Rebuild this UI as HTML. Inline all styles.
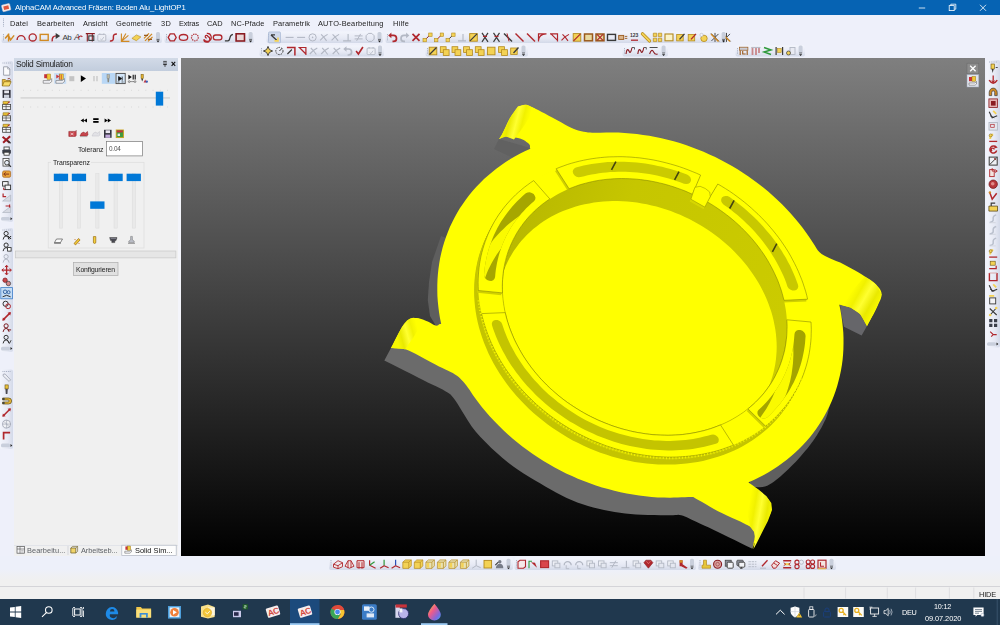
<!DOCTYPE html>
<html lang="de">
<head>
<meta charset="utf-8">
<title>AlphaCAM Advanced Fräsen: Boden Alu_LightOP1</title>
<style>
*{box-sizing:border-box;margin:0;padding:0}
html,body{width:1000px;height:625px;overflow:hidden;background:#eef0fa}
body{position:relative;font-family:"Liberation Sans",sans-serif;font-size:7.3px;color:#1a1a1a;-webkit-font-smoothing:antialiased}
.abs{position:absolute}
.tx{white-space:nowrap;line-height:9px;color:#1c1c1c;will-change:transform}
#title{left:0;top:0;width:1000px;height:15px;background:#0663b3;color:#fff}
#title .t{position:absolute;left:14.5px;top:3.2px;font-size:7.7px;line-height:9px;white-space:nowrap;letter-spacing:-0.05px}
#menu{left:0;top:15px;width:1000px;height:15px;background:#eef0fa}
#menu span{position:absolute;top:3.6px;font-size:7.4px;line-height:9px;white-space:nowrap;color:#1c1c1c}
#tools{left:0;top:30px;width:1000px;height:28px;background:#eef0fa}
#leftbar{left:0;top:58px;width:14px;height:498px;background:#eef0fa}
#panel{left:14px;top:58px;width:164px;height:498px;background:#f0f0f0}
#panel .hd{position:absolute;left:0;top:0;width:164px;height:12.5px;background:linear-gradient(#d2dae7,#c2cddd)}
#panel .hd .t{position:absolute;left:2px;top:1.7px;font-size:8px;line-height:9px;color:#1c1c1c;white-space:nowrap}
#split{left:178px;top:58px;width:3px;height:498px;background:#f4f5fb}
#view{left:181px;top:58px;width:804px;height:498px;background:linear-gradient(#7f7f7f,#000);overflow:hidden}
#rightbar{left:985px;top:58px;width:15px;height:498px;background:#eef0fa}
#bottools{left:0;top:556px;width:1000px;height:30px;background:linear-gradient(#edf0fa 0,#edf0fa 13px,#eff0f4 19px,#f0f0f0 24px)}
#status{left:0;top:586px;width:1000px;height:13px;background:#f0f0f0;border-top:1px solid #d4d4d8}
#task{left:0;top:599px;width:1000px;height:26px;background:#20384e}
</style>
</head>
<body>
<div id="title" class="abs"></div>
<div id="menu" class="abs"></div>
<div id="tools" class="abs"></div>
<div id="leftbar" class="abs"></div>
<div id="panel" class="abs">
<div class="hd"></div>
</div>
<div id="split" class="abs"></div>
<div id="view" class="abs">
<svg id="scene" width="804" height="498" viewBox="181 58 804 498" style="position:absolute;left:0;top:0">
<!--SCENE-->
<path d="M499.0,139.0 L530.0,148.0 L522.0,162.0 L494.0,149.0Z" fill="#616161"/>
<path d="M441.0,236.0 L432.0,262.0 L429.0,282.0 L427.8,300.0 L430.0,316.0 L436.0,326.0 L448.0,326.0 L452.0,240.0Z" fill="#5e5e5e"/>
<path d="M391.0,348.0 L384.3,360.5 L390.9,363.8 L397.8,367.3 L404.7,370.8 L411.3,374.1 L417.5,377.2 L423.0,380.0 L427.8,382.4 L432.1,384.4 L436.0,386.3 L439.5,388.0 L442.6,389.6 L445.4,391.2 L447.6,392.5 L449.1,393.5 L450.3,394.3 L451.4,395.4 L452.9,397.2 L455.0,400.0 L457.7,404.0 L460.7,409.0 L464.1,414.6 L467.8,420.6 L471.7,426.5 L476.0,432.0 L480.7,437.3 L485.9,442.6 L491.3,447.9 L496.9,453.1 L502.5,458.0 L508.0,462.5 L513.3,466.6 L518.7,470.3 L524.0,473.7 L529.3,477.0 L534.7,480.2 L540.0,483.3 L545.3,486.4 L550.7,489.5 L556.0,492.5 L561.3,495.3 L566.7,497.9 L572.0,500.3 L577.3,502.4 L582.7,504.3 L588.0,505.9 L593.3,507.4 L598.7,508.8 L604.0,510.0 L609.3,511.1 L614.6,512.0 L619.9,512.8 L625.2,513.5 L630.6,514.0 L636.0,514.5 L641.8,514.8 L648.0,515.0 L654.3,515.1 L660.3,515.2 L665.6,515.2 L670.0,515.2 L673.2,515.2 L675.4,515.0 L676.9,514.9 L678.2,514.8 L679.5,514.9 L681.2,515.2 L683.1,515.7 L684.9,516.4 L686.8,517.3 L688.8,518.3 L691.2,519.5 L694.0,520.8 L697.2,522.3 L700.8,523.9 L704.7,525.7 L708.8,527.6 L713.3,529.7 L718.0,532.0 L723.1,534.5 L728.7,537.2 L734.6,540.0 L740.5,543.0 L746.5,545.9 L752.4,548.8 L760.0,520.0 L740.0,500.0 L600.0,470.0 L480.0,380.0 L400.0,340.0Z" fill="#6b6b6b"/>
<path d="M749.2,483.2 L749.8,484.0 L750.3,484.8 L750.9,485.6 L751.7,486.3 L753.0,486.8 L754.9,487.1 L757.3,487.3 L759.9,487.3 L762.5,487.0 L765.0,486.5 L767.2,485.7 L769.4,484.5 L771.6,483.2 L773.8,481.7 L776.0,480.0 L778.3,478.2 L780.7,476.2 L783.1,474.1 L785.6,471.8 L788.0,469.5 L790.5,467.1 L793.0,464.5 L795.6,461.9 L798.1,459.2 L800.5,456.5 L802.8,453.8 L805.1,451.1 L807.4,448.4 L809.5,445.7 L811.5,443.0 L813.4,440.4 L815.2,437.8 L816.9,435.2 L818.5,432.6 L820.0,430.0 L821.5,427.4 L822.9,424.7 L824.2,422.1 L825.5,419.5 L826.5,417.0 L827.3,414.7 L828.0,412.5 L828.5,410.3 L829.0,408.2 L829.5,406.0 L820.0,400.0 L780.0,460.0 L750.0,480.0Z" fill="#5f5f5f"/>
<path d="M840.0,304.7 L850.4,307.6 L860.0,314.0 L865.6,323.6 L867.0,326.0 L861.6,335.6 L844.0,326.8 L841.6,315.6Z" fill="#66666a"/>
<path d="M441.2,323.9 L440.0,318.3 L439.1,312.8 L438.4,307.2 L437.8,301.6 L437.4,296.0 L437.3,290.4 L437.3,284.9 L437.5,279.4 L437.9,273.9 L438.5,268.5 L439.3,263.1 L440.2,257.8 L441.4,252.5 L442.7,247.3 L444.3,242.1 L446.0,237.0 L447.9,232.0 L449.9,227.0 L452.2,222.2 L454.6,217.4 L457.2,212.7 L460.0,208.1 L463.0,203.7 L466.1,199.3 L469.3,195.0 L472.8,190.8 L476.4,186.8 L480.1,182.9 L484.0,179.1 L488.1,175.4 L492.3,171.9 L496.6,168.5 L501.1,165.2 L505.7,162.1 L510.4,159.1 L515.2,156.3 L520.2,153.6 L525.3,151.0 L530.4,148.7 L530.0,148.0 L529.9,147.4 L530.0,146.7 L530.0,146.1 L529.9,145.4 L529.6,144.8 L529.0,144.0 L528.0,143.1 L526.8,142.2 L525.3,141.1 L523.7,140.1 L521.9,139.2 L520.0,138.5 L517.9,137.9 L515.4,137.4 L512.9,136.9 L510.3,136.6 L508.0,136.4 L506.0,136.4 L504.4,136.6 L503.1,136.9 L502.1,137.4 L501.1,138.0 L500.1,138.5 L499.0,139.0 L499.0,139.0 L499.4,138.4 L499.8,137.9 L500.2,137.5 L500.6,136.9 L501.2,135.9 L502.0,134.5 L503.0,132.4 L504.3,129.7 L505.7,126.7 L507.1,123.6 L508.6,120.6 L510.0,118.0 L511.3,115.8 L512.7,113.8 L514.0,111.9 L515.3,110.1 L516.7,108.3 L518.0,106.4 L518.0,106.4 L519.3,106.1 L520.6,105.7 L521.9,105.2 L523.2,104.9 L524.6,104.7 L526.0,104.8 L527.4,105.1 L528.9,105.6 L530.3,106.2 L531.9,107.0 L533.8,107.9 L536.0,109.0 L538.6,110.3 L541.7,111.9 L544.9,113.6 L548.3,115.5 L551.7,117.3 L555.0,119.0 L558.2,120.7 L561.5,122.6 L564.8,124.4 L568.0,126.2 L571.1,127.7 L574.0,129.0 L576.6,130.0 L579.1,130.7 L581.4,131.3 L583.7,131.7 L585.8,132.1 L588.0,132.4 L590.1,132.6 L592.2,132.7 L594.2,132.8 L596.2,132.7 L598.2,132.7 L600.2,132.7 L600.2,132.7 L606.3,132.5 L612.3,132.5 L618.5,132.6 L624.6,132.9 L630.7,133.4 L636.9,134.0 L643.1,134.9 L649.2,135.8 L655.4,137.0 L661.5,138.3 L667.6,139.7 L673.7,141.3 L679.8,143.1 L685.8,145.1 L691.8,147.2 L697.7,149.4 L703.6,151.8 L709.4,154.4 L715.2,157.1 L720.9,159.9 L726.5,162.9 L732.0,166.0 L737.5,169.3 L742.8,172.7 L748.1,176.2 L753.3,179.9 L758.4,183.7 L763.3,187.6 L768.2,191.6 L772.9,195.7 L777.5,200.0 L782.0,204.3 L786.3,208.8 L790.5,213.3 L794.6,218.0 L798.6,222.7 L802.4,227.5 L806.0,232.4 L809.5,237.4 L812.8,242.5 L812.8,242.5 L814.1,244.4 L815.2,246.3 L816.4,248.3 L817.7,250.2 L819.3,252.1 L821.6,254.0 L824.6,255.8 L828.1,257.5 L832.0,259.2 L836.1,260.9 L840.2,262.6 L844.0,264.4 L847.7,266.4 L851.4,268.4 L855.1,270.5 L858.6,272.6 L861.9,274.6 L864.8,276.4 L867.3,277.9 L869.5,279.3 L871.3,280.5 L873.0,281.7 L874.6,283.0 L876.0,284.4 L877.4,285.9 L878.7,287.4 L879.9,289.0 L880.8,290.7 L881.4,292.5 L881.6,294.5 L881.4,296.6 L880.7,298.9 L879.7,301.3 L878.5,303.8 L877.3,306.4 L876.0,309.0 L874.7,311.7 L873.3,314.5 L871.7,317.3 L870.1,320.2 L868.5,323.1 L867.0,326.0 L867.0,326.0 L866.8,325.7 L866.7,325.5 L866.6,325.3 L866.4,324.9 L866.1,324.4 L865.6,323.6 L865.0,322.4 L864.2,320.8 L863.3,319.1 L862.3,317.2 L861.2,315.5 L860.0,314.0 L858.6,312.7 L857.1,311.5 L855.5,310.4 L853.8,309.4 L852.1,308.4 L850.4,307.6 L848.7,306.9 L847.0,306.4 L845.2,305.9 L843.5,305.5 L841.7,305.1 L840.0,304.7 L839.3,304.7 L840.5,310.3 L841.4,315.8 L842.2,321.4 L842.8,326.9 L843.3,332.4 L843.5,337.9 L843.5,343.4 L843.4,348.9 L843.1,354.3 L842.6,359.7 L841.9,365.0 L841.0,370.3 L839.9,375.6 L838.6,380.8 L837.2,385.9 L835.6,391.0 L833.8,396.0 L831.8,400.9 L829.7,405.8 L827.3,410.6 L824.8,415.2 L822.2,419.8 L819.3,424.3 L816.3,428.7 L813.2,433.0 L809.9,437.2 L806.4,441.2 L802.7,445.2 L799.0,449.0 L795.0,452.7 L791.0,456.3 L786.8,459.7 L782.4,463.1 L778.0,466.2 L773.4,469.3 L768.6,472.2 L763.8,474.9 L758.8,477.5 L753.8,480.0 L748.6,482.3 L749.2,483.2 L751.0,484.7 L752.8,486.2 L754.6,487.8 L756.3,489.2 L758.0,490.7 L759.6,492.0 L761.1,493.2 L762.6,494.3 L764.0,495.2 L765.4,496.2 L766.6,497.3 L767.6,498.4 L768.5,499.6 L769.3,500.9 L769.9,502.3 L770.4,503.7 L770.8,505.0 L771.1,506.4 L771.2,507.7 L771.2,509.0 L771.1,510.3 L770.9,511.6 L770.5,513.0 L770.0,514.4 L769.3,515.9 L768.5,517.4 L767.5,519.0 L766.5,520.6 L765.4,522.3 L764.4,524.0 L763.4,525.7 L762.3,527.5 L761.2,529.4 L760.1,531.2 L759.0,533.2 L758.0,535.2 L757.0,537.3 L756.1,539.6 L755.2,541.9 L754.2,544.2 L753.3,546.5 L752.4,548.8 L752.4,548.8 L752.9,546.5 L753.4,544.0 L753.9,541.6 L754.4,539.3 L754.7,537.1 L754.8,535.2 L754.6,533.6 L754.3,532.2 L753.8,531.0 L753.2,530.0 L752.5,529.0 L751.6,528.0 L750.7,527.1 L749.9,526.5 L749.0,525.9 L747.7,525.2 L746.0,524.4 L743.6,523.2 L740.3,521.6 L736.3,519.8 L731.7,517.7 L726.9,515.5 L722.3,513.3 L718.0,511.2 L713.9,509.0 L709.6,506.6 L705.5,504.1 L701.6,501.8 L698.3,499.9 L695.6,498.4 L694.0,497.5 L693.3,497.0 L693.1,496.9 L692.9,497.0 L692.3,497.1 L690.8,497.1 L688.3,497.1 L685.1,497.2 L681.5,497.3 L677.6,497.4 L673.8,497.6 L670.1,497.7 L670.1,497.7 L664.0,497.6 L657.8,497.4 L651.6,496.9 L645.3,496.3 L639.1,495.5 L632.9,494.6 L626.7,493.5 L620.5,492.2 L614.3,490.8 L608.1,489.1 L602.0,487.4 L595.9,485.4 L589.8,483.3 L583.8,481.1 L577.9,478.7 L572.0,476.1 L566.1,473.4 L560.4,470.5 L554.7,467.5 L549.1,464.3 L543.5,461.0 L538.1,457.6 L532.8,454.0 L527.6,450.3 L522.4,446.5 L517.4,442.6 L512.5,438.5 L507.7,434.3 L503.1,430.0 L498.6,425.6 L494.2,421.1 L489.9,416.5 L485.8,411.8 L481.8,407.0 L478.0,402.1 L474.3,397.1 L474.3,397.1 L472.7,394.8 L471.1,392.3 L469.5,389.8 L467.8,387.5 L466.2,385.2 L464.6,383.2 L463.1,381.4 L461.6,379.9 L460.2,378.4 L458.7,377.1 L457.0,375.8 L455.0,374.4 L452.8,373.1 L450.6,371.9 L448.1,370.8 L445.4,369.5 L442.4,368.1 L439.0,366.4 L434.9,364.2 L430.1,361.7 L425.0,358.9 L420.0,356.2 L415.4,353.8 L411.8,352.0 L409.2,350.8 L407.4,350.0 L406.0,349.6 L404.9,349.3 L403.7,349.1 L402.2,348.8 L400.4,348.5 L398.6,348.4 L396.7,348.3 L394.8,348.2 L392.9,348.1 L391.0,348.0 L391.0,348.0 L392.9,344.4 L394.8,340.5 L396.7,336.7 L398.6,333.0 L400.4,329.8 L402.0,327.0 L403.4,324.8 L404.7,323.1 L405.9,321.7 L407.0,320.6 L408.1,319.7 L409.4,318.9 L410.7,318.3 L412.1,318.0 L413.5,317.8 L415.0,317.9 L416.5,318.0 L418.0,318.2 L419.6,318.5 L421.2,319.0 L422.9,319.6 L424.6,320.3 L426.3,321.0 L427.8,321.6 L429.3,322.3 L430.7,323.1 L432.2,323.9 L433.5,324.7 L434.7,325.3 L435.8,325.6 L436.7,325.7 L437.4,325.5 L438.1,325.2 L438.6,324.7 L439.2,324.3 L439.8,324.0Z" fill="#ffff00"/>
<defs><linearGradient id="wg" gradientUnits="userSpaceOnUse" x1="500" y1="210" x2="790" y2="300"><stop offset="0" stop-color="#b6b600"/><stop offset="0.4" stop-color="#c6c600"/><stop offset="1" stop-color="#cbcb00"/></linearGradient><clipPath id="rimclip"><path d="M774.7,376.9 L773.2,379.7 L771.5,382.5 L769.8,385.1 L768.0,387.8 L766.1,390.4 L764.1,392.9 L762.0,395.4 L759.9,397.8 L757.6,400.1 L755.3,402.4 L752.9,404.6 L750.5,406.7 L747.9,408.8 L745.3,410.8 L742.7,412.8 L739.9,414.6 L737.1,416.4 L734.3,418.1 L731.3,419.8 L728.4,421.3 L725.3,422.8 L722.2,424.2 L719.1,425.5 L715.9,426.8 L712.6,428.0 L709.3,429.0 L706.0,430.0 L702.6,430.9 L699.2,431.8 L695.7,432.5 L692.2,433.1 L688.7,433.7 L685.1,434.2 L681.5,434.6 L677.9,434.9 L674.3,435.1 L670.6,435.2 L666.9,435.3 L663.3,435.2 L659.6,435.1 L655.8,434.9 L652.1,434.6 L648.4,434.2 L644.7,433.7 L640.9,433.1 L637.2,432.4 L633.5,431.7 L629.8,430.9 L626.1,430.0 L622.4,429.0 L618.7,427.9 L615.1,426.7 L611.4,425.5 L607.8,424.1 L604.2,422.7 L600.7,421.2 L597.1,419.7 L593.7,418.0 L590.2,416.3 L586.8,414.5 L583.4,412.6 L580.0,410.7 L576.7,408.7 L573.5,406.6 L570.3,404.4 L567.1,402.2 L564.0,399.9 L561.0,397.6 L558.0,395.2 L555.1,392.7 L552.2,390.2 L549.4,387.6 L546.7,384.9 L544.0,382.3 L541.4,379.5 L538.9,376.7 L536.4,373.9 L534.0,371.0 L531.7,368.0 L529.5,365.1 L527.4,362.1 L525.3,359.0 L523.3,355.9 L521.4,352.8 L519.6,349.6 L517.8,346.4 L516.2,343.2 L514.6,340.0 L513.2,336.7 L511.8,333.5 L510.5,330.2 L509.3,326.9 L508.2,323.5 L507.2,320.2 L506.3,316.8 L505.4,313.5 L504.7,310.1 L504.1,306.8 L503.5,303.4 L503.1,300.1 L502.8,296.7 L502.5,293.4 L502.4,290.0 L502.3,286.7 L502.4,283.4 L502.5,280.1 L502.8,276.8 L503.1,273.6 L503.6,270.3 L504.1,267.1 L504.7,263.9 L505.5,260.8 L506.3,257.7 L507.2,254.6 L508.2,251.5 L509.3,248.5 L510.5,245.5 L511.8,242.6 L513.2,239.7 L514.7,236.9 L516.2,234.1 L517.9,231.3 L519.6,228.7 L521.4,226.0 L523.3,223.4 L525.3,220.9 L527.4,218.4 L529.5,216.0 L531.8,213.7 L534.1,211.4 L536.5,209.2 L538.9,207.1 L541.5,205.0 L544.1,203.0 L546.7,201.0 L549.5,199.2 L552.3,197.4 L555.1,195.7 L558.1,194.0 L561.0,192.5 L564.1,191.0 L567.2,189.6 L570.3,188.3 L573.5,187.0 L576.8,185.8 L580.1,184.8 L583.4,183.8 L586.8,182.9 L590.2,182.0 L593.7,181.3 L597.2,180.7 L600.7,180.1 L604.3,179.6 L607.9,179.2 L611.5,178.9 L615.1,178.7 L618.8,178.6 L622.5,178.5 L626.1,178.6 L629.8,178.7 L633.6,178.9 L637.3,179.2 L641.0,179.6 L644.7,180.1 L648.5,180.7 L652.2,181.4 L655.9,182.1 L659.6,182.9 L663.3,183.8 L667.0,184.8 L670.7,185.9 L674.3,187.1 L678.0,188.3 L681.6,189.7 L685.2,191.1 L688.7,192.6 L692.3,194.1 L695.7,195.8 L699.2,197.5 L702.6,199.3 L706.0,201.2 L709.4,203.1 L712.7,205.1 L715.9,207.2 L719.1,209.4 L722.3,211.6 L725.4,213.9 L728.4,216.2 L731.4,218.6 L734.3,221.1 L737.2,223.6 L740.0,226.2 L742.7,228.9 L745.4,231.5 L748.0,234.3 L750.5,237.1 L753.0,239.9 L755.4,242.8 L757.7,245.8 L759.9,248.7 L762.0,251.7 L764.1,254.8 L766.1,257.9 L768.0,261.0 L769.8,264.2 L771.6,267.4 L773.2,270.6 L774.8,273.8 L776.2,277.1 L777.6,280.3 L778.9,283.6 L780.1,286.9 L781.2,290.3 L782.2,293.6 L783.1,297.0 L784.0,300.3 L784.7,303.7 L785.3,307.0 L785.9,310.4 L786.3,313.7 L786.6,317.1 L786.9,320.4 L787.0,323.8 L787.1,327.1 L787.0,330.4 L786.9,333.7 L786.6,337.0 L786.3,340.2 L785.8,343.5 L785.3,346.7 L784.7,349.9 L783.9,353.0 L783.1,356.1 L782.2,359.2 L781.2,362.3 L780.1,365.3 L778.9,368.3 L777.6,371.2 L776.2,374.1 L774.7,376.9Z"/></clipPath></defs>
<path d="M792.8,396.4 L790.3,400.7 L787.7,405.0 L784.9,409.1 L781.9,413.1 L778.7,417.0 L775.4,420.8 L771.9,424.4 L768.2,427.9 L764.4,431.3 L760.4,434.5 L756.3,437.6 L752.1,440.5 L747.7,443.3 L743.1,445.9 L738.5,448.4 L733.7,450.7 L728.9,452.8 L723.9,454.7 L718.8,456.5 L713.6,458.1 L708.3,459.6 L703.0,460.9 L697.6,461.9 L692.1,462.8 L686.5,463.6 L680.9,464.1 L675.2,464.5 L669.5,464.6 L663.8,464.6 L658.0,464.5 L652.2,464.1 L646.4,463.5 L640.6,462.8 L634.8,461.9 L629.0,460.8 L623.2,459.5 L617.4,458.1 L611.7,456.4 L606.0,454.6 L600.3,452.7 L594.7,450.5 L589.1,448.2 L583.6,445.8 L578.2,443.1 L572.8,440.4 L567.6,437.4 L562.4,434.3 L557.3,431.1 L552.3,427.7 L547.4,424.2 L542.7,420.6 L538.0,416.8 L533.5,412.9 L529.1,408.9 L524.9,404.7 L520.8,400.5 L516.8,396.2 L513.0,391.7 L509.3,387.2 L505.8,382.5 L502.5,377.8 L499.3,373.0 L496.4,368.2 L493.5,363.2 L490.9,358.2 L488.4,353.2 L486.2,348.1 L484.1,343.0 L482.2,337.8 L480.5,332.6 L479.0,327.4 L477.7,322.2 L476.6,316.9 L475.7,311.7 L475.0,306.5 L474.5,301.2 L474.2,296.0 L474.1,290.8 L474.2,285.7 L474.5,280.5 L475.0,275.5 L475.7,270.4 L476.6,265.4 L477.7,260.5 L479.0,255.6 L480.5,250.9 L482.2,246.2 L484.1,241.5 L486.2,237.0 L488.5,232.5 L490.9,228.2 L493.6,224.0 L496.4,219.8 L499.4,215.8 L502.6,211.9 L505.9,208.2 L509.4,204.5 L513.0,201.0 L516.9,197.7 L520.8,194.4 L524.9,191.4 L529.2,188.4 L533.6,185.7 L538.1,183.0 L542.7,180.6 L547.5,178.3 L552.4,176.2 L557.4,174.2 L562.5,172.4 L567.6,170.8 L572.9,169.4 L578.3,168.1 L583.7,167.0 L589.2,166.1 L594.7,165.4 L600.4,164.8 L606.0,164.5 L611.7,164.3 L617.5,164.3 L623.2,164.5 L629.0,164.9 L634.8,165.4 L640.7,166.1 L646.5,167.1 L652.3,168.2 L658.1,169.4 L663.8,170.9 L669.6,172.5 L675.3,174.3 L681.0,176.3 L686.6,178.4 L692.1,180.7 L697.6,183.2 L703.1,185.8 L708.4,188.6 L713.7,191.5 L718.9,194.6 L723.9,197.8 L728.9,201.2 L733.8,204.7 L738.6,208.4 L743.2,212.1 L747.7,216.0 L752.1,220.1 L756.4,224.2 L760.5,228.4 L764.4,232.8 L768.2,237.2 L771.9,241.8 L775.4,246.4 L778.7,251.1 L781.9,255.9 L784.9,260.8 L787.7,265.7 L790.4,270.7 L792.8,275.7 L795.1,280.8 L797.2,286.0 L799.1,291.1 L800.7,296.3 L802.3,301.5 L803.6,306.8 L804.7,312.0 L805.6,317.2 L806.3,322.5 L806.8,327.7 L807.1,332.9 L807.2,338.1 L807.1,343.3 L806.8,348.4 L806.3,353.5 L805.6,358.5 L804.7,363.5 L803.5,368.4 L802.2,373.3 L800.7,378.1 L799.0,382.8 L797.1,387.4 L795.1,392.0 L792.8,396.4Z" fill="#c4c400"/>
<path d="M793.4,395.3 L790.9,399.7 L788.3,403.9 L785.4,408.0 L782.4,412.0 L779.3,415.9 L775.9,419.7 L772.4,423.3 L768.8,426.8 L765.0,430.2 L761.0,433.4 L756.9,436.5 L752.6,439.4 L748.2,442.2 L743.7,444.8 L739.1,447.3 L734.3,449.6 L729.4,451.7 L724.5,453.7 L719.4,455.5 L714.2,457.1 L708.9,458.5 L703.6,459.8 L698.1,460.9 L692.6,461.8 L687.1,462.5 L681.5,463.0 L675.8,463.4 L670.1,463.6 L664.4,463.6 L658.6,463.4 L652.8,463.0 L647.0,462.4 L641.2,461.7 L635.4,460.8 L629.6,459.7 L623.8,458.4 L618.0,457.0 L612.2,455.4 L606.5,453.6 L600.9,451.6 L595.3,449.5 L589.7,447.1 L584.2,444.7 L578.8,442.1 L573.4,439.3 L568.2,436.3 L563.0,433.3 L557.9,430.0 L552.9,426.6 L548.0,423.1 L543.3,419.5 L538.6,415.7 L534.1,411.8 L529.7,407.8 L525.5,403.7 L521.4,399.4 L517.4,395.1 L513.6,390.6 L509.9,386.1 L506.4,381.4 L503.1,376.7 L499.9,371.9 L496.9,367.1 L494.1,362.2 L491.5,357.2 L489.0,352.1 L486.8,347.0 L484.7,341.9 L482.8,336.7 L481.1,331.5 L479.6,326.3 L478.3,321.1 L477.2,315.9 L476.3,310.6 L475.5,305.4 L475.0,300.2 L474.7,294.9 L474.6,289.7 L474.7,284.6 L475.0,279.5 L475.6,274.4 L476.3,269.3 L477.2,264.4 L478.3,259.4 L479.6,254.6 L481.1,249.8 L482.8,245.1 L484.7,240.4 L486.8,235.9 L489.1,231.5 L491.5,227.1 L494.1,222.9 L497.0,218.8 L500.0,214.7 L503.1,210.8 L506.5,207.1 L510.0,203.4 L513.6,199.9 L517.4,196.6 L521.4,193.3 L525.5,190.3 L529.8,187.3 L534.2,184.6 L538.7,182.0 L543.3,179.5 L548.1,177.2 L553.0,175.1 L558.0,173.1 L563.0,171.3 L568.2,169.7 L573.5,168.3 L578.8,167.0 L584.3,165.9 L589.8,165.0 L595.3,164.3 L600.9,163.8 L606.6,163.4 L612.3,163.2 L618.1,163.2 L623.8,163.4 L629.6,163.8 L635.4,164.3 L641.2,165.1 L647.1,166.0 L652.9,167.1 L658.7,168.3 L664.4,169.8 L670.2,171.4 L675.9,173.2 L681.5,175.2 L687.2,177.3 L692.7,179.6 L698.2,182.1 L703.6,184.7 L709.0,187.5 L714.3,190.4 L719.4,193.5 L724.5,196.8 L729.5,200.1 L734.4,203.6 L739.1,207.3 L743.8,211.1 L748.3,215.0 L752.7,219.0 L756.9,223.1 L761.0,227.4 L765.0,231.7 L768.8,236.2 L772.5,240.7 L776.0,245.3 L779.3,250.0 L782.5,254.8 L785.5,259.7 L788.3,264.6 L790.9,269.6 L793.4,274.7 L795.7,279.7 L797.7,284.9 L799.6,290.0 L801.3,295.2 L802.8,300.4 L804.1,305.7 L805.3,310.9 L806.2,316.2 L806.9,321.4 L807.4,326.6 L807.7,331.8 L807.8,337.0 L807.7,342.2 L807.4,347.3 L806.9,352.4 L806.1,357.4 L805.2,362.4 L804.1,367.4 L802.8,372.2 L801.3,377.0 L799.6,381.7 L797.7,386.3 L795.6,390.9 L793.4,395.3Z" fill="#c4c400"/>
<path d="M793.9,394.2 L791.5,398.6 L788.8,402.8 L786.0,406.9 L783.0,411.0 L779.9,414.9 L776.5,418.6 L773.0,422.3 L769.4,425.8 L765.5,429.1 L761.6,432.3 L757.5,435.4 L753.2,438.4 L748.8,441.1 L744.3,443.7 L739.7,446.2 L734.9,448.5 L730.0,450.6 L725.0,452.6 L720.0,454.4 L714.8,456.0 L709.5,457.4 L704.2,458.7 L698.7,459.8 L693.2,460.7 L687.7,461.4 L682.1,461.9 L676.4,462.3 L670.7,462.5 L664.9,462.5 L659.2,462.3 L653.4,461.9 L647.6,461.4 L641.8,460.6 L635.9,459.7 L630.1,458.6 L624.3,457.3 L618.6,455.9 L612.8,454.3 L607.1,452.5 L601.5,450.5 L595.8,448.4 L590.3,446.1 L584.8,443.6 L579.4,441.0 L574.0,438.2 L568.7,435.3 L563.6,432.2 L558.5,428.9 L553.5,425.6 L548.6,422.1 L543.9,418.4 L539.2,414.6 L534.7,410.7 L530.3,406.7 L526.1,402.6 L521.9,398.3 L518.0,394.0 L514.2,389.5 L510.5,385.0 L507.0,380.4 L503.7,375.7 L500.5,370.9 L497.5,366.0 L494.7,361.1 L492.1,356.1 L489.6,351.0 L487.3,346.0 L485.3,340.8 L483.4,335.7 L481.7,330.5 L480.2,325.3 L478.9,320.0 L477.7,314.8 L476.8,309.5 L476.1,304.3 L475.6,299.1 L475.3,293.9 L475.2,288.7 L475.3,283.5 L475.6,278.4 L476.1,273.3 L476.8,268.3 L477.8,263.3 L478.9,258.3 L480.2,253.5 L481.7,248.7 L483.4,244.0 L485.3,239.4 L487.4,234.8 L489.6,230.4 L492.1,226.0 L494.7,221.8 L497.6,217.7 L500.5,213.7 L503.7,209.8 L507.1,206.0 L510.6,202.4 L514.2,198.9 L518.0,195.5 L522.0,192.3 L526.1,189.2 L530.4,186.3 L534.7,183.5 L539.3,180.9 L543.9,178.4 L548.7,176.1 L553.5,174.0 L558.5,172.0 L563.6,170.2 L568.8,168.6 L574.1,167.2 L579.4,165.9 L584.9,164.8 L590.3,163.9 L595.9,163.2 L601.5,162.7 L607.2,162.3 L612.9,162.1 L618.6,162.1 L624.4,162.3 L630.2,162.7 L636.0,163.2 L641.8,164.0 L647.6,164.9 L653.4,166.0 L659.2,167.3 L665.0,168.7 L670.7,170.3 L676.5,172.1 L682.1,174.1 L687.7,176.2 L693.3,178.5 L698.8,181.0 L704.2,183.6 L709.6,186.4 L714.8,189.4 L720.0,192.4 L725.1,195.7 L730.1,199.1 L735.0,202.6 L739.7,206.2 L744.4,210.0 L748.9,213.9 L753.3,217.9 L757.5,222.0 L761.6,226.3 L765.6,230.6 L769.4,235.1 L773.1,239.6 L776.6,244.3 L779.9,249.0 L783.1,253.8 L786.1,258.6 L788.9,263.5 L791.5,268.5 L794.0,273.6 L796.2,278.7 L798.3,283.8 L800.2,289.0 L801.9,294.2 L803.4,299.4 L804.7,304.6 L805.8,309.8 L806.7,315.1 L807.4,320.3 L808.0,325.5 L808.3,330.8 L808.4,336.0 L808.3,341.1 L807.9,346.2 L807.4,351.3 L806.7,356.4 L805.8,361.3 L804.7,366.3 L803.4,371.1 L801.9,375.9 L800.2,380.6 L798.3,385.3 L796.2,389.8 L793.9,394.2Z" fill="#c4c400"/>
<path d="M794.5,393.2 L792.1,397.5 L789.4,401.7 L786.6,405.9 L783.6,409.9 L780.4,413.8 L777.1,417.5 L773.6,421.2 L769.9,424.7 L766.1,428.0 L762.2,431.3 L758.1,434.3 L753.8,437.3 L749.4,440.0 L744.9,442.7 L740.2,445.1 L735.5,447.4 L730.6,449.5 L725.6,451.5 L720.5,453.3 L715.4,454.9 L710.1,456.3 L704.7,457.6 L699.3,458.7 L693.8,459.6 L688.2,460.3 L682.6,460.9 L677.0,461.2 L671.3,461.4 L665.5,461.4 L659.7,461.2 L654.0,460.8 L648.1,460.3 L642.3,459.6 L636.5,458.6 L630.7,457.5 L624.9,456.3 L619.2,454.8 L613.4,453.2 L607.7,451.4 L602.0,449.4 L596.4,447.3 L590.9,445.0 L585.4,442.5 L579.9,439.9 L574.6,437.1 L569.3,434.2 L564.1,431.1 L559.1,427.9 L554.1,424.5 L549.2,421.0 L544.4,417.3 L539.8,413.6 L535.3,409.7 L530.9,405.6 L526.6,401.5 L522.5,397.3 L518.6,392.9 L514.7,388.5 L511.1,383.9 L507.6,379.3 L504.3,374.6 L501.1,369.8 L498.1,364.9 L495.3,360.0 L492.6,355.0 L490.2,350.0 L487.9,344.9 L485.8,339.7 L483.9,334.6 L482.2,329.4 L480.7,324.2 L479.4,318.9 L478.3,313.7 L477.4,308.5 L476.7,303.2 L476.2,298.0 L475.9,292.8 L475.8,287.6 L475.9,282.4 L476.2,277.3 L476.7,272.2 L477.4,267.2 L478.3,262.2 L479.4,257.3 L480.8,252.4 L482.3,247.6 L484.0,242.9 L485.9,238.3 L487.9,233.7 L490.2,229.3 L492.7,225.0 L495.3,220.7 L498.1,216.6 L501.1,212.6 L504.3,208.7 L507.6,204.9 L511.1,201.3 L514.8,197.8 L518.6,194.4 L522.6,191.2 L526.7,188.1 L530.9,185.2 L535.3,182.4 L539.8,179.8 L544.5,177.3 L549.3,175.0 L554.1,172.9 L559.1,171.0 L564.2,169.2 L569.4,167.5 L574.7,166.1 L580.0,164.8 L585.4,163.8 L590.9,162.9 L596.5,162.1 L602.1,161.6 L607.8,161.2 L613.5,161.1 L619.2,161.1 L625.0,161.2 L630.8,161.6 L636.6,162.2 L642.4,162.9 L648.2,163.8 L654.0,164.9 L659.8,166.2 L665.6,167.6 L671.3,169.3 L677.0,171.1 L682.7,173.0 L688.3,175.2 L693.9,177.5 L699.4,179.9 L704.8,182.6 L710.2,185.3 L715.4,188.3 L720.6,191.4 L725.7,194.6 L730.7,198.0 L735.5,201.5 L740.3,205.1 L744.9,208.9 L749.5,212.8 L753.9,216.8 L758.1,221.0 L762.2,225.2 L766.2,229.5 L770.0,234.0 L773.7,238.5 L777.1,243.2 L780.5,247.9 L783.6,252.7 L786.6,257.5 L789.5,262.5 L792.1,267.5 L794.6,272.5 L796.8,277.6 L798.9,282.7 L800.8,287.9 L802.5,293.1 L804.0,298.3 L805.3,303.5 L806.4,308.8 L807.3,314.0 L808.0,319.2 L808.5,324.5 L808.8,329.7 L808.9,334.9 L808.8,340.0 L808.5,345.2 L808.0,350.2 L807.3,355.3 L806.4,360.3 L805.3,365.2 L804.0,370.0 L802.5,374.8 L800.8,379.5 L798.9,384.2 L796.8,388.7 L794.5,393.2Z" fill="#c4c400"/>
<path d="M795.1,392.1 L792.6,396.4 L790.0,400.7 L787.2,404.8 L784.2,408.8 L781.0,412.7 L777.7,416.5 L774.2,420.1 L770.5,423.6 L766.7,427.0 L762.7,430.2 L758.6,433.3 L754.4,436.2 L750.0,439.0 L745.5,441.6 L740.8,444.0 L736.1,446.3 L731.2,448.5 L726.2,450.4 L721.1,452.2 L715.9,453.8 L710.7,455.3 L705.3,456.5 L699.9,457.6 L694.4,458.5 L688.8,459.2 L683.2,459.8 L677.5,460.1 L671.8,460.3 L666.1,460.3 L660.3,460.1 L654.5,459.8 L648.7,459.2 L642.9,458.5 L637.1,457.6 L631.3,456.5 L625.5,455.2 L619.7,453.7 L614.0,452.1 L608.3,450.3 L602.6,448.3 L597.0,446.2 L591.4,443.9 L585.9,441.4 L580.5,438.8 L575.2,436.0 L569.9,433.1 L564.7,430.0 L559.6,426.8 L554.7,423.4 L549.8,419.9 L545.0,416.2 L540.4,412.5 L535.9,408.6 L531.5,404.6 L527.2,400.4 L523.1,396.2 L519.1,391.8 L515.3,387.4 L511.7,382.8 L508.2,378.2 L504.8,373.5 L501.7,368.7 L498.7,363.8 L495.9,358.9 L493.2,353.9 L490.8,348.9 L488.5,343.8 L486.4,338.7 L484.5,333.5 L482.8,328.3 L481.3,323.1 L480.0,317.9 L478.9,312.6 L478.0,307.4 L477.3,302.1 L476.8,296.9 L476.5,291.7 L476.4,286.5 L476.5,281.3 L476.8,276.2 L477.3,271.1 L478.0,266.1 L478.9,261.1 L480.0,256.2 L481.3,251.3 L482.8,246.5 L484.5,241.8 L486.4,237.2 L488.5,232.7 L490.8,228.2 L493.3,223.9 L495.9,219.6 L498.7,215.5 L501.7,211.5 L504.9,207.6 L508.2,203.8 L511.7,200.2 L515.4,196.7 L519.2,193.3 L523.2,190.1 L527.3,187.0 L531.5,184.1 L535.9,181.3 L540.4,178.7 L545.1,176.3 L549.8,174.0 L554.7,171.8 L559.7,169.9 L564.8,168.1 L570.0,166.5 L575.2,165.0 L580.6,163.8 L586.0,162.7 L591.5,161.8 L597.1,161.0 L602.7,160.5 L608.4,160.1 L614.1,160.0 L619.8,160.0 L625.6,160.2 L631.4,160.5 L637.2,161.1 L643.0,161.8 L648.8,162.7 L654.6,163.8 L660.4,165.1 L666.2,166.6 L671.9,168.2 L677.6,170.0 L683.3,171.9 L688.9,174.1 L694.5,176.4 L700.0,178.9 L705.4,181.5 L710.7,184.3 L716.0,187.2 L721.2,190.3 L726.3,193.5 L731.3,196.9 L736.1,200.4 L740.9,204.0 L745.5,207.8 L750.0,211.7 L754.4,215.7 L758.7,219.9 L762.8,224.1 L766.8,228.5 L770.6,232.9 L774.2,237.5 L777.7,242.1 L781.1,246.8 L784.2,251.6 L787.2,256.5 L790.0,261.4 L792.7,266.4 L795.1,271.4 L797.4,276.5 L799.5,281.6 L801.4,286.8 L803.1,292.0 L804.6,297.2 L805.9,302.4 L807.0,307.7 L807.9,312.9 L808.6,318.2 L809.1,323.4 L809.4,328.6 L809.5,333.8 L809.4,338.9 L809.1,344.1 L808.6,349.2 L807.9,354.2 L807.0,359.2 L805.9,364.1 L804.6,369.0 L803.1,373.8 L801.4,378.5 L799.5,383.1 L797.4,387.6 L795.1,392.1Z" fill="#c4c400"/>
<path d="M795.7,391.0 L793.2,395.3 L790.6,399.6 L787.8,403.7 L784.8,407.7 L781.6,411.6 L778.3,415.4 L774.8,419.0 L771.1,422.5 L767.3,425.9 L763.3,429.1 L759.2,432.2 L755.0,435.1 L750.6,437.9 L746.1,440.5 L741.4,443.0 L736.7,445.3 L731.8,447.4 L726.8,449.3 L721.7,451.1 L716.5,452.7 L711.3,454.2 L705.9,455.4 L700.5,456.5 L695.0,457.4 L689.4,458.2 L683.8,458.7 L678.1,459.1 L672.4,459.2 L666.7,459.2 L660.9,459.0 L655.1,458.7 L649.3,458.1 L643.5,457.4 L637.7,456.5 L631.9,455.4 L626.1,454.1 L620.3,452.7 L614.6,451.0 L608.9,449.2 L603.2,447.3 L597.6,445.1 L592.0,442.8 L586.5,440.4 L581.1,437.7 L575.8,434.9 L570.5,432.0 L565.3,428.9 L560.2,425.7 L555.2,422.3 L550.4,418.8 L545.6,415.2 L541.0,411.4 L536.4,407.5 L532.1,403.5 L527.8,399.3 L523.7,395.1 L519.7,390.7 L515.9,386.3 L512.3,381.8 L508.8,377.1 L505.4,372.4 L502.3,367.6 L499.3,362.8 L496.4,357.8 L493.8,352.8 L491.4,347.8 L489.1,342.7 L487.0,337.6 L485.1,332.4 L483.4,327.2 L481.9,322.0 L480.6,316.8 L479.5,311.5 L478.6,306.3 L477.9,301.1 L477.4,295.8 L477.1,290.6 L477.0,285.4 L477.1,280.3 L477.4,275.1 L477.9,270.0 L478.6,265.0 L479.5,260.0 L480.6,255.1 L481.9,250.2 L483.4,245.5 L485.1,240.7 L487.0,236.1 L489.1,231.6 L491.4,227.1 L493.8,222.8 L496.5,218.6 L499.3,214.4 L502.3,210.4 L505.5,206.5 L508.8,202.8 L512.3,199.1 L516.0,195.6 L519.8,192.2 L523.7,189.0 L527.9,185.9 L532.1,183.0 L536.5,180.2 L541.0,177.6 L545.7,175.2 L550.4,172.9 L555.3,170.7 L560.3,168.8 L565.4,167.0 L570.5,165.4 L575.8,163.9 L581.2,162.7 L586.6,161.6 L592.1,160.7 L597.7,160.0 L603.3,159.4 L608.9,159.1 L614.6,158.9 L620.4,158.9 L626.2,159.1 L632.0,159.5 L637.8,160.0 L643.6,160.7 L649.4,161.7 L655.2,162.7 L661.0,164.0 L666.8,165.5 L672.5,167.1 L678.2,168.9 L683.9,170.9 L689.5,173.0 L695.0,175.3 L700.5,177.8 L706.0,180.4 L711.3,183.2 L716.6,186.1 L721.8,189.2 L726.9,192.4 L731.8,195.8 L736.7,199.3 L741.5,203.0 L746.1,206.7 L750.6,210.6 L755.0,214.7 L759.3,218.8 L763.4,223.0 L767.3,227.4 L771.2,231.8 L774.8,236.4 L778.3,241.0 L781.6,245.7 L784.8,250.5 L787.8,255.4 L790.6,260.3 L793.3,265.3 L795.7,270.3 L798.0,275.4 L800.1,280.5 L802.0,285.7 L803.7,290.9 L805.2,296.1 L806.5,301.3 L807.6,306.6 L808.5,311.8 L809.2,317.1 L809.7,322.3 L810.0,327.5 L810.1,332.7 L810.0,337.9 L809.7,343.0 L809.2,348.1 L808.5,353.1 L807.6,358.1 L806.5,363.0 L805.1,367.9 L803.6,372.7 L801.9,377.4 L800.0,382.0 L798.0,386.5 L795.7,391.0Z" fill="#c4c400"/>
<path d="M796.3,389.9 L793.8,394.3 L791.2,398.5 L788.4,402.6 L785.4,406.6 L782.2,410.5 L778.9,414.3 L775.4,417.9 L771.7,421.4 L767.9,424.8 L763.9,428.0 L759.8,431.1 L755.5,434.0 L751.2,436.8 L746.6,439.4 L742.0,441.9 L737.2,444.2 L732.4,446.3 L727.4,448.3 L722.3,450.0 L717.1,451.7 L711.8,453.1 L706.5,454.4 L701.1,455.4 L695.6,456.4 L690.0,457.1 L684.4,457.6 L678.7,458.0 L673.0,458.2 L667.3,458.2 L661.5,458.0 L655.7,457.6 L649.9,457.0 L644.1,456.3 L638.3,455.4 L632.5,454.3 L626.7,453.0 L620.9,451.6 L615.2,449.9 L609.5,448.1 L603.8,446.2 L598.2,444.0 L592.6,441.7 L587.1,439.3 L581.7,436.6 L576.3,433.9 L571.1,430.9 L565.9,427.8 L560.8,424.6 L555.8,421.2 L550.9,417.7 L546.2,414.1 L541.5,410.3 L537.0,406.4 L532.6,402.4 L528.4,398.3 L524.3,394.0 L520.3,389.7 L516.5,385.2 L512.8,380.7 L509.3,376.0 L506.0,371.3 L502.8,366.5 L499.8,361.7 L497.0,356.7 L494.4,351.8 L491.9,346.7 L489.7,341.6 L487.6,336.5 L485.7,331.3 L484.0,326.1 L482.5,320.9 L481.2,315.7 L480.1,310.5 L479.2,305.2 L478.5,300.0 L478.0,294.7 L477.6,289.5 L477.5,284.3 L477.7,279.2 L478.0,274.1 L478.5,269.0 L479.2,263.9 L480.1,258.9 L481.2,254.0 L482.5,249.2 L484.0,244.4 L485.7,239.7 L487.6,235.0 L489.7,230.5 L492.0,226.1 L494.4,221.7 L497.1,217.5 L499.9,213.3 L502.9,209.3 L506.0,205.4 L509.4,201.7 L512.9,198.0 L516.5,194.5 L520.4,191.2 L524.3,187.9 L528.4,184.9 L532.7,181.9 L537.1,179.2 L541.6,176.5 L546.2,174.1 L551.0,171.8 L555.9,169.7 L560.9,167.7 L565.9,165.9 L571.1,164.3 L576.4,162.9 L581.8,161.6 L587.2,160.5 L592.7,159.6 L598.2,158.9 L603.9,158.3 L609.5,158.0 L615.2,157.8 L621.0,157.8 L626.7,158.0 L632.5,158.4 L638.3,158.9 L644.2,159.7 L650.0,160.6 L655.8,161.7 L661.6,162.9 L667.3,164.4 L673.1,166.0 L678.8,167.8 L684.4,169.8 L690.1,171.9 L695.6,174.2 L701.1,176.7 L706.5,179.3 L711.9,182.1 L717.2,185.0 L722.3,188.1 L727.4,191.3 L732.4,194.7 L737.3,198.2 L742.1,201.9 L746.7,205.7 L751.2,209.6 L755.6,213.6 L759.9,217.7 L764.0,222.0 L767.9,226.3 L771.7,230.8 L775.4,235.3 L778.9,239.9 L782.2,244.6 L785.4,249.4 L788.4,254.3 L791.2,259.2 L793.8,264.2 L796.3,269.3 L798.6,274.3 L800.7,279.5 L802.5,284.6 L804.2,289.8 L805.7,295.0 L807.1,300.3 L808.2,305.5 L809.1,310.8 L809.8,316.0 L810.3,321.2 L810.6,326.4 L810.7,331.6 L810.6,336.8 L810.3,341.9 L809.8,347.0 L809.1,352.0 L808.2,357.0 L807.0,361.9 L805.7,366.8 L804.2,371.6 L802.5,376.3 L800.6,380.9 L798.5,385.5 L796.3,389.9Z" fill="#c4c400"/>
<path d="M796.9,388.8 L794.4,393.2 L791.8,397.4 L788.9,401.5 L785.9,405.5 L782.8,409.4 L779.4,413.2 L775.9,416.8 L772.3,420.4 L768.5,423.7 L764.5,426.9 L760.4,430.0 L756.1,432.9 L751.7,435.7 L747.2,438.3 L742.6,440.8 L737.8,443.1 L732.9,445.2 L728.0,447.2 L722.9,449.0 L717.7,450.6 L712.4,452.0 L707.1,453.3 L701.6,454.4 L696.1,455.3 L690.6,456.0 L685.0,456.5 L679.3,456.9 L673.6,457.1 L667.8,457.1 L662.1,456.9 L656.3,456.5 L650.5,456.0 L644.7,455.2 L638.9,454.3 L633.0,453.2 L627.3,451.9 L621.5,450.5 L615.7,448.9 L610.0,447.1 L604.4,445.1 L598.8,443.0 L593.2,440.7 L587.7,438.2 L582.3,435.6 L576.9,432.8 L571.6,429.8 L566.5,426.8 L561.4,423.5 L556.4,420.2 L551.5,416.6 L546.8,413.0 L542.1,409.2 L537.6,405.3 L533.2,401.3 L529.0,397.2 L524.9,392.9 L520.9,388.6 L517.1,384.1 L513.4,379.6 L509.9,375.0 L506.6,370.2 L503.4,365.5 L500.4,360.6 L497.6,355.7 L495.0,350.7 L492.5,345.6 L490.2,340.5 L488.2,335.4 L486.3,330.3 L484.6,325.1 L483.1,319.8 L481.8,314.6 L480.7,309.4 L479.7,304.1 L479.0,298.9 L478.5,293.7 L478.2,288.4 L478.1,283.3 L478.2,278.1 L478.5,273.0 L479.0,267.9 L479.8,262.8 L480.7,257.9 L481.8,252.9 L483.1,248.1 L484.6,243.3 L486.3,238.6 L488.2,234.0 L490.3,229.4 L492.5,225.0 L495.0,220.6 L497.6,216.4 L500.5,212.3 L503.5,208.3 L506.6,204.4 L510.0,200.6 L513.5,197.0 L517.1,193.4 L520.9,190.1 L524.9,186.9 L529.0,183.8 L533.3,180.9 L537.7,178.1 L542.2,175.5 L546.8,173.0 L551.6,170.7 L556.5,168.6 L561.4,166.6 L566.5,164.8 L571.7,163.2 L577.0,161.8 L582.3,160.5 L587.8,159.4 L593.3,158.5 L598.8,157.8 L604.4,157.3 L610.1,156.9 L615.8,156.7 L621.6,156.7 L627.3,156.9 L633.1,157.3 L638.9,157.8 L644.7,158.6 L650.5,159.5 L656.4,160.6 L662.1,161.9 L667.9,163.3 L673.7,164.9 L679.4,166.7 L685.0,168.7 L690.6,170.8 L696.2,173.1 L701.7,175.6 L707.1,178.2 L712.5,181.0 L717.8,184.0 L722.9,187.0 L728.0,190.3 L733.0,193.6 L737.9,197.2 L742.6,200.8 L747.3,204.6 L751.8,208.5 L756.2,212.5 L760.4,216.6 L764.5,220.9 L768.5,225.2 L772.3,229.7 L776.0,234.2 L779.5,238.8 L782.8,243.6 L786.0,248.3 L789.0,253.2 L791.8,258.1 L794.4,263.1 L796.9,268.2 L799.2,273.3 L801.2,278.4 L803.1,283.5 L804.8,288.7 L806.3,294.0 L807.6,299.2 L808.7,304.4 L809.7,309.7 L810.4,314.9 L810.9,320.1 L811.2,325.4 L811.3,330.5 L811.2,335.7 L810.9,340.8 L810.4,345.9 L809.6,351.0 L808.7,355.9 L807.6,360.9 L806.3,365.7 L804.8,370.5 L803.1,375.2 L801.2,379.8 L799.1,384.4 L796.9,388.8Z" fill="#ffff00"/>
<path d="M555.0,171.0 L558.8,169.5 L562.6,168.1 L566.5,166.7 L570.4,165.5 L574.4,164.4 L578.5,163.4 L582.6,162.5 L586.7,161.7 L590.9,161.0 L595.1,160.4 L599.3,159.9 L603.6,159.5 L607.9,159.2 L612.3,159.1 L616.6,159.0 L621.0,159.0 L625.4,159.2 L629.8,159.4 L634.2,159.8 L638.6,160.2 L643.0,160.8 L647.4,161.5 L651.9,162.2 L656.3,163.1 L660.7,164.1 L665.1,165.2 L669.4,166.4 L673.8,167.6 L678.1,169.0 L682.4,170.5 L686.7,172.1 L691.0,173.8 L695.2,175.5 L699.4,177.4 L691.3,196.5 L687.7,194.9 L684.1,193.4 L680.4,192.0 L676.8,190.7 L673.1,189.4 L669.4,188.2 L665.7,187.1 L661.9,186.1 L658.2,185.2 L654.4,184.3 L650.6,183.6 L646.9,182.9 L643.1,182.4 L639.3,181.9 L635.5,181.5 L631.8,181.2 L628.0,181.0 L624.2,180.8 L620.5,180.8 L616.8,180.9 L613.1,181.0 L609.4,181.3 L605.8,181.6 L602.1,182.0 L598.5,182.5 L595.0,183.1 L591.4,183.8 L587.9,184.6 L584.5,185.4 L581.0,186.4 L577.7,187.4 L574.3,188.6 L571.1,189.8 L567.8,191.1Z" fill="#d0d000"/>
<path d="M555.6,169.8 L559.4,168.3 L563.2,166.9 L567.1,165.6 L571.1,164.4 L575.0,163.3 L579.1,162.3 L583.2,161.4 L587.3,160.5 L591.5,159.8 L595.7,159.3 L600.0,158.8 L604.2,158.4 L608.5,158.1 L612.9,157.9 L617.2,157.8 L621.6,157.9 L626.0,158.0 L630.4,158.3 L634.8,158.6 L639.2,159.1 L643.6,159.7 L648.1,160.3 L652.5,161.1 L656.9,162.0 L661.3,162.9 L665.7,164.0 L670.0,165.2 L674.4,166.5 L678.7,167.9 L683.1,169.4 L687.3,170.9 L691.6,172.6 L695.8,174.4 L700.0,176.2 L691.9,195.4 L688.3,193.8 L684.7,192.3 L681.1,190.9 L677.4,189.5 L673.7,188.2 L670.0,187.1 L666.3,186.0 L662.5,185.0 L658.8,184.0 L655.0,183.2 L651.3,182.4 L647.5,181.8 L643.7,181.2 L639.9,180.7 L636.1,180.3 L632.4,180.0 L628.6,179.8 L624.9,179.7 L621.1,179.7 L617.4,179.7 L613.7,179.9 L610.0,180.1 L606.4,180.5 L602.7,180.9 L599.1,181.4 L595.6,182.0 L592.0,182.7 L588.5,183.4 L585.1,184.3 L581.7,185.3 L578.3,186.3 L575.0,187.4 L571.7,188.6 L568.5,189.9Z" fill="#d0d000"/>
<path d="M716.5,186.2 L720.5,188.6 L724.4,191.0 L728.3,193.5 L732.1,196.1 L735.8,198.8 L739.5,201.6 L743.1,204.4 L746.6,207.3 L750.0,210.3 L753.4,213.3 L756.7,216.5 L759.9,219.7 L763.1,222.9 L766.1,226.2 L769.1,229.6 L772.0,233.0 L774.7,236.5 L777.4,240.0 L780.0,243.6 L782.5,247.2 L784.9,250.9 L787.2,254.6 L789.4,258.4 L791.5,262.2 L793.5,266.0 L795.4,269.9 L797.1,273.7 L798.8,277.7 L800.4,281.6 L801.8,285.5 L803.1,289.5 L804.3,293.5 L805.4,297.5 L806.4,301.5 L782.7,302.6 L781.9,299.2 L781.0,295.8 L779.9,292.4 L778.8,289.0 L777.6,285.6 L776.2,282.2 L774.8,278.9 L773.3,275.6 L771.7,272.3 L770.0,269.0 L768.2,265.8 L766.3,262.6 L764.4,259.4 L762.3,256.2 L760.2,253.1 L758.0,250.1 L755.7,247.1 L753.3,244.1 L750.8,241.2 L748.3,238.3 L745.7,235.4 L743.0,232.7 L740.3,229.9 L737.4,227.3 L734.6,224.7 L731.6,222.1 L728.6,219.6 L725.5,217.2 L722.4,214.9 L719.2,212.6 L715.9,210.3 L712.6,208.2 L709.3,206.1 L705.9,204.1Z" fill="#d0d000"/>
<path d="M717.1,185.1 L721.1,187.4 L725.0,189.9 L728.9,192.4 L732.7,195.0 L736.4,197.7 L740.1,200.4 L743.7,203.3 L747.2,206.2 L750.7,209.2 L754.0,212.2 L757.3,215.3 L760.6,218.5 L763.7,221.8 L766.7,225.1 L769.7,228.4 L772.6,231.9 L775.4,235.4 L778.1,238.9 L780.6,242.5 L783.1,246.1 L785.5,249.8 L787.8,253.5 L790.0,257.2 L792.1,261.0 L794.1,264.9 L796.0,268.7 L797.8,272.6 L799.4,276.5 L801.0,280.4 L802.4,284.4 L803.7,288.4 L804.9,292.3 L806.0,296.3 L807.0,300.3 L783.3,301.5 L782.5,298.0 L781.6,294.6 L780.5,291.2 L779.4,287.8 L778.2,284.5 L776.8,281.1 L775.4,277.8 L773.9,274.4 L772.3,271.1 L770.6,267.9 L768.8,264.6 L767.0,261.4 L765.0,258.2 L762.9,255.1 L760.8,252.0 L758.6,248.9 L756.3,245.9 L753.9,242.9 L751.5,240.0 L748.9,237.1 L746.3,234.3 L743.6,231.5 L740.9,228.8 L738.1,226.1 L735.2,223.5 L732.2,221.0 L729.2,218.5 L726.1,216.1 L723.0,213.7 L719.8,211.4 L716.6,209.2 L713.3,207.0 L709.9,205.0 L706.5,203.0Z" fill="#d0d000"/>
<path d="M809.8,324.3 L810.0,328.2 L810.0,332.1 L810.0,336.0 L809.8,339.9 L809.6,343.8 L809.2,347.6 L808.7,351.4 L808.1,355.2 L807.4,358.9 L806.5,362.7 L805.6,366.3 L804.5,370.0 L803.3,373.6 L802.0,377.1 L800.6,380.6 L799.1,384.1 L797.5,387.5 L795.8,390.8 L793.9,394.1 L792.0,397.4 L790.0,400.5 L787.8,403.6 L785.6,406.7 L783.3,409.7 L780.8,412.6 L778.3,415.4 L775.7,418.2 L772.9,420.9 L770.1,423.5 L767.2,426.0 L764.3,428.4 L746.7,411.1 L749.3,409.0 L751.7,406.9 L754.1,404.6 L756.5,402.3 L758.7,400.0 L760.9,397.6 L762.9,395.1 L764.9,392.5 L766.9,389.9 L768.7,387.3 L770.4,384.6 L772.1,381.8 L773.6,379.0 L775.1,376.1 L776.5,373.2 L777.8,370.2 L779.0,367.3 L780.1,364.2 L781.1,361.1 L782.0,358.0 L782.8,354.9 L783.5,351.7 L784.2,348.5 L784.7,345.3 L785.1,342.0 L785.4,338.7 L785.7,335.4 L785.8,332.1 L785.8,328.8 L785.8,325.4 L785.6,322.1Z" fill="#d0d000"/>
<path d="M810.4,323.1 L810.6,327.0 L810.7,331.0 L810.6,334.9 L810.5,338.7 L810.2,342.6 L809.8,346.4 L809.3,350.3 L808.7,354.0 L808.0,357.8 L807.1,361.5 L806.2,365.2 L805.1,368.8 L803.9,372.4 L802.6,376.0 L801.2,379.5 L799.7,382.9 L798.1,386.3 L796.4,389.7 L794.6,393.0 L792.6,396.2 L790.6,399.4 L788.4,402.5 L786.2,405.5 L783.9,408.5 L781.4,411.4 L778.9,414.3 L776.3,417.0 L773.6,419.7 L770.8,422.3 L767.9,424.8 L764.9,427.3 L747.3,410.0 L749.9,407.9 L752.4,405.7 L754.8,403.5 L757.1,401.2 L759.3,398.8 L761.5,396.4 L763.6,393.9 L765.6,391.4 L767.5,388.8 L769.3,386.1 L771.0,383.4 L772.7,380.6 L774.3,377.8 L775.7,375.0 L777.1,372.1 L778.4,369.1 L779.6,366.1 L780.7,363.1 L781.7,360.0 L782.6,356.9 L783.4,353.7 L784.2,350.6 L784.8,347.4 L785.3,344.1 L785.7,340.9 L786.1,337.6 L786.3,334.3 L786.4,331.0 L786.4,327.6 L786.4,324.3 L786.2,320.9Z" fill="#d0d000"/>
<path d="M732.2,447.3 L728.4,448.8 L724.6,450.2 L720.7,451.5 L716.8,452.8 L712.8,453.9 L708.8,454.9 L704.7,455.8 L700.6,456.6 L696.5,457.3 L692.3,457.9 L688.0,458.4 L683.8,458.8 L679.5,459.1 L675.2,459.3 L670.8,459.4 L666.5,459.4 L662.1,459.2 L657.7,459.0 L653.4,458.7 L649.0,458.2 L644.5,457.7 L640.1,457.0 L635.7,456.3 L631.3,455.4 L627.0,454.4 L622.6,453.4 L618.2,452.2 L613.9,451.0 L609.5,449.6 L605.2,448.1 L601.0,446.6 L596.7,444.9 L592.5,443.2 L588.3,441.3 L584.2,439.4 L580.1,437.4 L576.1,435.3 L572.1,433.1 L568.1,430.8 L564.2,428.4 L560.4,426.0 L556.6,423.4 L552.8,420.8 L549.2,418.1 L545.6,415.3 L542.1,412.5 L538.6,409.6 L535.2,406.6 L531.9,403.5 L528.7,400.4 L525.5,397.2 L522.5,394.0 L519.5,390.7 L516.6,387.3 L513.8,383.9 L511.0,380.4 L508.4,376.9 L505.9,373.3 L503.5,369.7 L501.1,366.0 L498.9,362.3 L496.7,358.6 L494.7,354.8 L492.8,351.0 L491.0,347.2 L489.2,343.4 L487.6,339.5 L486.1,335.6 L484.7,331.7 L483.5,327.7 L482.3,323.8 L481.2,319.8 L480.3,315.9 L504.0,314.9 L504.8,318.3 L505.7,321.7 L506.7,325.0 L507.8,328.4 L509.0,331.7 L510.3,335.1 L511.6,338.4 L513.1,341.7 L514.7,345.0 L516.3,348.2 L518.1,351.4 L519.9,354.6 L521.8,357.8 L523.8,360.9 L525.9,364.0 L528.0,367.0 L530.3,370.0 L532.6,373.0 L535.0,375.9 L537.5,378.8 L540.0,381.6 L542.7,384.4 L545.4,387.1 L548.1,389.8 L550.9,392.4 L553.8,395.0 L556.8,397.5 L559.8,399.9 L562.9,402.3 L566.0,404.6 L569.2,406.8 L572.4,409.0 L575.7,411.1 L579.1,413.1 L582.4,415.1 L585.9,417.0 L589.3,418.8 L592.8,420.5 L596.4,422.1 L599.9,423.7 L603.5,425.2 L607.2,426.6 L610.8,428.0 L614.5,429.2 L618.2,430.4 L621.9,431.4 L625.6,432.4 L629.4,433.3 L633.1,434.2 L636.9,434.9 L640.6,435.5 L644.4,436.1 L648.2,436.6 L651.9,436.9 L655.7,437.2 L659.4,437.4 L663.1,437.5 L666.9,437.6 L670.6,437.5 L674.3,437.3 L677.9,437.1 L681.6,436.7 L685.2,436.3 L688.8,435.8 L692.3,435.2 L695.8,434.5 L699.3,433.7 L702.8,432.9 L706.2,431.9 L709.5,430.9 L712.8,429.7 L716.1,428.5 L719.3,427.2Z" fill="#d0d000"/>
<path d="M732.8,446.2 L729.1,447.7 L725.2,449.1 L721.4,450.4 L717.4,451.6 L713.5,452.7 L709.4,453.7 L705.4,454.7 L701.2,455.5 L697.1,456.2 L692.9,456.8 L688.7,457.3 L684.4,457.7 L680.1,458.0 L675.8,458.2 L671.5,458.2 L667.1,458.2 L662.7,458.1 L658.4,457.9 L654.0,457.5 L649.6,457.1 L645.2,456.5 L640.8,455.9 L636.4,455.1 L632.0,454.3 L627.6,453.3 L623.2,452.2 L618.8,451.1 L614.5,449.8 L610.2,448.5 L605.9,447.0 L601.6,445.4 L597.3,443.8 L593.1,442.0 L589.0,440.2 L584.8,438.3 L580.7,436.2 L576.7,434.1 L572.7,431.9 L568.7,429.6 L564.8,427.3 L561.0,424.8 L557.2,422.3 L553.5,419.7 L549.8,417.0 L546.2,414.2 L542.7,411.3 L539.2,408.4 L535.8,405.4 L532.5,402.4 L529.3,399.3 L526.1,396.1 L523.1,392.8 L520.1,389.5 L517.2,386.1 L514.4,382.7 L511.7,379.3 L509.0,375.7 L506.5,372.2 L504.1,368.5 L501.7,364.9 L499.5,361.2 L497.4,357.5 L495.3,353.7 L493.4,349.9 L491.6,346.1 L489.9,342.2 L488.2,338.3 L486.7,334.4 L485.4,330.5 L484.1,326.6 L482.9,322.6 L481.9,318.7 L480.9,314.7 L504.6,313.7 L505.4,317.1 L506.3,320.5 L507.3,323.9 L508.4,327.2 L509.6,330.6 L510.9,333.9 L512.3,337.2 L513.7,340.5 L515.3,343.8 L516.9,347.1 L518.7,350.3 L520.5,353.5 L522.4,356.6 L524.4,359.8 L526.5,362.8 L528.7,365.9 L530.9,368.9 L533.2,371.9 L535.6,374.8 L538.1,377.7 L540.7,380.5 L543.3,383.3 L546.0,386.0 L548.7,388.7 L551.6,391.3 L554.4,393.8 L557.4,396.3 L560.4,398.8 L563.5,401.1 L566.6,403.4 L569.8,405.7 L573.1,407.8 L576.3,409.9 L579.7,412.0 L583.1,413.9 L586.5,415.8 L589.9,417.6 L593.4,419.3 L597.0,421.0 L600.5,422.6 L604.1,424.1 L607.8,425.5 L611.4,426.8 L615.1,428.1 L618.8,429.2 L622.5,430.3 L626.2,431.3 L630.0,432.2 L633.7,433.0 L637.5,433.7 L641.2,434.4 L645.0,435.0 L648.8,435.4 L652.5,435.8 L656.3,436.1 L660.0,436.3 L663.8,436.4 L667.5,436.4 L671.2,436.3 L674.9,436.2 L678.5,435.9 L682.2,435.6 L685.8,435.2 L689.4,434.7 L692.9,434.0 L696.5,433.4 L699.9,432.6 L703.4,431.7 L706.8,430.8 L710.1,429.7 L713.4,428.6 L716.7,427.4 L719.9,426.1Z" fill="#d0d000"/>
<path d="M477.1,292.8 L476.9,288.9 L476.9,285.0 L477.0,281.2 L477.2,277.3 L477.5,273.5 L477.9,269.7 L478.4,265.9 L479.0,262.1 L479.8,258.4 L480.7,254.7 L481.6,251.1 L482.7,247.5 L483.9,243.9 L485.2,240.4 L486.7,236.9 L488.2,233.5 L489.8,230.1 L491.6,226.8 L493.4,223.6 L495.3,220.4 L497.4,217.2 L499.5,214.1 L501.8,211.1 L504.1,208.2 L506.5,205.3 L509.1,202.5 L511.7,199.8 L514.4,197.1 L517.2,194.5 L520.1,192.0 L523.1,189.6 L526.1,187.3 L529.3,185.0 L532.5,182.9 L548.6,201.2 L545.9,203.1 L543.2,205.0 L540.6,207.0 L538.0,209.1 L535.6,211.2 L533.2,213.4 L530.8,215.7 L528.6,218.0 L526.4,220.4 L524.4,222.9 L522.4,225.4 L520.4,228.0 L518.6,230.6 L516.9,233.3 L515.2,236.0 L513.6,238.8 L512.1,241.6 L510.7,244.5 L509.4,247.4 L508.2,250.4 L507.1,253.4 L506.1,256.5 L505.2,259.5 L504.3,262.6 L503.6,265.8 L502.9,269.0 L502.4,272.2 L501.9,275.4 L501.6,278.7 L501.3,281.9 L501.2,285.2 L501.1,288.5 L501.1,291.9 L501.3,295.2Z" fill="#d0d000"/>
<path d="M477.7,291.7 L477.6,287.8 L477.5,283.9 L477.6,280.0 L477.8,276.2 L478.1,272.3 L478.5,268.5 L479.0,264.7 L479.7,261.0 L480.4,257.3 L481.3,253.6 L482.3,249.9 L483.4,246.3 L484.5,242.8 L485.9,239.3 L487.3,235.8 L488.8,232.4 L490.4,229.0 L492.2,225.7 L494.0,222.4 L496.0,219.2 L498.0,216.1 L500.1,213.0 L502.4,210.0 L504.7,207.0 L507.2,204.2 L509.7,201.4 L512.3,198.6 L515.0,196.0 L517.8,193.4 L520.7,190.9 L523.7,188.5 L526.7,186.1 L529.9,183.9 L533.1,181.7 L549.2,200.1 L546.5,201.9 L543.8,203.9 L541.2,205.9 L538.6,207.9 L536.2,210.1 L533.8,212.3 L531.5,214.5 L529.2,216.9 L527.1,219.3 L525.0,221.7 L523.0,224.2 L521.1,226.8 L519.2,229.4 L517.5,232.1 L515.8,234.9 L514.2,237.6 L512.8,240.5 L511.4,243.4 L510.1,246.3 L508.8,249.3 L507.7,252.3 L506.7,255.3 L505.8,258.4 L504.9,261.5 L504.2,264.7 L503.6,267.8 L503.0,271.0 L502.6,274.3 L502.2,277.5 L501.9,280.8 L501.8,284.1 L501.7,287.4 L501.8,290.7 L501.9,294.1Z" fill="#d0d000"/>
<path d="M774.7,376.9 L773.2,379.7 L771.5,382.5 L769.8,385.1 L768.0,387.8 L766.1,390.4 L764.1,392.9 L762.0,395.4 L759.9,397.8 L757.6,400.1 L755.3,402.4 L752.9,404.6 L750.5,406.7 L747.9,408.8 L745.3,410.8 L742.7,412.8 L739.9,414.6 L737.1,416.4 L734.3,418.1 L731.3,419.8 L728.4,421.3 L725.3,422.8 L722.2,424.2 L719.1,425.5 L715.9,426.8 L712.6,428.0 L709.3,429.0 L706.0,430.0 L702.6,430.9 L699.2,431.8 L695.7,432.5 L692.2,433.1 L688.7,433.7 L685.1,434.2 L681.5,434.6 L677.9,434.9 L674.3,435.1 L670.6,435.2 L666.9,435.3 L663.3,435.2 L659.6,435.1 L655.8,434.9 L652.1,434.6 L648.4,434.2 L644.7,433.7 L640.9,433.1 L637.2,432.4 L633.5,431.7 L629.8,430.9 L626.1,430.0 L622.4,429.0 L618.7,427.9 L615.1,426.7 L611.4,425.5 L607.8,424.1 L604.2,422.7 L600.7,421.2 L597.1,419.7 L593.7,418.0 L590.2,416.3 L586.8,414.5 L583.4,412.6 L580.0,410.7 L576.7,408.7 L573.5,406.6 L570.3,404.4 L567.1,402.2 L564.0,399.9 L561.0,397.6 L558.0,395.2 L555.1,392.7 L552.2,390.2 L549.4,387.6 L546.7,384.9 L544.0,382.3 L541.4,379.5 L538.9,376.7 L536.4,373.9 L534.0,371.0 L531.7,368.0 L529.5,365.1 L527.4,362.1 L525.3,359.0 L523.3,355.9 L521.4,352.8 L519.6,349.6 L517.8,346.4 L516.2,343.2 L514.6,340.0 L513.2,336.7 L511.8,333.5 L510.5,330.2 L509.3,326.9 L508.2,323.5 L507.2,320.2 L506.3,316.8 L505.4,313.5 L504.7,310.1 L504.1,306.8 L503.5,303.4 L503.1,300.1 L502.8,296.7 L502.5,293.4 L502.4,290.0 L502.3,286.7 L502.4,283.4 L502.5,280.1 L502.8,276.8 L503.1,273.6 L503.6,270.3 L504.1,267.1 L504.7,263.9 L505.5,260.8 L506.3,257.7 L507.2,254.6 L508.2,251.5 L509.3,248.5 L510.5,245.5 L511.8,242.6 L513.2,239.7 L514.7,236.9 L516.2,234.1 L517.9,231.3 L519.6,228.7 L521.4,226.0 L523.3,223.4 L525.3,220.9 L527.4,218.4 L529.5,216.0 L531.8,213.7 L534.1,211.4 L536.5,209.2 L538.9,207.1 L541.5,205.0 L544.1,203.0 L546.7,201.0 L549.5,199.2 L552.3,197.4 L555.1,195.7 L558.1,194.0 L561.0,192.5 L564.1,191.0 L567.2,189.6 L570.3,188.3 L573.5,187.0 L576.8,185.8 L580.1,184.8 L583.4,183.8 L586.8,182.9 L590.2,182.0 L593.7,181.3 L597.2,180.7 L600.7,180.1 L604.3,179.6 L607.9,179.2 L611.5,178.9 L615.1,178.7 L618.8,178.6 L622.5,178.5 L626.1,178.6 L629.8,178.7 L633.6,178.9 L637.3,179.2 L641.0,179.6 L644.7,180.1 L648.5,180.7 L652.2,181.4 L655.9,182.1 L659.6,182.9 L663.3,183.8 L667.0,184.8 L670.7,185.9 L674.3,187.1 L678.0,188.3 L681.6,189.7 L685.2,191.1 L688.7,192.6 L692.3,194.1 L695.7,195.8 L699.2,197.5 L702.6,199.3 L706.0,201.2 L709.4,203.1 L712.7,205.1 L715.9,207.2 L719.1,209.4 L722.3,211.6 L725.4,213.9 L728.4,216.2 L731.4,218.6 L734.3,221.1 L737.2,223.6 L740.0,226.2 L742.7,228.9 L745.4,231.5 L748.0,234.3 L750.5,237.1 L753.0,239.9 L755.4,242.8 L757.7,245.8 L759.9,248.7 L762.0,251.7 L764.1,254.8 L766.1,257.9 L768.0,261.0 L769.8,264.2 L771.6,267.4 L773.2,270.6 L774.8,273.8 L776.2,277.1 L777.6,280.3 L778.9,283.6 L780.1,286.9 L781.2,290.3 L782.2,293.6 L783.1,297.0 L784.0,300.3 L784.7,303.7 L785.3,307.0 L785.9,310.4 L786.3,313.7 L786.6,317.1 L786.9,320.4 L787.0,323.8 L787.1,327.1 L787.0,330.4 L786.9,333.7 L786.6,337.0 L786.3,340.2 L785.8,343.5 L785.3,346.7 L784.7,349.9 L783.9,353.0 L783.1,356.1 L782.2,359.2 L781.2,362.3 L780.1,365.3 L778.9,368.3 L777.6,371.2 L776.2,374.1 L774.7,376.9Z" fill="url(#wg)"/>
<path d="M764.6,395.7 L762.5,399.3 L760.3,402.9 L757.9,406.3 L755.4,409.7 L752.8,413.0 L750.0,416.1 L747.0,419.2 L744.0,422.1 L740.8,424.9 L737.4,427.6 L734.0,430.2 L730.4,432.7 L726.8,435.0 L723.0,437.2 L719.1,439.3 L715.1,441.2 L711.0,443.0 L706.8,444.6 L702.5,446.1 L698.2,447.5 L693.8,448.7 L689.3,449.7 L684.7,450.6 L680.1,451.4 L675.5,452.0 L670.8,452.5 L666.0,452.8 L661.2,452.9 L656.4,452.9 L651.6,452.8 L646.7,452.4 L641.8,452.0 L637.0,451.4 L632.1,450.6 L627.2,449.7 L622.4,448.6 L617.5,447.4 L612.7,446.0 L607.9,444.5 L603.2,442.9 L598.5,441.1 L593.8,439.2 L589.2,437.1 L584.7,434.9 L580.2,432.6 L575.7,430.1 L571.4,427.5 L567.1,424.8 L563.0,422.0 L558.9,419.0 L554.9,416.0 L551.0,412.8 L547.2,409.5 L543.5,406.2 L540.0,402.7 L536.5,399.1 L533.2,395.5 L530.0,391.8 L526.9,387.9 L524.0,384.1 L521.2,380.1 L518.5,376.1 L516.0,372.0 L513.7,367.9 L511.5,363.7 L509.4,359.5 L507.5,355.2 L505.8,350.9 L504.2,346.6 L502.7,342.2 L501.5,337.9 L500.4,333.5 L499.5,329.1 L498.7,324.7 L498.1,320.3 L497.7,315.9 L497.4,311.5 L497.3,307.2 L497.4,302.8 L497.7,298.6 L498.1,294.3 L498.7,290.1 L499.5,285.9 L500.4,281.8 L501.5,277.7 L502.8,273.7 L504.2,269.7 L505.8,265.8 L507.5,262.0 L509.4,258.3 L511.5,254.7 L513.7,251.1 L516.1,247.7 L518.6,244.3 L521.2,241.0 L524.0,237.9 L527.0,234.8 L530.0,231.9 L533.2,229.1 L536.6,226.4 L540.0,223.8 L543.6,221.3 L547.2,219.0 L551.0,216.8 L554.9,214.7 L558.9,212.8 L563.0,211.0 L567.2,209.4 L571.5,207.9 L575.8,206.5 L580.2,205.3 L584.7,204.3 L589.3,203.4 L593.9,202.6 L598.5,202.0 L603.2,201.5 L608.0,201.2 L612.8,201.1 L617.6,201.1 L622.4,201.2 L627.3,201.6 L632.2,202.0 L637.0,202.6 L641.9,203.4 L646.8,204.3 L651.6,205.4 L656.5,206.6 L661.3,208.0 L666.1,209.5 L670.8,211.1 L675.5,212.9 L680.2,214.8 L684.8,216.9 L689.3,219.1 L693.8,221.4 L698.3,223.9 L702.6,226.5 L706.9,229.2 L711.0,232.0 L715.1,235.0 L719.1,238.0 L723.0,241.2 L726.8,244.5 L730.5,247.8 L734.0,251.3 L737.5,254.9 L740.8,258.5 L744.0,262.2 L747.1,266.1 L750.0,269.9 L752.8,273.9 L755.5,277.9 L758.0,282.0 L760.3,286.1 L762.5,290.3 L764.6,294.5 L766.5,298.8 L768.2,303.1 L769.8,307.4 L771.3,311.8 L772.5,316.1 L773.6,320.5 L774.5,324.9 L775.3,329.3 L775.9,333.7 L776.3,338.1 L776.6,342.5 L776.7,346.8 L776.6,351.2 L776.3,355.4 L775.9,359.7 L775.3,363.9 L774.5,368.1 L773.6,372.2 L772.5,376.3 L771.2,380.3 L769.8,384.3 L768.2,388.2 L766.5,392.0Z" fill="#ffff00" clip-path="url(#rimclip)"/>
<path d="M786.7,335.9 L786.4,339.2 L786.0,342.4 L785.5,345.6 L784.9,348.8 L784.2,352.0 L783.4,355.2 L782.5,358.3 L781.5,361.3 L780.4,364.4 L779.3,367.4 L778.0,370.3 L776.6,373.2 L775.2,376.1 L773.7,378.9 L772.0,381.7 L770.3,384.4 L768.5,387.0 L766.6,389.6 L764.7,392.2 L762.6,394.7 L760.5,397.1 L758.2,399.5 L756.0,401.8 L753.6,404.0 L751.1,406.2 L748.6,408.3 L746.0,410.3 L743.4,412.3 L740.6,414.2 L737.8,416.0 L735.0,417.7 L732.1,419.4 L729.1,421.0 L726.1,422.5 L723.0,423.9 L719.8,425.2 L716.6,426.5 L713.4,427.7 L710.1,428.8 L706.7,429.8 L703.3,430.7 L699.9,431.6 L696.4,432.3 L692.9,433.0 L689.4,433.6 L685.9,434.1 L682.3,434.5 L678.6,434.8 L675.0,435.1 L671.3,435.2 L667.7,435.3 L664.0,435.2 L660.3,435.1 L656.5,434.9 L652.8,434.6 L649.1,434.2 L645.3,433.8 L641.6,433.2 L637.9,432.6 L634.1,431.8 L630.4,431.0 L626.7,430.1 L623.0,429.1 L619.3,428.0 L615.6,426.9 L612.0,425.7 L608.4,424.3 L604.8,422.9 L601.2,421.4 L597.7,419.9 L594.1,418.2 L590.7,416.5 L587.2,414.7 L583.8,412.9 L580.5,410.9 L577.2,408.9 L573.9,406.8 L570.7,404.7 L567.5,402.5 L564.4,400.2 L561.3,397.9 L558.3,395.4 L555.4,393.0 L552.5,390.4 L549.7,387.9 L547.0,385.2 L544.3,382.5 L541.7,379.8 L539.1,377.0 L536.6,374.1 L534.2,371.2 L531.9,368.3 L529.7,365.3 L527.5,362.3 L525.4,359.2 L523.4,356.1 L521.5,353.0 L519.7,349.8 L517.9,346.7 L516.3,343.4 L514.7,340.2 L513.2,336.9 L511.9,333.6 L510.6,330.3 L509.3,327.0 L508.2,323.7 L507.2,320.3 L506.3,317.0 L505.5,313.6 L504.7,310.3 L504.1,306.9 L503.6,303.5 L503.1,300.1 L502.8,296.8 L502.5,293.4 L502.4,290.1 L502.3,286.7 L502.4,283.4 L502.5,280.1 L502.8,276.8 L503.1,273.6 L503.6,270.3 L504.1,267.1" fill="none" stroke="#a0a000" stroke-width="0.55"/>
<path d="M556.2,168.7 L560.0,167.2 L563.8,165.8 L567.7,164.4 L571.7,163.2 L575.7,162.1 L579.7,161.1 L583.8,160.2 L587.9,159.4 L592.1,158.7 L596.3,158.1 L600.6,157.6 L604.9,157.2 L609.2,156.9 L613.5,156.8 L617.8,156.7 L622.2,156.7 L626.6,156.9 L631.0,157.1 L635.4,157.5 L639.8,157.9 L644.2,158.5 L648.7,159.2 L653.1,159.9 L657.5,160.8 L661.9,161.8 L666.3,162.9 L670.7,164.1 L675.0,165.3 L679.4,166.7 L683.7,168.2 L688.0,169.8 L692.2,171.5 L696.4,173.2 L700.6,175.1 L692.5,194.3 L688.9,192.7 L685.3,191.1 L681.7,189.7 L678.0,188.4 L674.3,187.1 L670.6,185.9 L666.9,184.8 L663.2,183.8 L659.4,182.9 L655.6,182.0 L651.9,181.3 L648.1,180.6 L644.3,180.1 L640.5,179.6 L636.8,179.2 L633.0,178.9 L629.2,178.7 L625.5,178.6 L621.7,178.5 L618.0,178.6 L614.3,178.7 L610.6,179.0 L607.0,179.3 L603.4,179.7 L599.8,180.2 L596.2,180.8 L592.7,181.5 L589.2,182.3 L585.7,183.2 L582.3,184.1 L578.9,185.1 L575.6,186.3 L572.3,187.5 L569.1,188.8Z" fill="#ffff00" stroke="#808008" stroke-width="0.55" stroke-linejoin="round"/>
<path d="M717.8,184.0 L721.7,186.3 L725.6,188.7 L729.5,191.2 L733.3,193.8 L737.0,196.5 L740.7,199.3 L744.3,202.1 L747.8,205.0 L751.3,208.0 L754.6,211.1 L758.0,214.2 L761.2,217.4 L764.3,220.6 L767.4,223.9 L770.3,227.3 L773.2,230.7 L776.0,234.2 L778.7,237.7 L781.3,241.3 L783.8,245.0 L786.2,248.6 L788.5,252.3 L790.7,256.1 L792.7,259.9 L794.7,263.7 L796.6,267.6 L798.4,271.5 L800.0,275.4 L801.6,279.3 L803.0,283.2 L804.3,287.2 L805.6,291.2 L806.7,295.2 L807.6,299.2 L784.0,300.3 L783.1,296.9 L782.2,293.5 L781.2,290.1 L780.0,286.7 L778.8,283.3 L777.5,279.9 L776.0,276.6 L774.5,273.3 L772.9,270.0 L771.2,266.7 L769.4,263.5 L767.6,260.3 L765.6,257.1 L763.6,254.0 L761.4,250.9 L759.2,247.8 L756.9,244.8 L754.5,241.8 L752.1,238.9 L749.5,236.0 L746.9,233.2 L744.2,230.4 L741.5,227.7 L738.7,225.0 L735.8,222.4 L732.8,219.8 L729.8,217.3 L726.7,214.9 L723.6,212.6 L720.4,210.3 L717.2,208.1 L713.9,205.9 L710.5,203.8 L707.1,201.8Z" fill="#ffff00" stroke="#808008" stroke-width="0.55" stroke-linejoin="round"/>
<path d="M811.0,322.0 L811.2,325.9 L811.3,329.8 L811.2,333.7 L811.1,337.6 L810.8,341.5 L810.4,345.3 L809.9,349.1 L809.3,352.9 L808.6,356.6 L807.7,360.4 L806.8,364.0 L805.7,367.7 L804.5,371.3 L803.3,374.8 L801.9,378.3 L800.3,381.8 L798.7,385.2 L797.0,388.6 L795.2,391.8 L793.2,395.1 L791.2,398.2 L789.1,401.4 L786.8,404.4 L784.5,407.4 L782.0,410.3 L779.5,413.1 L776.9,415.9 L774.2,418.6 L771.4,421.2 L768.5,423.7 L765.5,426.1 L747.9,408.8 L750.5,406.7 L753.0,404.6 L755.4,402.3 L757.7,400.0 L759.9,397.7 L762.1,395.3 L764.2,392.8 L766.2,390.2 L768.1,387.6 L769.9,385.0 L771.7,382.3 L773.3,379.5 L774.9,376.7 L776.3,373.8 L777.7,370.9 L779.0,368.0 L780.2,365.0 L781.3,361.9 L782.3,358.9 L783.2,355.7 L784.1,352.6 L784.8,349.4 L785.4,346.2 L785.9,343.0 L786.3,339.7 L786.7,336.4 L786.9,333.1 L787.0,329.8 L787.1,326.5 L787.0,323.1 L786.8,319.8Z" fill="#ffff00" stroke="#808008" stroke-width="0.55" stroke-linejoin="round"/>
<path d="M733.4,445.0 L729.7,446.5 L725.9,447.9 L722.0,449.3 L718.1,450.5 L714.1,451.6 L710.0,452.6 L706.0,453.5 L701.9,454.3 L697.7,455.0 L693.5,455.6 L689.3,456.1 L685.0,456.5 L680.7,456.8 L676.4,457.0 L672.1,457.1 L667.7,457.1 L663.4,456.9 L659.0,456.7 L654.6,456.4 L650.2,455.9 L645.8,455.4 L641.4,454.7 L637.0,454.0 L632.6,453.1 L628.2,452.2 L623.8,451.1 L619.4,449.9 L615.1,448.7 L610.8,447.3 L606.5,445.9 L602.2,444.3 L598.0,442.6 L593.8,440.9 L589.6,439.1 L585.4,437.1 L581.3,435.1 L577.3,433.0 L573.3,430.8 L569.3,428.5 L565.4,426.1 L561.6,423.7 L557.8,421.1 L554.1,418.5 L550.4,415.8 L546.8,413.0 L543.3,410.2 L539.8,407.3 L536.4,404.3 L533.1,401.2 L529.9,398.1 L526.8,394.9 L523.7,391.7 L520.7,388.4 L517.8,385.0 L515.0,381.6 L512.3,378.1 L509.7,374.6 L507.1,371.0 L504.7,367.4 L502.3,363.7 L500.1,360.1 L498.0,356.3 L495.9,352.6 L494.0,348.8 L492.2,344.9 L490.5,341.1 L488.9,337.2 L487.4,333.3 L486.0,329.4 L484.7,325.4 L483.5,321.5 L482.5,317.5 L481.5,313.6 L505.2,312.6 L506.0,316.0 L506.9,319.4 L507.9,322.7 L509.0,326.1 L510.2,329.5 L511.5,332.8 L512.9,336.1 L514.3,339.4 L515.9,342.7 L517.6,345.9 L519.3,349.1 L521.1,352.3 L523.0,355.5 L525.0,358.6 L527.1,361.7 L529.3,364.8 L531.5,367.8 L533.8,370.7 L536.2,373.6 L538.7,376.5 L541.3,379.4 L543.9,382.1 L546.6,384.9 L549.3,387.5 L552.2,390.1 L555.1,392.7 L558.0,395.2 L561.0,397.6 L564.1,400.0 L567.2,402.3 L570.4,404.5 L573.7,406.7 L577.0,408.8 L580.3,410.8 L583.7,412.8 L587.1,414.7 L590.6,416.5 L594.1,418.2 L597.6,419.9 L601.2,421.4 L604.8,422.9 L608.4,424.3 L612.0,425.7 L615.7,426.9 L619.4,428.1 L623.1,429.2 L626.8,430.1 L630.6,431.1 L634.3,431.9 L638.1,432.6 L641.9,433.2 L645.6,433.8 L649.4,434.3 L653.1,434.7 L656.9,434.9 L660.6,435.1 L664.4,435.2 L668.1,435.3 L671.8,435.2 L675.5,435.0 L679.2,434.8 L682.8,434.5 L686.4,434.0 L690.0,433.5 L693.5,432.9 L697.1,432.2 L700.5,431.4 L704.0,430.6 L707.4,429.6 L710.8,428.6 L714.1,427.4 L717.3,426.2 L720.5,424.9Z" fill="#ffff00" stroke="#808008" stroke-width="0.55" stroke-linejoin="round"/>
<path d="M478.3,290.5 L478.2,286.6 L478.1,282.7 L478.2,278.9 L478.4,275.0 L478.7,271.2 L479.1,267.4 L479.6,263.6 L480.3,259.8 L481.0,256.1 L481.9,252.4 L482.9,248.8 L484.0,245.2 L485.2,241.6 L486.5,238.1 L487.9,234.6 L489.4,231.2 L491.0,227.9 L492.8,224.5 L494.6,221.3 L496.6,218.1 L498.6,214.9 L500.8,211.9 L503.0,208.8 L505.3,205.9 L507.8,203.0 L510.3,200.2 L512.9,197.5 L515.6,194.8 L518.4,192.3 L521.3,189.8 L524.3,187.3 L527.4,185.0 L530.5,182.7 L533.7,180.6 L549.8,198.9 L547.1,200.8 L544.4,202.7 L541.8,204.7 L539.3,206.8 L536.8,208.9 L534.4,211.1 L532.1,213.4 L529.8,215.7 L527.7,218.1 L525.6,220.6 L523.6,223.1 L521.7,225.7 L519.8,228.3 L518.1,231.0 L516.4,233.7 L514.9,236.5 L513.4,239.3 L512.0,242.2 L510.7,245.1 L509.5,248.1 L508.3,251.1 L507.3,254.2 L506.4,257.2 L505.6,260.4 L504.8,263.5 L504.2,266.7 L503.6,269.9 L503.2,273.1 L502.8,276.4 L502.6,279.6 L502.4,282.9 L502.3,286.3 L502.4,289.6 L502.5,292.9Z" fill="#ffff00" stroke="#808008" stroke-width="0.55" stroke-linejoin="round"/>
<path d="M801.6,378.7 L799.6,383.3 L797.4,387.8 L795.0,392.2 L792.4,396.6 L789.7,400.8 L786.7,404.9 L783.6,408.8 L780.3,412.7 L776.9,416.4 L773.3,420.0 L769.5,423.4 L765.6,426.7 L761.5,429.9 L757.3,432.9 L752.9,435.8 L748.4,438.5 L743.8,441.0 L739.0,443.4 L734.2,445.6 L729.2,447.6 L724.1,449.5 L718.9,451.2 L713.7,452.7 L708.3,454.0 L702.9,455.2 L697.4,456.1 L691.8,456.9 L686.1,457.5 L680.5,458.0 L674.7,458.2 L668.9,458.2 L663.1,458.1 L657.3,457.8 L651.5,457.3 L645.6,456.6 L639.8,455.7 L633.9,454.7 L628.1,453.4 L622.3,452.0 L616.5,450.4 L610.7,448.6 L605.0,446.7 L599.4,444.6 L593.8,442.3 L588.2,439.9 L582.7,437.3 L577.3,434.5 L572.0,431.6 L566.8,428.5 L561.7,425.3 L556.6,421.9 L551.7,418.4 L546.9,414.7 L542.2,410.9 L537.6,407.0 L533.2,403.0 L528.9,398.9 L524.7,394.6 L520.7,390.2 L516.9,385.8 L513.2,381.2 L509.6,376.6 L506.3,371.8 L503.1,367.0 L500.0,362.1 L497.2,357.2 L494.5,352.1 L492.0,347.1 L489.7,342.0 L487.6,336.8 L485.7,331.6 L484.0,326.4 L482.5,321.1 L481.2,315.9 L480.1,310.6 L479.1,305.3 L478.4,300.0" fill="none" stroke="#f6f600" stroke-width="2" stroke-dasharray="0.9 2.3"/>
<clipPath id="sc1"><path d="M575.9,167.5 L579.8,166.5 L583.6,165.6 L587.6,164.7 L591.5,164.0 L595.5,163.4 L599.5,162.9 L603.6,162.4 L607.7,162.1 L611.8,161.9 L615.9,161.7 L620.1,161.7 L624.3,161.8 L628.5,161.9 L632.7,162.2 L636.9,162.6 L641.1,163.0 L645.3,163.6 L649.5,164.3 L653.7,165.0 L657.9,165.9 L662.1,166.8 L666.3,167.9 L670.5,169.0 L674.6,170.3 L678.8,171.6 L682.9,173.0 L687.0,174.5 L688.9,175.7 L690.3,177.3 L691.0,179.2 L690.9,181.1 L689.9,182.7 L688.3,183.8 L686.2,184.1 L684.0,183.7 L680.2,182.2 L676.4,180.9 L672.6,179.7 L668.7,178.5 L664.8,177.5 L660.9,176.5 L657.0,175.6 L653.1,174.8 L649.2,174.1 L645.3,173.5 L641.3,173.0 L637.4,172.5 L633.5,172.2 L629.6,171.9 L625.7,171.8 L621.8,171.7 L617.9,171.8 L614.1,171.9 L610.2,172.1 L606.4,172.4 L602.7,172.8 L598.9,173.3 L595.2,173.9 L591.5,174.6 L587.8,175.3 L584.2,176.2 L580.7,177.1 L578.6,177.3 L576.4,176.7 L574.6,175.4 L573.3,173.7 L572.7,171.8 L573.1,169.9 L574.2,168.4Z"/></clipPath>
<path d="M575.9,167.5 L579.8,166.5 L583.6,165.6 L587.6,164.7 L591.5,164.0 L595.5,163.4 L599.5,162.9 L603.6,162.4 L607.7,162.1 L611.8,161.9 L615.9,161.7 L620.1,161.7 L624.3,161.8 L628.5,161.9 L632.7,162.2 L636.9,162.6 L641.1,163.0 L645.3,163.6 L649.5,164.3 L653.7,165.0 L657.9,165.9 L662.1,166.8 L666.3,167.9 L670.5,169.0 L674.6,170.3 L678.8,171.6 L682.9,173.0 L687.0,174.5 L688.9,175.7 L690.3,177.3 L691.0,179.2 L690.9,181.1 L689.9,182.7 L688.3,183.8 L686.2,184.1 L684.0,183.7 L680.2,182.2 L676.4,180.9 L672.6,179.7 L668.7,178.5 L664.8,177.5 L660.9,176.5 L657.0,175.6 L653.1,174.8 L649.2,174.1 L645.3,173.5 L641.3,173.0 L637.4,172.5 L633.5,172.2 L629.6,171.9 L625.7,171.8 L621.8,171.7 L617.9,171.8 L614.1,171.9 L610.2,172.1 L606.4,172.4 L602.7,172.8 L598.9,173.3 L595.2,173.9 L591.5,174.6 L587.8,175.3 L584.2,176.2 L580.7,177.1 L578.6,177.3 L576.4,176.7 L574.6,175.4 L573.3,173.7 L572.7,171.8 L573.1,169.9 L574.2,168.4Z" fill="#cbcb00"/>
<clipPath id="sc2"><path d="M729.6,197.1 L733.3,199.7 L736.9,202.4 L740.4,205.2 L743.9,208.0 L747.3,210.9 L750.6,213.9 L753.9,217.0 L757.0,220.1 L760.1,223.3 L763.1,226.5 L766.0,229.9 L768.9,233.2 L771.6,236.6 L774.2,240.1 L776.8,243.6 L779.2,247.2 L781.6,250.8 L783.8,254.5 L786.0,258.1 L788.0,261.9 L790.0,265.6 L791.8,269.4 L793.5,273.2 L795.1,277.1 L796.6,280.9 L798.0,284.8 L798.3,286.8 L797.7,288.6 L796.3,289.9 L794.4,290.5 L792.3,290.5 L790.2,289.6 L788.5,288.2 L787.4,286.4 L786.2,282.7 L784.8,279.1 L783.3,275.6 L781.6,272.0 L779.9,268.5 L778.1,265.0 L776.2,261.5 L774.2,258.1 L772.1,254.7 L770.0,251.3 L767.7,248.0 L765.3,244.7 L762.9,241.5 L760.3,238.3 L757.7,235.2 L755.0,232.1 L752.2,229.1 L749.3,226.1 L746.3,223.2 L743.3,220.3 L740.2,217.6 L737.1,214.8 L733.8,212.2 L730.5,209.6 L727.1,207.1 L723.7,204.7 L722.1,203.1 L721.2,201.2 L721.2,199.3 L721.9,197.6 L723.4,196.4 L725.4,195.9 L727.5,196.1Z"/></clipPath>
<path d="M729.6,197.1 L733.3,199.7 L736.9,202.4 L740.4,205.2 L743.9,208.0 L747.3,210.9 L750.6,213.9 L753.9,217.0 L757.0,220.1 L760.1,223.3 L763.1,226.5 L766.0,229.9 L768.9,233.2 L771.6,236.6 L774.2,240.1 L776.8,243.6 L779.2,247.2 L781.6,250.8 L783.8,254.5 L786.0,258.1 L788.0,261.9 L790.0,265.6 L791.8,269.4 L793.5,273.2 L795.1,277.1 L796.6,280.9 L798.0,284.8 L798.3,286.8 L797.7,288.6 L796.3,289.9 L794.4,290.5 L792.3,290.5 L790.2,289.6 L788.5,288.2 L787.4,286.4 L786.2,282.7 L784.8,279.1 L783.3,275.6 L781.6,272.0 L779.9,268.5 L778.1,265.0 L776.2,261.5 L774.2,258.1 L772.1,254.7 L770.0,251.3 L767.7,248.0 L765.3,244.7 L762.9,241.5 L760.3,238.3 L757.7,235.2 L755.0,232.1 L752.2,229.1 L749.3,226.1 L746.3,223.2 L743.3,220.3 L740.2,217.6 L737.1,214.8 L733.8,212.2 L730.5,209.6 L727.1,207.1 L723.7,204.7 L722.1,203.1 L721.2,201.2 L721.2,199.3 L721.9,197.6 L723.4,196.4 L725.4,195.9 L727.5,196.1Z" fill="#c8c800"/>
<clipPath id="sc3"><path d="M805.6,336.0 L805.3,339.7 L805.0,343.5 L804.5,347.2 L803.9,350.9 L803.2,354.5 L802.4,358.2 L801.5,361.8 L800.5,365.3 L799.3,368.8 L798.1,372.3 L796.7,375.7 L795.3,379.0 L793.7,382.4 L792.0,385.6 L790.3,388.8 L788.4,392.0 L786.4,395.1 L784.3,398.1 L782.1,401.1 L779.9,404.0 L777.5,406.8 L775.0,409.6 L772.5,412.2 L769.8,414.9 L767.1,417.4 L765.4,418.3 L763.3,418.6 L761.2,418.0 L759.3,416.8 L757.9,415.1 L757.4,413.2 L757.6,411.3 L758.7,409.8 L761.2,407.4 L763.7,405.0 L766.1,402.5 L768.3,399.9 L770.6,397.3 L772.7,394.6 L774.7,391.8 L776.6,389.0 L778.5,386.1 L780.2,383.2 L781.9,380.2 L783.4,377.2 L784.9,374.1 L786.2,370.9 L787.5,367.8 L788.7,364.5 L789.7,361.3 L790.7,358.0 L791.5,354.6 L792.3,351.3 L792.9,347.9 L793.5,344.4 L793.9,341.0 L794.2,337.5 L794.5,334.0 L795.0,332.2 L796.3,330.8 L798.1,330.1 L800.3,330.1 L802.4,330.8 L804.1,332.2 L805.2,334.0Z"/></clipPath>
<path d="M805.6,336.0 L805.3,339.7 L805.0,343.5 L804.5,347.2 L803.9,350.9 L803.2,354.5 L802.4,358.2 L801.5,361.8 L800.5,365.3 L799.3,368.8 L798.1,372.3 L796.7,375.7 L795.3,379.0 L793.7,382.4 L792.0,385.6 L790.3,388.8 L788.4,392.0 L786.4,395.1 L784.3,398.1 L782.1,401.1 L779.9,404.0 L777.5,406.8 L775.0,409.6 L772.5,412.2 L769.8,414.9 L767.1,417.4 L765.4,418.3 L763.3,418.6 L761.2,418.0 L759.3,416.8 L757.9,415.1 L757.4,413.2 L757.6,411.3 L758.7,409.8 L761.2,407.4 L763.7,405.0 L766.1,402.5 L768.3,399.9 L770.6,397.3 L772.7,394.6 L774.7,391.8 L776.6,389.0 L778.5,386.1 L780.2,383.2 L781.9,380.2 L783.4,377.2 L784.9,374.1 L786.2,370.9 L787.5,367.8 L788.7,364.5 L789.7,361.3 L790.7,358.0 L791.5,354.6 L792.3,351.3 L792.9,347.9 L793.5,344.4 L793.9,341.0 L794.2,337.5 L794.5,334.0 L795.0,332.2 L796.3,330.8 L798.1,330.1 L800.3,330.1 L802.4,330.8 L804.1,332.2 L805.2,334.0Z" fill="#a4a400"/>
<path d="M791.2,328.7 L791.8,332.5 L792.4,336.3 L792.8,340.2 L793.1,344.0 L793.3,347.8 L793.4,351.6 L793.4,355.4 L793.2,359.1 L793.0,362.9 L792.6,366.6 L792.1,370.3 L791.6,373.9 L790.9,377.6 L790.1,381.2 L789.1,384.7 L788.1,388.3 L787.0,391.8 L785.7,395.2 L784.4,398.6 L782.9,401.9 L781.4,405.2 L779.7,408.5 L778.0,411.7 L776.1,414.8 L774.1,417.9 L772.1,420.9 L769.9,423.9 L767.6,426.8 L765.3,429.6 L762.8,432.3 L760.3,435.0 L757.7,437.6 L755.0,440.1 L752.2,442.6 L749.3,445.0 L746.3,447.2 L743.3,449.5 L740.2,451.6 L737.0,453.6 L733.7,455.6 L730.4,457.5 L728.4,458.0 L726.3,457.9 L724.2,456.9 L722.6,455.4 L721.6,453.6 L721.5,451.6 L722.2,449.9 L723.6,448.7 L726.7,446.9 L729.8,445.1 L732.7,443.2 L735.6,441.2 L738.5,439.1 L741.2,437.0 L743.9,434.8 L746.5,432.5 L749.0,430.2 L751.5,427.7 L753.8,425.2 L756.1,422.7 L758.3,420.1 L760.4,417.4 L762.4,414.6 L764.3,411.8 L766.2,409.0 L767.9,406.0 L769.6,403.1 L771.1,400.0 L772.6,397.0 L773.9,393.9 L775.2,390.7 L776.3,387.5 L777.4,384.2 L778.3,381.0 L779.2,377.6 L779.9,374.3 L780.6,370.9 L781.1,367.5 L781.6,364.0 L781.9,360.6 L782.1,357.1 L782.3,353.6 L782.3,350.1 L782.2,346.5 L782.0,343.0 L781.7,339.4 L781.3,335.9 L780.8,332.3 L780.2,328.7 L780.3,326.8 L781.2,325.2 L782.8,324.1 L784.8,323.7 L787.0,324.1 L788.9,325.1 L790.4,326.8Z" fill="#fafa00" clip-path="url(#sc3)"/>
<clipPath id="sc4"><path d="M715.9,443.7 L712.1,444.8 L708.3,445.8 L704.4,446.7 L700.5,447.6 L696.5,448.3 L692.5,448.9 L688.5,449.4 L684.4,449.8 L680.3,450.1 L676.2,450.3 L672.0,450.4 L667.9,450.4 L663.7,450.3 L659.5,450.1 L655.3,449.8 L651.1,449.4 L646.9,448.9 L642.6,448.3 L638.4,447.6 L634.2,446.8 L630.0,446.0 L625.8,445.0 L621.6,443.9 L617.5,442.7 L613.3,441.4 L609.2,440.0 L605.1,438.6 L601.0,437.0 L597.0,435.4 L593.0,433.6 L589.0,431.8 L585.1,429.9 L581.2,427.9 L577.4,425.8 L573.6,423.6 L569.8,421.4 L566.1,419.0 L562.5,416.6 L558.9,414.1 L555.4,411.6 L551.9,408.9 L548.5,406.2 L545.2,403.4 L541.9,400.6 L538.8,397.7 L535.6,394.7 L532.6,391.6 L529.7,388.5 L526.8,385.4 L524.0,382.2 L521.3,378.9 L518.7,375.6 L516.1,372.2 L513.7,368.8 L511.3,365.4 L509.1,361.9 L506.9,358.4 L504.9,354.8 L502.9,351.2 L501.0,347.5 L499.3,343.9 L497.6,340.2 L496.0,336.5 L494.6,332.8 L493.2,329.0 L492.0,325.2 L491.8,323.4 L492.4,321.7 L493.7,320.5 L495.6,319.9 L497.6,320.1 L499.6,320.9 L501.2,322.3 L502.1,324.0 L503.3,327.5 L504.5,331.0 L505.9,334.5 L507.3,338.0 L508.9,341.4 L510.5,344.9 L512.3,348.3 L514.1,351.6 L516.0,354.9 L518.1,358.2 L520.2,361.5 L522.4,364.7 L524.6,367.9 L527.0,371.1 L529.5,374.1 L532.0,377.2 L534.6,380.2 L537.3,383.1 L540.0,386.0 L542.9,388.9 L545.8,391.7 L548.7,394.4 L551.8,397.0 L554.9,399.6 L558.1,402.2 L561.3,404.6 L564.6,407.0 L567.9,409.3 L571.3,411.6 L574.8,413.8 L578.3,415.9 L581.8,417.9 L585.4,419.9 L589.0,421.7 L592.7,423.5 L596.4,425.2 L600.2,426.9 L603.9,428.4 L607.7,429.9 L611.6,431.2 L615.4,432.5 L619.3,433.7 L623.2,434.8 L627.1,435.8 L631.0,436.7 L634.9,437.6 L638.8,438.3 L642.8,439.0 L646.7,439.5 L650.7,440.0 L654.6,440.4 L658.5,440.6 L662.4,440.8 L666.3,440.9 L670.2,440.9 L674.1,440.8 L677.9,440.6 L681.8,440.3 L685.6,439.9 L689.3,439.5 L693.1,438.9 L696.8,438.2 L700.5,437.5 L704.1,436.6 L707.7,435.7 L711.2,434.7 L713.2,434.5 L715.2,435.0 L717.0,436.2 L718.3,437.8 L718.8,439.6 L718.6,441.4 L717.6,442.9Z"/></clipPath>
<path d="M715.9,443.7 L712.1,444.8 L708.3,445.8 L704.4,446.7 L700.5,447.6 L696.5,448.3 L692.5,448.9 L688.5,449.4 L684.4,449.8 L680.3,450.1 L676.2,450.3 L672.0,450.4 L667.9,450.4 L663.7,450.3 L659.5,450.1 L655.3,449.8 L651.1,449.4 L646.9,448.9 L642.6,448.3 L638.4,447.6 L634.2,446.8 L630.0,446.0 L625.8,445.0 L621.6,443.9 L617.5,442.7 L613.3,441.4 L609.2,440.0 L605.1,438.6 L601.0,437.0 L597.0,435.4 L593.0,433.6 L589.0,431.8 L585.1,429.9 L581.2,427.9 L577.4,425.8 L573.6,423.6 L569.8,421.4 L566.1,419.0 L562.5,416.6 L558.9,414.1 L555.4,411.6 L551.9,408.9 L548.5,406.2 L545.2,403.4 L541.9,400.6 L538.8,397.7 L535.6,394.7 L532.6,391.6 L529.7,388.5 L526.8,385.4 L524.0,382.2 L521.3,378.9 L518.7,375.6 L516.1,372.2 L513.7,368.8 L511.3,365.4 L509.1,361.9 L506.9,358.4 L504.9,354.8 L502.9,351.2 L501.0,347.5 L499.3,343.9 L497.6,340.2 L496.0,336.5 L494.6,332.8 L493.2,329.0 L492.0,325.2 L491.8,323.4 L492.4,321.7 L493.7,320.5 L495.6,319.9 L497.6,320.1 L499.6,320.9 L501.2,322.3 L502.1,324.0 L503.3,327.5 L504.5,331.0 L505.9,334.5 L507.3,338.0 L508.9,341.4 L510.5,344.9 L512.3,348.3 L514.1,351.6 L516.0,354.9 L518.1,358.2 L520.2,361.5 L522.4,364.7 L524.6,367.9 L527.0,371.1 L529.5,374.1 L532.0,377.2 L534.6,380.2 L537.3,383.1 L540.0,386.0 L542.9,388.9 L545.8,391.7 L548.7,394.4 L551.8,397.0 L554.9,399.6 L558.1,402.2 L561.3,404.6 L564.6,407.0 L567.9,409.3 L571.3,411.6 L574.8,413.8 L578.3,415.9 L581.8,417.9 L585.4,419.9 L589.0,421.7 L592.7,423.5 L596.4,425.2 L600.2,426.9 L603.9,428.4 L607.7,429.9 L611.6,431.2 L615.4,432.5 L619.3,433.7 L623.2,434.8 L627.1,435.8 L631.0,436.7 L634.9,437.6 L638.8,438.3 L642.8,439.0 L646.7,439.5 L650.7,440.0 L654.6,440.4 L658.5,440.6 L662.4,440.8 L666.3,440.9 L670.2,440.9 L674.1,440.8 L677.9,440.6 L681.8,440.3 L685.6,439.9 L689.3,439.5 L693.1,438.9 L696.8,438.2 L700.5,437.5 L704.1,436.6 L707.7,435.7 L711.2,434.7 L713.2,434.5 L715.2,435.0 L717.0,436.2 L718.3,437.8 L718.8,439.6 L718.6,441.4 L717.6,442.9Z" fill="#c4c400"/>
<clipPath id="sc5"><path d="M484.0,274.8 L484.4,271.0 L484.8,267.2 L485.4,263.5 L486.1,259.8 L486.9,256.1 L487.8,252.4 L488.8,248.8 L490.0,245.2 L491.3,241.7 L492.6,238.2 L494.1,234.8 L495.7,231.4 L497.4,228.1 L499.2,224.8 L501.1,221.6 L503.2,218.5 L505.3,215.4 L507.5,212.4 L509.9,209.4 L512.3,206.6 L514.8,203.8 L517.4,201.0 L520.1,198.4 L522.9,195.8 L525.8,193.3 L527.6,192.4 L529.7,192.3 L531.8,192.9 L533.7,194.1 L534.9,195.9 L535.5,197.8 L535.1,199.7 L534.0,201.2 L531.3,203.5 L528.7,205.9 L526.2,208.3 L523.8,210.9 L521.4,213.5 L519.2,216.2 L517.0,218.9 L514.9,221.7 L512.9,224.6 L511.0,227.5 L509.3,230.5 L507.6,233.5 L506.0,236.6 L504.5,239.8 L503.1,242.9 L501.8,246.2 L500.7,249.5 L499.6,252.8 L498.6,256.2 L497.8,259.6 L497.0,263.0 L496.4,266.5 L495.8,270.0 L495.4,273.5 L495.1,277.1 L494.5,278.8 L493.2,280.2 L491.3,280.9 L489.2,280.8 L487.1,280.0 L485.4,278.6 L484.3,276.8Z"/></clipPath>
<path d="M484.0,274.8 L484.4,271.0 L484.8,267.2 L485.4,263.5 L486.1,259.8 L486.9,256.1 L487.8,252.4 L488.8,248.8 L490.0,245.2 L491.3,241.7 L492.6,238.2 L494.1,234.8 L495.7,231.4 L497.4,228.1 L499.2,224.8 L501.1,221.6 L503.2,218.5 L505.3,215.4 L507.5,212.4 L509.9,209.4 L512.3,206.6 L514.8,203.8 L517.4,201.0 L520.1,198.4 L522.9,195.8 L525.8,193.3 L527.6,192.4 L529.7,192.3 L531.8,192.9 L533.7,194.1 L534.9,195.9 L535.5,197.8 L535.1,199.7 L534.0,201.2 L531.3,203.5 L528.7,205.9 L526.2,208.3 L523.8,210.9 L521.4,213.5 L519.2,216.2 L517.0,218.9 L514.9,221.7 L512.9,224.6 L511.0,227.5 L509.3,230.5 L507.6,233.5 L506.0,236.6 L504.5,239.8 L503.1,242.9 L501.8,246.2 L500.7,249.5 L499.6,252.8 L498.6,256.2 L497.8,259.6 L497.0,263.0 L496.4,266.5 L495.8,270.0 L495.4,273.5 L495.1,277.1 L494.5,278.8 L493.2,280.2 L491.3,280.9 L489.2,280.8 L487.1,280.0 L485.4,278.6 L484.3,276.8Z" fill="#a6a600"/>
<path d="M469.2,334.9 L468.7,331.0 L468.2,327.2 L467.9,323.3 L467.7,319.5 L467.6,315.6 L467.6,311.8 L467.7,308.0 L467.9,304.2 L468.3,300.4 L468.8,296.7 L469.3,293.0 L470.0,289.3 L470.8,285.7 L471.8,282.1 L472.8,278.5 L473.9,275.0 L475.2,271.5 L476.6,268.0 L478.0,264.7 L479.6,261.3 L481.3,258.0 L483.1,254.8 L485.0,251.6 L487.0,248.5 L489.1,245.5 L491.3,242.5 L493.5,239.6 L495.9,236.8 L498.4,234.0 L501.0,231.3 L503.7,228.7 L506.4,226.1 L509.3,223.6 L512.2,221.3 L515.2,219.0 L518.3,216.7 L521.5,214.6 L524.7,212.6 L528.0,210.6 L531.4,208.7 L534.9,206.9 L536.9,206.4 L539.0,206.7 L541.0,207.6 L542.6,209.2 L543.5,211.1 L543.6,213.0 L542.8,214.7 L541.3,215.9 L538.1,217.6 L535.0,219.3 L531.9,221.1 L528.8,223.0 L525.9,225.0 L523.0,227.1 L520.2,229.2 L517.5,231.5 L514.8,233.8 L512.3,236.1 L509.8,238.6 L507.4,241.1 L505.1,243.7 L502.9,246.3 L500.7,249.0 L498.7,251.8 L496.7,254.6 L494.9,257.5 L493.1,260.5 L491.4,263.5 L489.9,266.5 L488.4,269.6 L487.0,272.8 L485.8,276.0 L484.6,279.2 L483.5,282.5 L482.6,285.8 L481.7,289.2 L481.0,292.6 L480.3,296.0 L479.8,299.5 L479.4,302.9 L479.0,306.5 L478.8,310.0 L478.7,313.5 L478.7,317.1 L478.8,320.7 L479.0,324.2 L479.3,327.8 L479.7,331.4 L480.2,335.1 L480.1,337.0 L479.2,338.6 L477.6,339.6 L475.5,340.0 L473.4,339.6 L471.4,338.5 L470.0,336.8Z" fill="#fafa00" clip-path="url(#sc5)"/>
<path d="M615.9,161.7 L611.5,169.9 M679.0,171.7 L674.6,179.9 M734.1,200.3 L729.7,208.5 M776.8,243.6 L772.4,251.8" stroke="#45450e" stroke-width="1.6"/>
<path d="M689.7,201.4 L693.7,189.5 L698.9,188.5 L704.1,190.7 L708.5,194.2 L709.1,198.8 L703.7,209.3Z" fill="#d6d600"/>
<path d="M690.9,199.2 L694.9,187.3 L700.1,186.3 L705.3,188.5 L709.7,192.0 L710.3,196.6 L704.8,207.1Z" fill="#ffff00" stroke="#8a8a00" stroke-width="0.5"/>
<linearGradient id="lg1" gradientUnits="userSpaceOnUse" x1="418.0" y1="330.0" x2="396.0" y2="336.0"><stop offset="0" stop-color="#ffff00"/><stop offset="0.25" stop-color="#f1f100"/><stop offset="0.5" stop-color="#ffff30"/><stop offset="0.78" stop-color="#e9e900"/><stop offset="1" stop-color="#f8f800"/></linearGradient>
<path d="M409.4,318.9 L418.0,318.3 L423.0,321.0 L413.0,338.0 L405.0,349.3 L402.2,348.8 L391.0,348.0 L402.0,327.0Z" fill="url(#lg1)"/>
<linearGradient id="lg2" gradientUnits="userSpaceOnUse" x1="528.0" y1="124.0" x2="505.0" y2="118.0"><stop offset="0" stop-color="#ffff00"/><stop offset="0.25" stop-color="#f1f100"/><stop offset="0.5" stop-color="#ffff30"/><stop offset="0.78" stop-color="#e9e900"/><stop offset="1" stop-color="#f8f800"/></linearGradient>
<path d="M518.0,106.4 L526.0,104.8 L535.0,108.5 L524.0,126.0 L514.0,139.5 L506.0,136.4 L499.0,139.0 L502.0,134.5 L510.0,118.0Z" fill="url(#lg2)"/>
<linearGradient id="lg3" gradientUnits="userSpaceOnUse" x1="852.0" y1="290.0" x2="878.0" y2="305.0"><stop offset="0" stop-color="#ffff00"/><stop offset="0.25" stop-color="#f1f100"/><stop offset="0.5" stop-color="#ffff30"/><stop offset="0.78" stop-color="#e9e900"/><stop offset="1" stop-color="#f8f800"/></linearGradient>
<path d="M840.0,304.7 L864.8,276.4 L876.0,284.4 L881.6,294.5 L876.0,309.0 L867.0,326.0 L865.6,323.6 L860.0,314.0 L850.4,307.6Z" fill="url(#lg3)"/>
<linearGradient id="lg4" gradientUnits="userSpaceOnUse" x1="748.0" y1="510.0" x2="772.0" y2="514.0"><stop offset="0" stop-color="#ffff00"/><stop offset="0.25" stop-color="#f1f100"/><stop offset="0.5" stop-color="#ffff30"/><stop offset="0.78" stop-color="#e9e900"/><stop offset="1" stop-color="#f8f800"/></linearGradient>
<path d="M749.3,483.1 L758.2,489.3 L766.5,496.2 L771.3,503.0 L772.0,510.0 L767.9,521.0 L762.3,532.0 L756.8,543.0 L753.4,549.2 L755.5,538.9 L754.1,532.0 L750.0,526.5 L746.0,505.0Z" fill="url(#lg4)"/>
<!--/SCENE-->
</svg>
</div>
<div id="rightbar" class="abs"></div>
<div id="bottools" class="abs"></div>
<div id="status" class="abs"></div>
<div id="task" class="abs"></div>
<!--UI-->
<svg class="abs" width="1000" height="625" viewBox="0 0 1000 625" style="left:0;top:0">
<defs><linearGradient id="tbg" x1="0" y1="0" x2="0" y2="1"><stop offset="0" stop-color="#f3f5fc"/><stop offset="0.6" stop-color="#e6e9f4"/><stop offset="1" stop-color="#d3d9e8"/></linearGradient><linearGradient id="tbgv" x1="0" y1="0" x2="1" y2="0"><stop offset="0" stop-color="#f3f5fc"/><stop offset="0.6" stop-color="#e6e9f4"/><stop offset="1" stop-color="#d3d9e8"/></linearGradient></defs>
<rect x="1.5" y="31.5" width="160.5" height="11.5" rx="2" fill="url(#tbg)"/>
<path d="M3.5,34 v6.5" stroke="#9aa3b8" stroke-width="0.9" stroke-dasharray="0.9 0.9"/>
<path d="M5.1,38.4 l3,-3.5 l2.5,5 l3.5,-4.5 M8.6,33.4 v8" fill="none" stroke="#d18a24" stroke-width="1.5"/>
<path d="M17.1,39.9 a4,4.3 0 0 1 8,0" fill="none" stroke="#b0272d" stroke-width="1.4"/>
<circle cx="32.7" cy="37.4" r="3.6" fill="none" stroke="#b0272d" stroke-width="1.3"/>
<rect x="40.2" y="34.4" width="8" height="6" fill="none" stroke="#d18a24" stroke-width="1.4"/>
<path d="M52.2,41.4 q-0.5,-5.5 4,-5.5" fill="none" stroke="#b0272d" stroke-width="1.4"/><path d="M55.7,32.9 l4.5,3 l-4.5,3z" fill="#3a3a3a"/>
<text x="62.5" y="40.4" font-family="Liberation Sans,sans-serif" font-size="8" fill="#3a3a3a" letter-spacing="-0.5">Ab</text>
<text x="74.3" y="40.4" font-family="Liberation Sans,sans-serif" font-size="8.5" font-style="italic" fill="#3a3a3a">A</text><path d="M77.8,38.4 q3,-4 4.5,-1.5" stroke="#b0272d" fill="none" stroke-width="1.1"/>
<path d="M85.8,33.6 h9 M87.3,33.6 v8 M92.3,33.6 v8" stroke="#8a1c22" stroke-width="1.1" fill="none"/><rect x="88.8" y="35.9" width="5" height="4.5" fill="none" stroke="#3a3a3a" stroke-width="1.1"/>
<rect x="97.8" y="34.4" width="8" height="6.6" rx="1" fill="#eceef5" stroke="#b3b8c4" stroke-width="0.9"/><path d="M100.3,38.9 l1.3,1.2 l2.2,-3" stroke="#b3b8c4" stroke-width="0.8" fill="none"/><path d="M99.8,33.4 v1.6 M103.8,33.4 v1.6" stroke="#b3b8c4" stroke-width="0.9"/>
<path d="M109.9,40.9 q4,0.5 3.5,-3.5 q-0.5,-3.5 3.5,-3.5" fill="none" stroke="#b0272d" stroke-width="1.5"/>
<path d="M121.4,33.4 v8 h8 M121.4,41.4 l7,-6 M121.4,41.4 l4.5,-8" fill="none" stroke="#d18a24" stroke-width="1.1"/>
<path d="M131.9,38.4 l4.5,-3.5 l4.5,2 l-4.5,3.8z" fill="#f3d255" stroke="#b48a1e" stroke-width="0.6"/>
<path d="M144,38.4 l5,-5 M145,40.9 l7,-7 M148,41.4 l4.5,-4.5" stroke="#d18a24" stroke-width="1.3"/><path d="M144,35.4 h4 M148,39.4 h4" stroke="#9a5a1c" stroke-width="1.2"/>
<rect x="156" y="31.9" width="4" height="8" rx="1.5" fill="#c9cfdc"/><path d="M156.4,40.6 h3.2 l-1.6,1.9z" fill="#222"/><path d="M156.5,39.4 h3" stroke="#222" stroke-width="0.6"/>
<rect x="164.5" y="31.5" width="89.5" height="11.5" rx="2" fill="url(#tbg)"/>
<path d="M166.5,34 v6.5" stroke="#9aa3b8" stroke-width="0.9" stroke-dasharray="0.9 0.9"/>
<path d="M168.2,37.4 l2,-3.5 h4 l2,3.5 l-2,3.5 h-4z" fill="none" stroke="#b0272d" stroke-width="1.3"/>
<ellipse cx="183.5" cy="37.4" rx="4.2" ry="2.9" fill="none" stroke="#b0272d" stroke-width="1.3"/>
<circle cx="194.9" cy="37.4" r="3.4" fill="none" stroke="#b0272d" stroke-width="1.2" stroke-dasharray="1.3 1"/>
<path d="M206.8,37.9 a1.3,1.3 0 1 1 1,-1.5 a3,3 0 1 1 -4,3 a4,4 0 1 0 3,-6" fill="none" stroke="#b0272d" stroke-width="1.2"/>
<rect x="213.3" y="35" width="8.6" height="4.8" rx="2.4" fill="none" stroke="#b0272d" stroke-width="1.3"/>
<path d="M224.9,40.9 h3 q1.5,0 2,-3 q0.5,-3 3,-3.5" fill="none" stroke="#3a3a3a" stroke-width="1.2"/>
<rect x="236.1" y="33.8" width="8.4" height="7.2" fill="#e9d7d7" stroke="#8a1c22" stroke-width="1.6"/>
<rect x="248.6" y="31.9" width="4" height="8" rx="1.5" fill="#c9cfdc"/><path d="M249,40.6 h3.2 l-1.6,1.9z" fill="#222"/><path d="M249.1,39.4 h3" stroke="#222" stroke-width="0.6"/>
<rect x="266.5" y="31.5" width="116.5" height="11.5" rx="2" fill="url(#tbg)"/>
<path d="M268.5,34 v6.5" stroke="#9aa3b8" stroke-width="0.9" stroke-dasharray="0.9 0.9"/>
<rect x="268.5" y="31.9" width="12" height="11" rx="1" fill="#cfd8ea" stroke="#9fb0cf" stroke-width="0.6"/><path d="M271,34.9 h4 M271,34.9 l6,5.5" stroke="#3a3a3a" stroke-width="1.3"/><path d="M278,37.4 v3.5 h-3.5" fill="none" stroke="#f3d255" stroke-width="1.6"/>
<path d="M285.6,37.4 h8" stroke="#b3b8c4" stroke-width="1.1"/>
<path d="M297.1,37.4 h8" stroke="#b3b8c4" stroke-width="1.1"/>
<circle cx="312.6" cy="37.4" r="3.6" fill="none" stroke="#b3b8c4" stroke-width="1"/><circle cx="312.6" cy="37.4" r="0.8" fill="#b3b8c4"/>
<path d="M320.1,40.4 l3.5,-3.5 l4,-2.5 M321.1,34.4 l2.5,2.5 l3,4" fill="none" stroke="#b3b8c4" stroke-width="1.1"/>
<path d="M331.6,40.4 l3.5,-3.5 l4,-2.5 M332.6,34.4 l2.5,2.5 l3,4" fill="none" stroke="#b3b8c4" stroke-width="1.1"/>
<path d="M343.1,40.9 h8 M348.1,40.9 v-7" fill="none" stroke="#b3b8c4" stroke-width="1.1"/>
<path d="M354.6,35.9 h8 M354.6,38.9 h8 M356.6,40.9 l4,-7" fill="none" stroke="#b3b8c4" stroke-width="1"/>
<path d="M366.1,35.7 l2.3,-2.3 h3.4 l2.3,2.3 v3.4 l-2.3,2.3 h-3.4 l-2.3,-2.3z" fill="none" stroke="#b3b8c4" stroke-width="1"/>
<rect x="377.5" y="31.9" width="4" height="8" rx="1.5" fill="#c9cfdc"/><path d="M377.9,40.6 h3.2 l-1.6,1.9z" fill="#222"/><path d="M378,39.4 h3" stroke="#222" stroke-width="0.6"/>
<rect x="385.5" y="31.5" width="341.5" height="11.5" rx="2" fill="url(#tbg)"/>
<path d="M387.5,34 v6.5" stroke="#9aa3b8" stroke-width="0.9" stroke-dasharray="0.9 0.9"/>
<path d="M390.5,35.4 h3 a3,3 0 0 1 0,6 h-1" stroke="#b0272d" stroke-width="1.7" fill="none"/><path d="M388.2,35.4 l3.2,-2.8 v5.6z" fill="#b0272d"/>
<path d="M407,35.4 h-3 a3,3 0 0 0 0,6 h1" stroke="#b3b8c4" stroke-width="1.7" fill="none"/><path d="M409.3,35.4 l-3.2,-2.8 v5.6z" fill="#b3b8c4"/>
<path d="M412.5,33.9 l7,7 M419.5,33.9 l-7,7" stroke="#b0272d" stroke-width="1.7"/>
<path d="M424.5,40.4 L430.5,34.4" stroke="#8a1c22" stroke-width="1"/><rect x="423" y="38.4" width="3.4" height="3.4" fill="#f3d255" stroke="#b48a1e" stroke-width="0.6"/><rect x="428.7" y="33" width="3.4" height="3.4" fill="#f3d255" stroke="#b48a1e" stroke-width="0.6"/>
<path d="M436,40.4 L442,34.4" stroke="#b0272d" stroke-width="1"/><rect x="434.5" y="38.4" width="3.4" height="3.4" fill="#f3d255" stroke="#b48a1e" stroke-width="0.6"/><rect x="440.2" y="33" width="3.4" height="3.4" fill="#f3d255" stroke="#b48a1e" stroke-width="0.6"/>
<path d="M447.5,40.4 L453.5,34.4" stroke="#3a3a3a" stroke-width="1"/><rect x="446" y="38.4" width="3.4" height="3.4" fill="#f3d255" stroke="#b48a1e" stroke-width="0.6"/><rect x="451.7" y="33" width="3.4" height="3.4" fill="#f3d255" stroke="#b48a1e" stroke-width="0.6"/>
<path d="M458,40.9 h8 M463,40.9 v-7" fill="none" stroke="#b3b8c4" stroke-width="1.1"/>
<rect x="469.7" y="33.6" width="7.6" height="7.6" fill="#f3d255" stroke="#b48a1e" stroke-width="0.9"/><path d="M470,40.9 l7,-7" stroke="#3a3a3a" stroke-width="1.3"/>
<path d="M482,32.9 L488,41.9 M488,32.9 L482,41.9" stroke="#3a3a3a" stroke-width="1.2"/><path d="M483,36.4 h4" stroke="#b0272d" stroke-width="1.2"/>
<path d="M493.5,32.9 L499.5,41.9 M499.5,32.9 L493.5,41.9" stroke="#3a3a3a" stroke-width="1.2"/><path d="M494.5,36.4 h4" stroke="#b0272d" stroke-width="1.2"/>
<path d="M504,33.4 L512,41.4" stroke="#3a3a3a" stroke-width="1.4"/><path d="M507,33.4 L509,41.4" stroke="#b0272d" stroke-width="1"/>
<path d="M515.5,33.4 L523.5,41.4" stroke="#b0272d" stroke-width="1.4"/>
<path d="M527,33.4 L535,41.4" stroke="#b0272d" stroke-width="1.4"/>
<path d="M538.5,41.4 v-7.5 h8 M538.5,40.4 q0.5,-6 7.5,-6.5" fill="none" stroke="#b0272d" stroke-width="1.2"/>
<path d="M550,33.9 h7.5 v7.5 M551,33.9 l6.5,6.5" fill="none" stroke="#b0272d" stroke-width="1.2"/>
<path d="M561.5,40.4 l3.5,-3.5 l4,-2.5 M562.5,34.4 l2.5,2.5 l3,4" fill="none" stroke="#b0272d" stroke-width="1.1"/>
<rect x="573.2" y="33.6" width="7.6" height="7.6" fill="#f3d255" stroke="#b48a1e" stroke-width="0.9"/><path d="M573.5,40.9 l7,-7" stroke="#b0272d" stroke-width="1.3"/>
<rect x="584.5" y="34" width="8" height="6.8" fill="#e8d9a0" stroke="#9a5a1c" stroke-width="1.5"/>
<rect x="596" y="34" width="8" height="6.8" fill="#e8d9a0" stroke="#9a5a1c" stroke-width="1.5"/><path d="M597,40.4 l6,-6 M597,34.4 l6,6" stroke="#b0272d" stroke-width="1.2"/>
<rect x="607.5" y="34.4" width="8" height="6" fill="none" stroke="#3a3a3a" stroke-width="1.4"/>
<rect x="618.7" y="35.4" width="5" height="4" fill="#d9b48a" stroke="#9a5a1c" stroke-width="0.9"/><path d="M624.8,36.4 h2.5 M624.8,38.4 h2.5" stroke="#9a5a1c" stroke-width="0.9"/>
<text x="630" y="37.4" font-family="Liberation Sans,sans-serif" font-size="5" font-weight="bold" fill="#3a3a3a">123</text><path d="M631,40.2 h7" stroke="#b0272d" stroke-width="1.3"/>
<path d="M642.5,33.9 l7,7" stroke="#b48a1e" stroke-width="3.4" stroke-linecap="round"/><path d="M642.5,33.9 l7,7" stroke="#f3d255" stroke-width="2" stroke-linecap="round"/>
<path d="M653.3,33.2 h3.4 v3.4 h-3.4z M658.3,33.2 h3.4 v3.4 h-3.4z M653.3,38.2 h3.4 v3.4 h-3.4z M658.3,38.2 h3.4 v3.4 h-3.4z" fill="#f3d255" stroke="#b48a1e" stroke-width="0.7"/>
<rect x="665" y="34" width="8" height="6.8" fill="#fbf3c8" stroke="#b48a1e" stroke-width="1.1"/>
<rect x="676.7" y="34.4" width="6.5" height="6.5" fill="#f3d255" stroke="#b48a1e" stroke-width="0.8"/><path d="M679.5,39.4 l5,-5.5" stroke="#3a3a3a" stroke-width="1.3"/>
<rect x="688.2" y="34.4" width="6.5" height="6.5" fill="#f3d255" stroke="#b48a1e" stroke-width="0.8"/><path d="M691,39.4 l5,-5.5" stroke="#b0272d" stroke-width="1.3"/>
<circle cx="704" cy="38.4" r="3.2" fill="#f3d255" stroke="#b48a1e" stroke-width="0.8"/><circle cx="701.5" cy="34.9" r="1.6" fill="#f4f4f8" stroke="#b3b8c4" stroke-width="0.6"/>
<path d="M711,33.4 l8,8 M718.5,33.9 l-7,7 M715,32.9 v9" stroke="#3a3a3a" stroke-width="0.9"/><path d="M711,33.9 l7.5,7.5" stroke="#d18a24" stroke-width="1.4"/>
<path d="M722.5,33.4 l8,8 M730,33.9 l-7,7 M726.5,32.9 v9" stroke="#3a3a3a" stroke-width="0.9"/><path d="M722.5,33.9 l7.5,7.5" stroke="#d18a24" stroke-width="1.4"/>
<rect x="721.6" y="31.9" width="4" height="8" rx="1.5" fill="#c9cfdc"/><path d="M722,40.6 h3.2 l-1.6,1.9z" fill="#222"/><path d="M722.1,39.4 h3" stroke="#222" stroke-width="0.6"/>
<rect x="259.5" y="45.5" width="124.5" height="11" rx="2" fill="url(#tbg)"/>
<path d="M261.5,48 v6" stroke="#9aa3b8" stroke-width="0.9" stroke-dasharray="0.9 0.9"/>
<path d="M268,46.4 l1.4,3.2 l3.2,1.4 l-3.2,1.4 l-1.4,3.2 l-1.4,-3.2 l-3.2,-1.4 l3.2,-1.4z" fill="#f3d255" stroke="#3a3a3a" stroke-width="0.9"/>
<circle cx="279.4" cy="51" r="3.6" fill="none" stroke="#3a3a3a" stroke-width="1" stroke-dasharray="1.6 1"/><path d="M279.4,51 l2.5,-2.5" stroke="#3a3a3a" stroke-width="1"/>
<path d="M286.9,47.5 h8 v8" fill="none" stroke="#b0272d" stroke-width="1.5"/><path d="M287.4,54 l4.5,-4.5" stroke="#3a3a3a" stroke-width="1.1"/>
<path d="M298.4,47.5 h7.5 v7.5 M299.4,47.5 l6.5,6.5" fill="none" stroke="#b0272d" stroke-width="1.2"/>
<path d="M309.8,54 l3.5,-3.5 l4,-2.5 M310.8,48 l2.5,2.5 l3,4" fill="none" stroke="#b3b8c4" stroke-width="1.1"/>
<path d="M321.2,54 l3.5,-3.5 l4,-2.5 M322.2,48 l2.5,2.5 l3,4" fill="none" stroke="#b3b8c4" stroke-width="1.1"/>
<path d="M332.7,54 l3.5,-3.5 l4,-2.5 M333.7,48 l2.5,2.5 l3,4" fill="none" stroke="#b3b8c4" stroke-width="1.1"/>
<path d="M345.6,49 h3 a3,3 0 0 1 0,6 h-1" stroke="#b3b8c4" stroke-width="1.7" fill="none"/><path d="M343.3,49 l3.2,-2.8 v5.6z" fill="#b3b8c4"/>
<path d="M356.1,51 l2.3,3 l4.5,-7" stroke="#b0272d" stroke-width="1.6" fill="none"/>
<rect x="367.1" y="48" width="8" height="6.6" rx="1" fill="#eceef5" stroke="#b3b8c4" stroke-width="0.9"/><path d="M369.6,52.5 l1.3,1.2 l2.2,-3" stroke="#b3b8c4" stroke-width="0.8" fill="none"/><path d="M369.1,47 v1.6 M373.1,47 v1.6" stroke="#b3b8c4" stroke-width="0.9"/>
<rect x="378" y="45.5" width="4" height="8" rx="1.5" fill="#c9cfdc"/><path d="M378.4,54.2 h3.2 l-1.6,1.9z" fill="#222"/><path d="M378.5,53 h3" stroke="#222" stroke-width="0.6"/>
<rect x="425.5" y="45.5" width="102.5" height="11" rx="2" fill="url(#tbg)"/>
<path d="M427.5,48 v6" stroke="#9aa3b8" stroke-width="0.9" stroke-dasharray="0.9 0.9"/>
<rect x="429.2" y="47.2" width="7.6" height="7.6" fill="#f3d255" stroke="#b48a1e" stroke-width="0.9"/><path d="M429.5,54.5 l7,-7" stroke="#3a3a3a" stroke-width="1.3"/>
<rect x="440.3" y="46.7" width="5.8" height="5.8" fill="#f3d255" stroke="#b48a1e" stroke-width="0.8"/><rect x="443.3" y="49.7" width="5.8" height="5.8" fill="#f3d255" stroke="#b48a1e" stroke-width="0.8"/>
<rect x="452" y="46.7" width="5.8" height="5.8" fill="#f3d255" stroke="#b48a1e" stroke-width="0.8"/><rect x="455" y="49.7" width="5.8" height="5.8" fill="#f3d255" stroke="#b48a1e" stroke-width="0.8"/>
<rect x="463.6" y="46.7" width="5.8" height="5.8" fill="#f3d255" stroke="#b48a1e" stroke-width="0.8"/><rect x="466.6" y="49.7" width="5.8" height="5.8" fill="#f3d255" stroke="#b48a1e" stroke-width="0.8"/>
<rect x="475.3" y="46.7" width="5.8" height="5.8" fill="#f3d255" stroke="#b48a1e" stroke-width="0.8"/><rect x="478.3" y="49.7" width="5.8" height="5.8" fill="#f3d255" stroke="#b48a1e" stroke-width="0.8"/>
<rect x="487.4" y="47.2" width="7.6" height="7.6" fill="#f3d255" stroke="#b48a1e" stroke-width="0.9"/>
<rect x="498.6" y="46.7" width="5.8" height="5.8" fill="#f3d255" stroke="#b48a1e" stroke-width="0.8"/><rect x="501.6" y="49.7" width="5.8" height="5.8" fill="#f3d255" stroke="#b48a1e" stroke-width="0.8"/>
<rect x="510.7" y="48" width="6.5" height="6.5" fill="#f3d255" stroke="#b48a1e" stroke-width="0.8"/><path d="M513.5,53 l5,-5.5" stroke="#3a3a3a" stroke-width="1.3"/>
<rect x="521.5" y="45.5" width="4" height="8" rx="1.5" fill="#c9cfdc"/><path d="M521.9,54.2 h3.2 l-1.6,1.9z" fill="#222"/><path d="M522,53 h3" stroke="#222" stroke-width="0.6"/>
<rect x="622.5" y="45.5" width="45.5" height="11" rx="2" fill="url(#tbg)"/>
<path d="M624.5,48 v6" stroke="#9aa3b8" stroke-width="0.9" stroke-dasharray="0.9 0.9"/>
<path d="M626,54 q1,-7 3,-3 q1.5,4 3,-3.5" fill="none" stroke="#8a1c22" stroke-width="1.1"/><path d="M632,47.5 h2.5 v2" fill="none" stroke="#3a3a3a" stroke-width="0.8"/>
<path d="M637.8,54 q1,-7 3,-3 q1.5,4 3,-3.5" fill="none" stroke="#8a1c22" stroke-width="1.1"/><path d="M643.8,47.5 h2.5 v2" fill="none" stroke="#3a3a3a" stroke-width="0.8"/>
<path d="M649.6,47.5 h8" stroke="#3a3a3a" stroke-width="0.9"/><path d="M649.6,54 q2,-6 4,-2 q1.5,3 4,2" fill="none" stroke="#8a1c22" stroke-width="1.1"/>
<rect x="661.6" y="45.5" width="4" height="8" rx="1.5" fill="#c9cfdc"/><path d="M662,54.2 h3.2 l-1.6,1.9z" fill="#222"/><path d="M662.1,53 h3" stroke="#222" stroke-width="0.6"/>
<rect x="735.5" y="45.5" width="69.5" height="11" rx="2" fill="url(#tbg)"/>
<path d="M737.5,48 v6" stroke="#9aa3b8" stroke-width="0.9" stroke-dasharray="0.9 0.9"/>
<rect x="739.5" y="47.2" width="8.4" height="3" fill="#c9ccd6" stroke="#9a5a1c" stroke-width="0.7"/><path d="M740.2,50.5 v4.5 M747.2,50.5 v4.5 M742.7,51 v3 h3" stroke="#9a5a1c" stroke-width="1.1" fill="none"/>
<path d="M752.5,47 v8 M756,47 v8 M759,47 v6" stroke="#c9878a" stroke-width="1.8"/><path d="M751.5,47.5 h9" stroke="#b9bcc8" stroke-width="1.2"/>
<path d="M764,47.5 l7,2.5 l-7,2 l7,2.5" fill="none" stroke="#2f9a3c" stroke-width="1.5"/>
<path d="M776.1,47 v8 M782.6,47 v8" stroke="#3a3a3a" stroke-width="1.2"/><rect x="777.6" y="48.5" width="3.6" height="4" fill="#f3d255" stroke="#b48a1e" stroke-width="0.6"/>
<rect x="790" y="47.5" width="5" height="7" fill="#e8eaf2" stroke="#b3b8c4" stroke-width="0.9"/><circle cx="788.5" cy="53" r="2" fill="#f3d255" stroke="#3a3a3a" stroke-width="0.7"/>
<rect x="798.6" y="45.5" width="4" height="8" rx="1.5" fill="#c9cfdc"/><path d="M799,54.2 h3.2 l-1.6,1.9z" fill="#222"/><path d="M799.1,53 h3" stroke="#222" stroke-width="0.6"/>
<rect x="329" y="557.5" width="184" height="12.5" rx="2" fill="url(#tbg)"/>
<path d="M331,560 v7.5" stroke="#9aa3b8" stroke-width="0.9" stroke-dasharray="0.9 0.9"/>
<path d="M333.5,564.2 l4.5,-3.5 l4.5,2 v4 l-4.5,2 l-4.5,-1.5z M333.5,564.2 l4.5,1.5 l4.5,-3 M338,565.7 v3" fill="#f2e6e6" stroke="#b0272d" stroke-width="0.9"/>
<path d="M345,566.2 l3,-5.5 h3 l3,5.5 l-4.5,2z M348,560.7 v7.5 M351,560.7 v7" fill="#f2e6e6" stroke="#b0272d" stroke-width="0.9"/>
<path d="M357,560.7 h7 v7 h-7z M359,562.2 v6.5 M362,562.2 v6.5" fill="#f0dede" stroke="#b0272d" stroke-width="1"/>
<path d="M369.6,560.2 v5 l6,3" stroke="#b0272d" stroke-width="1.2" fill="none"/><path d="M369.6,565.2 l5,-3.5" stroke="#2f9a3c" stroke-width="1.2"/>
<path d="M384.1,565.7 v-6" stroke="#2f9a3c" stroke-width="1.2"/><path d="M384.1,565.7 l-4,2.5 M384.1,565.7 l4.5,2" stroke="#b0272d" stroke-width="1.2"/>
<path d="M395.6,565.7 v-6" stroke="#2b4fb8" stroke-width="1.2"/><path d="M395.6,565.7 l-4,2.5 M395.6,565.7 l4.5,2" stroke="#b0272d" stroke-width="1.2"/>
<path d="M402.8,562.2 l2.5,-2.3 h6 v6 l-2.5,2.5 h-6z" fill="#f3d255" stroke="#b48a1e" stroke-width="0.7"/><path d="M402.8,562.2 h6 v6.2 M408.8,562.2 l2.5,-2.3" fill="none" stroke="#b48a1e" stroke-width="0.7"/>
<path d="M414.3,562.2 l2.5,-2.3 h6 v6 l-2.5,2.5 h-6z" fill="#f3d255" stroke="#b48a1e" stroke-width="0.7"/><path d="M414.3,562.2 h6 v6.2 M420.3,562.2 l2.5,-2.3" fill="none" stroke="#b48a1e" stroke-width="0.7"/>
<path d="M425.9,562.2 l2.5,-2.3 h6 v6 l-2.5,2.5 h-6z" fill="#e9e2b4" stroke="#b48a1e" stroke-width="0.7"/><path d="M425.9,562.2 h6 v6.2 M431.9,562.2 l2.5,-2.3" fill="none" stroke="#b48a1e" stroke-width="0.7"/><rect x="426.7" y="563" width="2.5" height="4.6" fill="#f3d255"/>
<path d="M437.4,562.2 l2.5,-2.3 h6 v6 l-2.5,2.5 h-6z" fill="#e9e2b4" stroke="#b48a1e" stroke-width="0.7"/><path d="M437.4,562.2 h6 v6.2 M443.4,562.2 l2.5,-2.3" fill="none" stroke="#b48a1e" stroke-width="0.7"/><rect x="438.2" y="563" width="2.5" height="4.6" fill="#f3d255"/>
<path d="M448.9,562.2 l2.5,-2.3 h6 v6 l-2.5,2.5 h-6z" fill="#e9e2b4" stroke="#b48a1e" stroke-width="0.7"/><path d="M448.9,562.2 h6 v6.2 M454.9,562.2 l2.5,-2.3" fill="none" stroke="#b48a1e" stroke-width="0.7"/><rect x="449.7" y="563" width="2.5" height="4.6" fill="#f3d255"/>
<path d="M460.4,562.2 l2.5,-2.3 h6 v6 l-2.5,2.5 h-6z" fill="#e9e2b4" stroke="#b48a1e" stroke-width="0.7"/><path d="M460.4,562.2 h6 v6.2 M466.4,562.2 l2.5,-2.3" fill="none" stroke="#b48a1e" stroke-width="0.7"/><rect x="461.2" y="563" width="2.5" height="4.6" fill="#f3d255"/>
<path d="M476.2,565.7 v-6 M476.2,565.7 l-4,2.5 M476.2,565.7 l4.5,2" stroke="#b3b8c4" stroke-width="1" fill="none"/>
<rect x="484" y="560.4" width="7.6" height="7.6" fill="#f3d255" stroke="#b48a1e" stroke-width="0.9"/>
<circle cx="499.8" cy="561.7" r="1.7" fill="#777c88"/><path d="M495.8,568.2 q0.5,-4.5 4,-4.5 q3.5,0 3.5,4.5z" fill="#777c88"/><path d="M495.3,565.2 l3,-3" stroke="#3a3a3a" stroke-width="1.1"/>
<rect x="506.5" y="558.7" width="4" height="8" rx="1.5" fill="#c9cfdc"/><path d="M506.9,567.4 h3.2 l-1.6,1.9z" fill="#222"/><path d="M507,566.2 h3" stroke="#222" stroke-width="0.6"/>
<rect x="514.5" y="557.5" width="181.5" height="12.5" rx="2" fill="url(#tbg)"/>
<path d="M516.5,560 v7.5" stroke="#9aa3b8" stroke-width="0.9" stroke-dasharray="0.9 0.9"/>
<path d="M518,561.7 l2,-1.5 h5.5 v6.5 l-2,1.5 h-5.5z" fill="#f5e9e9" stroke="#b0272d" stroke-width="1.1"/>
<path d="M529,568.2 v-7 h3" fill="none" stroke="#2f9a3c" stroke-width="1.1"/><path d="M531,562.2 l6,5.5 l-2,-5z" fill="#b0272d"/>
<rect x="540.6" y="560.8" width="8" height="6.8" fill="#d9454b" stroke="#b0272d" stroke-width="1.1"/>
<rect x="552.3" y="560.9" width="5.5" height="5" fill="#eef0f6" stroke="#b3b8c4" stroke-width="0.9"/><rect x="554.9" y="563.2" width="5" height="4.6" fill="#e4e7f0" stroke="#b3b8c4" stroke-width="0.9"/>
<path d="M564.2,565.2 a3.5,3.5 0 1 1 7,0" fill="none" stroke="#b3b8c4" stroke-width="1.3"/><path d="M566.2,565.2 v3.5 h3" fill="none" stroke="#b3b8c4" stroke-width="0.9"/>
<path d="M575.7,565.2 a3.5,3.5 0 1 1 7,0" fill="none" stroke="#b3b8c4" stroke-width="1.3"/><path d="M577.7,565.2 v3.5 h3" fill="none" stroke="#b3b8c4" stroke-width="0.9"/>
<rect x="586.9" y="560.9" width="5.5" height="5" fill="#eef0f6" stroke="#b3b8c4" stroke-width="0.9"/><rect x="589.5" y="563.2" width="5" height="4.6" fill="#e4e7f0" stroke="#b3b8c4" stroke-width="0.9"/>
<rect x="598.5" y="560.9" width="5.5" height="5" fill="#eef0f6" stroke="#b3b8c4" stroke-width="0.9"/><rect x="601.1" y="563.2" width="5" height="4.6" fill="#e4e7f0" stroke="#b3b8c4" stroke-width="0.9"/>
<path d="M609.8,562.7 h8 M609.8,565.7 h8 M611.8,567.7 l4,-7" fill="none" stroke="#b3b8c4" stroke-width="1"/>
<path d="M621.4,567.7 h8 M626.4,567.7 v-7" fill="none" stroke="#b3b8c4" stroke-width="1.1"/>
<rect x="633.1" y="560.9" width="5.5" height="5" fill="#eef0f6" stroke="#b3b8c4" stroke-width="0.9"/><rect x="635.7" y="563.2" width="5" height="4.6" fill="#e4e7f0" stroke="#b3b8c4" stroke-width="0.9"/>
<path d="M643.9,562.7 l2,-2.5 h5 l2,2.5 l-4.5,5.5z" fill="#b0272d" stroke="#8a1c22" stroke-width="0.6"/><path d="M646.4,561.2 l2,2.5 l2,-2.5" fill="none" stroke="#e88" stroke-width="0.6"/>
<rect x="656.2" y="560.9" width="5.5" height="5" fill="#eef0f6" stroke="#b3b8c4" stroke-width="0.9"/><rect x="658.8" y="563.2" width="5" height="4.6" fill="#e4e7f0" stroke="#b3b8c4" stroke-width="0.9"/>
<rect x="667.7" y="560.9" width="5.5" height="5" fill="#eef0f6" stroke="#b3b8c4" stroke-width="0.9"/><rect x="670.3" y="563.2" width="5" height="4.6" fill="#e4e7f0" stroke="#b3b8c4" stroke-width="0.9"/>
<path d="M679.6,560.2 h3 v4 l5,3.5 l-1.5,1 l-5,-2.5 h-1.5z" fill="#b0272d"/><path d="M679.6,560.2 h3 v2.5 h-3z" fill="#d18a24"/>
<rect x="690" y="558.7" width="4" height="8" rx="1.5" fill="#c9cfdc"/><path d="M690.4,567.4 h3.2 l-1.6,1.9z" fill="#222"/><path d="M690.5,566.2 h3" stroke="#222" stroke-width="0.6"/>
<rect x="698" y="557.5" width="138" height="12.5" rx="2" fill="url(#tbg)"/>
<path d="M700,560 v7.5" stroke="#9aa3b8" stroke-width="0.9" stroke-dasharray="0.9 0.9"/>
<path d="M703.5,560.2 h3 v5 h4 v3 h-8.5 v-3 h1.5z" fill="#e6c53a" stroke="#b48a1e" stroke-width="0.7"/>
<circle cx="717.6" cy="564.2" r="4" fill="#d9a3a0" stroke="#8a1c22" stroke-width="1.1"/><circle cx="717.6" cy="564.2" r="1.8" fill="none" stroke="#8a1c22" stroke-width="0.5"/>
<rect x="725.2" y="560.2" width="6" height="6" fill="#8b8f9a" stroke="#3a3a3a" stroke-width="0.7"/><rect x="727.2" y="562.2" width="6" height="6" rx="1" fill="#f3f4f8" stroke="#3a3a3a" stroke-width="0.9"/>
<rect x="736.8" y="560.2" width="6.5" height="5.5" rx="1" fill="#8b8f9a" stroke="#3a3a3a" stroke-width="0.7"/><rect x="738.8" y="562.2" width="6" height="5" rx="1" fill="#f3f4f8" stroke="#3a3a3a" stroke-width="0.9"/><path d="M739.8,568.7 h3 l-1.5,-2z" fill="#3a3a3a"/>
<path d="M748.4,561.7 h8 M748.4,564.2 h8 M748.4,566.7 h8" stroke="#b3b8c4" stroke-width="0.9" stroke-dasharray="2.5 0.8"/>
<path d="M760,568.2 h6" stroke="#b3b8c4" stroke-width="0.9"/><path d="M762,566.2 l5.5,-6" stroke="#b0272d" stroke-width="1.3"/>
<path d="M771.6,565.2 l4,-4.5 l4,2.5 l-4,5 h-2.5z" fill="#f3dede" stroke="#b0272d" stroke-width="1"/><path d="M773.6,563 l4,2.5" stroke="#b0272d" stroke-width="0.9"/>
<path d="M783.2,560.7 h8 M783.2,567.7 h8" stroke="#b0272d" stroke-width="1.5"/><path d="M784.7,564.2 h5" stroke="#f3d255" stroke-width="2.2"/><path d="M783.7,562.7 l2,1.5 l-2,1.5 M790.7,562.7 l-2,1.5 l2,1.5" stroke="#b0272d" stroke-width="0.9" fill="none"/>
<circle cx="797" cy="562.2" r="2.1" fill="none" stroke="#b0272d" stroke-width="1.1"/><circle cx="797" cy="566.5" r="2.1" fill="none" stroke="#b0272d" stroke-width="1.1"/><circle cx="801.4" cy="562.2" r="2.1" fill="none" stroke="#b3b8c4" stroke-width="0.9"/>
<circle cx="808.2" cy="562" r="2" fill="none" stroke="#b0272d" stroke-width="1.1"/><circle cx="808.2" cy="566.4" r="2" fill="none" stroke="#b0272d" stroke-width="1.1"/><circle cx="812.6" cy="562" r="2" fill="none" stroke="#b0272d" stroke-width="1.1"/><circle cx="812.6" cy="566.4" r="2" fill="none" stroke="#b0272d" stroke-width="1.1"/>
<rect x="818" y="560.2" width="8" height="8" fill="#f5e4e0" stroke="#b0272d" stroke-width="1.2"/><path d="M820.5,562.2 v4 h3.5" fill="none" stroke="#b0272d" stroke-width="1.1"/><path d="M818,568.8 h8" stroke="#f3d255" stroke-width="1"/>
<rect x="829.5" y="558.7" width="4" height="8" rx="1.5" fill="#c9cfdc"/><path d="M829.9,567.4 h3.2 l-1.6,1.9z" fill="#222"/><path d="M830,566.2 h3" stroke="#222" stroke-width="0.6"/>
<rect x="0" y="61" width="13" height="161" rx="2" fill="url(#tbgv)"/>
<path d="M2.5,63 h8" stroke="#9aa3b8" stroke-width="0.9" stroke-dasharray="0.9 0.9"/>
<path d="M3.6,66.8 h4 l2.2,2.2 v6.2 h-6.2z" fill="#fbfbfd" stroke="#8a8f9c" stroke-width="0.8"/><path d="M7.6,66.8 v2.2 h2.2" fill="none" stroke="#8a8f9c" stroke-width="0.6"/>
<path d="M2.3,86 v-6.5 h3 l1,1 h4 v1.5" fill="#e8b93c" stroke="#8a6a14" stroke-width="0.7"/><path d="M2.3,86 l1.8,-4.3 h7 l-1.8,4.3z" fill="#f8dc6a" stroke="#8a6a14" stroke-width="0.7"/><path d="M7.6,78.9 q2,-1.2 3,0.6" stroke="#7a1f1f" stroke-width="0.8" fill="none"/>
<rect x="2.6" y="89.9" width="8" height="8" fill="#2e2e38" /><rect x="4.2" y="90.5" width="4.8" height="2.8" fill="#e8e8f0"/><rect x="4" y="94.7" width="5.2" height="3.2" fill="#cfd3df"/>
<rect x="2.6" y="104.4" width="8" height="5" fill="#f3f3f6" stroke="#444" stroke-width="0.8"/><path d="M2.6,106.6 h8 M6.1,104.4 v5" stroke="#444" stroke-width="0.7"/><path d="M3.1,101.4 h6 l-1.5,2.5 h-4.5z" fill="#f0c838" stroke="#8a6a14" stroke-width="0.6"/><path d="M7.6,103.2 l2.5,-1.5" stroke="#b0272d" stroke-width="1"/>
<rect x="2.6" y="115.8" width="8" height="5" fill="#f3f3f6" stroke="#444" stroke-width="0.8"/><path d="M2.6,118 h8 M6.1,115.8 v5" stroke="#444" stroke-width="0.7"/><path d="M3.1,112.8 h6 l-1.5,2.5 h-4.5z" fill="#f0c838" stroke="#8a6a14" stroke-width="0.6"/><path d="M7.6,114.6 l2.5,-1.5" stroke="#b0272d" stroke-width="1"/>
<rect x="2.6" y="127.3" width="8" height="5" fill="#f3f3f6" stroke="#444" stroke-width="0.8"/><path d="M2.6,129.5 h8 M6.1,127.3 v5" stroke="#444" stroke-width="0.7"/><path d="M3.1,124.3 h6 l-1.5,2.5 h-4.5z" fill="#f0c838" stroke="#8a6a14" stroke-width="0.6"/><path d="M7.6,126.1 l2.5,-1.5" stroke="#b0272d" stroke-width="1"/>
<path d="M2.6,136.8 l7,6 M10.1,136.3 l-7,6.5" stroke="#a01c24" stroke-width="2"/><path d="M7.6,140.8 l3,2.5" stroke="#333" stroke-width="1.4"/>
<rect x="4" y="147" width="5.2" height="3" fill="#fafafa" stroke="#333" stroke-width="0.8"/><rect x="2.3" y="149.7" width="8.6" height="4" rx="0.8" fill="#3b3f4a"/><rect x="4" y="152.2" width="5.2" height="3" fill="#fafafa" stroke="#333" stroke-width="0.8"/>
<rect x="3" y="158.5" width="6" height="7.6" fill="#fafafa" stroke="#444" stroke-width="0.8"/><circle cx="6.9" cy="162.7" r="2.3" fill="#e6ecf6" stroke="#333" stroke-width="0.9"/><path d="M8.6,164.5 l2.3,2.4" stroke="#333" stroke-width="1.3"/>
<rect x="2.6" y="170.9" width="8" height="6.4" rx="1.5" fill="#e9a23a" stroke="#a8641a" stroke-width="0.7"/><path d="M4.1,174.1 h5 M5.6,172.3 l-1.8,1.8 l1.8,1.8" stroke="#7a2a16" stroke-width="0.9" fill="none"/>
<rect x="2.6" y="181.6" width="5.5" height="4.5" fill="#f3f3f6" stroke="#333" stroke-width="0.9"/><rect x="5.1" y="185.1" width="5.5" height="4.5" fill="#f3f3f6" stroke="#333" stroke-width="0.9"/><path d="M3.6,187.6 v2 h1.5" stroke="#a01c24" stroke-width="0.9" fill="none"/>
<path d="M2.6,201.1 h8 v-6z" fill="#d7dae3" stroke="#a8aebb" stroke-width="0.6"/><path d="M3.1,193.6 v3 h3" stroke="#b0272d" stroke-width="1.2" fill="none"/>
<path d="M2.6,212.5 h8 v-6z" fill="#d7dae3" stroke="#a8aebb" stroke-width="0.6"/><path d="M5.6,206 h4 M9.6,204.5 v3" stroke="#b0272d" stroke-width="1.2" fill="none"/>
<rect x="1" y="216.9" width="9" height="3.6" rx="1.5" fill="#c9cfdc"/><path d="M10.5,217.2 v3 l1.8,-1.5z" fill="#222"/>
<rect x="0" y="228" width="13" height="124" rx="2" fill="url(#tbgv)"/>
<path d="M2.5,230 h8" stroke="#9aa3b8" stroke-width="0.9" stroke-dasharray="0.9 0.9"/>
<circle cx="6.1" cy="233.5" r="2.1" fill="none" stroke="#333" stroke-width="1"/><path d="M3.1,239.5 q0.5,-3.5 3,-3.5 q2.5,0 3,3.5" fill="none" stroke="#333" stroke-width="1"/><path d="M8.1,236 l3,3 M11.1,236 l-3,3" stroke="#222" stroke-width="1"/>
<circle cx="6.1" cy="245.1" r="2.1" fill="none" stroke="#333" stroke-width="1"/><path d="M3.1,251.1 q0.5,-3.5 3,-3.5 q2.5,0 3,3.5" fill="none" stroke="#333" stroke-width="1"/><rect x="7.6" y="247.6" width="3.5" height="3.5" fill="#fff" stroke="#222" stroke-width="0.8"/>
<circle cx="6.1" cy="256.6" r="2.1" fill="none" stroke="#b3b8c4" stroke-width="1"/><path d="M3.1,262.6 q0.5,-3.5 3,-3.5 q2.5,0 3,3.5" fill="none" stroke="#b3b8c4" stroke-width="1"/>
<path d="M6.6,265.6 v9 M2.1,270.1 h9" stroke="#b0272d" stroke-width="1.3"/><path d="M5,267.1 l1.6,-1.8 l1.6,1.8 M5,273.1 l1.6,1.8 l1.6,-1.8 M3.6,268.5 l-1.8,1.6 l1.8,1.6 M9.6,268.5 l1.8,1.6 l-1.8,1.6" stroke="#b0272d" stroke-width="1" fill="none"/>
<circle cx="5.1" cy="280.2" r="2.2" fill="#c9474c" stroke="#7a1a1f" stroke-width="0.7"/><circle cx="8.4" cy="283.5" r="2.2" fill="#d98a8e" stroke="#333" stroke-width="0.7"/>
<rect x="0.8" y="287.6" width="11.6" height="11.2" fill="#c4dcf4" stroke="#3f7fc8" stroke-width="0.8"/><circle cx="5.1" cy="291.8" r="1.8" fill="none" stroke="#2a5a9a" stroke-width="0.9"/><circle cx="8.6" cy="292.2" r="1.5" fill="none" stroke="#2a5a9a" stroke-width="0.9"/><path d="M2.6,296.8 q4,-3 8,0" fill="none" stroke="#333" stroke-width="1"/>
<circle cx="5.6" cy="303.8" r="2.6" fill="none" stroke="#333" stroke-width="1"/><circle cx="8.1" cy="306.3" r="2.4" fill="none" stroke="#b0272d" stroke-width="1"/>
<path d="M3.1,319.9 l7,-7" stroke="#b0272d" stroke-width="1.5"/><path d="M10.9,312.1 l-3.3,0.6 l2.7,2.7z M2.3,320.7 l3.3,-0.6 l-2.7,-2.7z" fill="#b0272d"/>
<circle cx="6.1" cy="325.9" r="2.1" fill="none" stroke="#7a1a1f" stroke-width="1"/><path d="M3.1,331.9 q0.5,-3.5 3,-3.5 q2.5,0 3,3.5" fill="none" stroke="#7a1a1f" stroke-width="1"/><path d="M7.6,329.9 h3.5" stroke="#7a1a1f" stroke-width="1"/>
<circle cx="6.1" cy="337.4" r="2.1" fill="none" stroke="#333" stroke-width="1"/><path d="M3.1,343.4 q0.5,-3.5 3,-3.5 q2.5,0 3,3.5" fill="none" stroke="#333" stroke-width="1"/><path d="M7.6,341.4 l2,1.8 l1.5,-3" stroke="#333" stroke-width="0.9" fill="none"/>
<rect x="1" y="346.8" width="9" height="3.6" rx="1.5" fill="#c9cfdc"/><path d="M10.5,347.1 v3 l1.8,-1.5z" fill="#222"/>
<rect x="0" y="369.5" width="13" height="79.5" rx="2" fill="url(#tbgv)"/>
<path d="M2.5,371.5 h8" stroke="#9aa3b8" stroke-width="0.9" stroke-dasharray="0.9 0.9"/>
<path d="M3.1,374.4 l2,-0.5 l5.5,6 l-1.5,1.5 l-6,-5.5z" fill="#eceef4" stroke="#9aa0ae" stroke-width="0.8"/>
<rect x="5" y="384.9" width="3.2" height="4" fill="#e9c13c" stroke="#6a5210" stroke-width="0.6"/><path d="M5.4,388.9 h2.4 l-0.4,5 h-1.6z" fill="#4a4a52"/>
<path d="M2.6,398 h6 a3,3 0 0 1 0,6 h-6 v-2 h5.5 a1,1 0 0 0 0,-2 h-5.5z" fill="#e9b83a" stroke="#5a4a10" stroke-width="0.7"/><rect x="2.6" y="398" width="2" height="2" fill="#444"/><rect x="2.6" y="402" width="2" height="2" fill="#444"/>
<path d="M3.1,416 l7,-7" stroke="#b0272d" stroke-width="1.5"/><path d="M10.9,408.2 l-3.3,0.6 l2.7,2.7z M2.3,416.8 l3.3,-0.6 l-2.7,-2.7z" fill="#b0272d"/>
<circle cx="6.6" cy="424.1" r="4" fill="#f0f1f5" stroke="#9aa0ae" stroke-width="0.8"/><path d="M2.6,424.1 h8 M6.6,420.1 v8 M3.8,421.3 l5.6,5.6" stroke="#9aa0ae" stroke-width="0.6"/>
<path d="M3.6,439.6 v-7 h6.5" fill="none" stroke="#b0272d" stroke-width="1.7"/>
<rect x="1" y="443.6" width="9" height="3.6" rx="1.5" fill="#c9cfdc"/><path d="M10.5,443.9 v3 l1.8,-1.5z" fill="#222"/>
<rect x="986.5" y="60" width="13.5" height="287.5" rx="2" fill="url(#tbgv)"/>
<path d="M989,62 h8.5" stroke="#9aa3b8" stroke-width="0.9" stroke-dasharray="0.9 0.9"/>
<rect x="991" y="64" width="3.4" height="5" fill="#f3d255" stroke="#6a5210" stroke-width="0.6"/><path d="M991.7,69 h2 l-1,4z" fill="#3a3a3a"/><path d="M995.7,67.5 h2" stroke="#3a3a3a" stroke-width="0.9"/>
<path d="M993.2,75.6 v5" stroke="#b0272d" stroke-width="1.3"/><path d="M989.2,80.1 q4,6 8,0" fill="none" stroke="#b0272d" stroke-width="1.6"/><path d="M991.2,80.6 h4 l-2,2.5z" fill="#b0272d"/>
<path d="M989.2,95.6 v-3 a4,4.5 0 0 1 8,0 v3 h-2.5 v-3 a1.5,1.8 0 0 0 -3,0 v3z" fill="#d18a24" stroke="#3a3a3a" stroke-width="0.7"/>
<rect x="988.9" y="98.9" width="8.6" height="8.6" fill="#e3b1b1" stroke="#8a1c22" stroke-width="0.8"/><rect x="991" y="101" width="4.6" height="4.6" fill="#8a1c22"/>
<path d="M989.2,111.8 l3,6 l5,-2" fill="none" stroke="#3a3a3a" stroke-width="1.2"/><path d="M993.2,110.8 l3,3" stroke="#f3d255" stroke-width="1.8"/><path d="M990.2,115.8 l4,2" stroke="#3a3a3a" stroke-width="1"/>
<rect x="989" y="122.5" width="8.4" height="7.6" fill="#e4e7ef" stroke="#b3b8c4" stroke-width="0.9"/><rect x="990.7" y="124.3" width="3.5" height="3" fill="none" stroke="#b0272d" stroke-width="0.7"/>
<path d="M989.2,141.4 h8" stroke="#b0272d" stroke-width="1.3"/><path d="M990.2,138.9 q0,-4 3,-4.5" stroke="#f3d255" stroke-width="2" fill="none"/><circle cx="990.7" cy="135.4" r="1.5" fill="#f3d255" stroke="#6a5210" stroke-width="0.5"/>
<path d="M996.2,147.5 a3.5,3.5 0 1 0 0.5,3 M994.2,149.5 a1.5,1.5 0 1 0 -2,1.5" fill="none" stroke="#b0272d" stroke-width="1.4"/><path d="M994.7,145 l3,2.5 l-3.5,1z" fill="#b0272d"/>
<rect x="989.2" y="157.1" width="8" height="8" fill="#eef0f5" stroke="#3a3a3a" stroke-width="1"/><path d="M989.7,164.6 l7,-7" stroke="#3a3a3a" stroke-width="1"/><path d="M994.2,158.1 l2,2" stroke="#b0272d" stroke-width="1"/>
<rect x="989.7" y="169.6" width="4.5" height="7" fill="#f3e3e0" stroke="#b0272d" stroke-width="0.9"/><path d="M992.2,168.1 v3 h5 M995.2,169.6 l2,1.5 l-2,1.5" stroke="#b0272d" stroke-width="0.9" fill="none"/>
<circle cx="993.2" cy="184.2" r="4.2" fill="#b8383c" stroke="#6a1216" stroke-width="0.7"/><circle cx="992.7" cy="183.7" r="1.8" fill="#e08a88"/>
<path d="M989.7,192.3 l2.5,7 l4.5,-6" fill="none" stroke="#b0272d" stroke-width="1.5"/><circle cx="989.9" cy="192.5" r="1.2" fill="#d18a24"/>
<path d="M988.9,211.1 v-5 h8.6 v5z" fill="#f3d255" stroke="#4a3a08" stroke-width="0.7"/><path d="M991.2,206.1 v-3 h4" stroke="#3a3a3a" stroke-width="1.2" fill="none"/>
<path d="M989.7,222.4 q4,-0.5 3.5,-3.5 q-0.5,-3 3,-4" fill="none" stroke="#b9bfcc" stroke-width="1.5"/><path d="M989.7,222.7 h6" stroke="#cfd3dd" stroke-width="0.9"/>
<path d="M989.7,234 q4,-0.5 3.5,-3.5 q-0.5,-3 3,-4" fill="none" stroke="#b9bfcc" stroke-width="1.5"/><path d="M989.7,234.3 h6" stroke="#cfd3dd" stroke-width="0.9"/>
<path d="M989.7,245.6 q4,-0.5 3.5,-3.5 q-0.5,-3 3,-4" fill="none" stroke="#b9bfcc" stroke-width="1.5"/><path d="M989.7,245.9 h6" stroke="#cfd3dd" stroke-width="0.9"/>
<path d="M989.2,257.1 h8" stroke="#b0272d" stroke-width="1.3"/><path d="M990.2,254.6 q0,-4 3,-4.5" stroke="#f3d255" stroke-width="2" fill="none"/><circle cx="990.7" cy="251.1" r="1.5" fill="#f3d255" stroke="#6a5210" stroke-width="0.5"/>
<rect x="990.2" y="261.2" width="5" height="4" fill="#f3d255" stroke="#6a5210" stroke-width="0.6"/><path d="M989.2,268.7 h7 v-3" stroke="#b0272d" stroke-width="1.2" fill="none"/>
<path d="M989.4,273 v7.6 h7.6 v-7.6" fill="none" stroke="#b0272d" stroke-width="1.4"/><path d="M989.4,273 h7.6" stroke="#d9a0a0" stroke-width="0.9"/>
<path d="M989.2,285.3 l3,6 l5,-2" fill="none" stroke="#3a3a3a" stroke-width="1.2"/><path d="M993.2,284.3 l3,3" stroke="#f3d255" stroke-width="1.8"/><path d="M990.2,289.3 l4,2" stroke="#3a3a3a" stroke-width="1"/>
<rect x="989.7" y="297.9" width="6" height="6" fill="#f3f3f6" stroke="#3a3a3a" stroke-width="0.9"/><path d="M989.2,295.9 h5" stroke="#f3d255" stroke-width="1.8"/>
<path d="M989.7,315.5 l7,-8 M989.7,308.5 l7,6.5" stroke="#3a3a3a" stroke-width="1.1"/><circle cx="990.2" cy="315" r="1.3" fill="#f3d255"/><circle cx="996.2" cy="308" r="1.3" fill="#f3d255"/>
<path d="M989.2,319 h3.2 v3.2 h-3.2z M994,319 h3.2 v3.2 h-3.2z M989.2,323.8 h3.2 v3.2 h-3.2z M994,323.8 h3.2 v3.2 h-3.2z" fill="#3b3f4a"/>
<path d="M990.2,331.6 l3,3 l-2,2 M993.2,334.6 h3.5" fill="none" stroke="#b0272d" stroke-width="1.1"/>
<rect x="987" y="342.2" width="9" height="3.6" rx="1.5" fill="#c9cfdc"/><path d="M996.5,342.5 v3 l1.8,-1.5z" fill="#222"/>
<rect x="967" y="63.2" width="11.8" height="10.6" fill="#8c8c8c" stroke="#6a6a6a" stroke-width="0.5"/><path d="M970.2,65.8 l5.4,5.4 M975.6,65.8 l-5.4,5.4" stroke="#fff" stroke-width="1.3"/>
<rect x="967" y="74.6" width="11.8" height="12.4" fill="#dfe3ec" stroke="#9aa3b5" stroke-width="0.5"/><rect x="969" y="77" width="3.4" height="4.2" fill="#c8323a"/><rect x="972" y="76.4" width="3.8" height="5" fill="#f0c838" stroke="#8a6a14" stroke-width="0.4"/><path d="M969,83 h6 l1.5,-1.6 v2.6 l-1.5,1.2 h-6z" fill="#f6f6fa" stroke="#555" stroke-width="0.5"/>
<rect x="54.2" y="73" width="12" height="10.8" fill="#c9def5"/>
<rect x="44.2" y="74.2" width="3" height="4" fill="#c8323a"/><rect x="47" y="74" width="3.6" height="5.4" fill="#f0c838" stroke="#8a6a14" stroke-width="0.4"/><path d="M43.2,80.6 h6.5 l2,-2 v3 l-2,1.6 h-6.5z" fill="#f6f6fa" stroke="#666" stroke-width="0.6"/>
<path d="M56.3,74.6 l3,2 l-3,2z" fill="#c8323a"/><rect x="59.5" y="74" width="3.8" height="5.4" fill="#f0c838" stroke="#8a6a14" stroke-width="0.4"/><path d="M59.3,74.6 v5 M61.3,74.6 v5" stroke="#c8323a" stroke-width="0.7"/><path d="M55.9,80.6 h6.5 l2,-2 v3 l-2,1.6 h-6.5z" fill="#f6f6fa" stroke="#666" stroke-width="0.6"/>
<rect x="69.3" y="76.2" width="5" height="5" fill="#c3c3c3"/>
<path d="M80.8,75.3 v6.6 l5.2,-3.3z" fill="#000"/>
<path d="M94,76 v5.2 M97,76 v5.2" stroke="#c6c6c6" stroke-width="1.3"/>
<rect x="101.8" y="73" width="13.4" height="10.8" fill="#b9d7f5"/>
<rect x="107" y="74.6" width="2.6" height="3.6" fill="#b9b9a8" stroke="#777" stroke-width="0.4"/><path d="M107.3,78.2 h2 l-0.3,4 h-1.4z" fill="#8a8a80"/>
<rect x="116" y="73.4" width="9.2" height="10.2" fill="#d4e6f8" stroke="#4a4a4a" stroke-width="0.9"/><path d="M118.6,76.6 v4 l3,-2z M122.2,76.6 v4" fill="#111" stroke="#111" stroke-width="0.8"/><path d="M117.5,82 h2 M121.5,82 h2" stroke="#333" stroke-width="0.7"/>
<path d="M128.4,74.8 v4.6 l3.4,-2.3z" fill="#111"/><path d="M133.2,74.8 v4.6 M135.2,74.8 v4.6" stroke="#111" stroke-width="1.1"/><circle cx="129.2" cy="81.6" r="0.9" fill="none" stroke="#333" stroke-width="0.5"/><circle cx="135" cy="81.6" r="0.9" fill="none" stroke="#333" stroke-width="0.5"/><path d="M130.2,81.6 h3.8" stroke="#333" stroke-width="0.5"/>
<rect x="141" y="74.2" width="2.4" height="4.6" fill="#e0b030" stroke="#5a4a10" stroke-width="0.4"/><path d="M141.2,78.8 h2 l-1,2.6z" fill="#333"/><path d="M143.6,82.6 l1.6,-3 l1.6,3z" fill="#c8323a"/><circle cx="146.8" cy="81.6" r="1.2" fill="#3a5fb8"/>
<path d="M20.5,97.9 H170" stroke="#d9d9d9" stroke-width="1.6"/>
<path d="M23,90.3 H170" stroke="#d4d4d4" stroke-width="0.9" stroke-dasharray="0.9 6.3"/><path d="M23,107 H170" stroke="#d4d4d4" stroke-width="0.9" stroke-dasharray="0.9 6.3"/>
<rect x="155.8" y="91.7" width="7.4" height="13.9" fill="#0078d7"/>
<path d="M87,118.4 v4.2 l-3.2,-2.1z M83.8,118.4 v4.2 l-3.2,-2.1z" fill="#000"/>
<rect x="93.2" y="118.2" width="5.4" height="1.8" fill="#000"/><rect x="93.2" y="121" width="5.4" height="1.8" fill="#000"/>
<path d="M104.6,118.4 v4.2 l3.2,-2.1z M107.8,118.4 v4.2 l3.2,-2.1z" fill="#000"/>
<path d="M68.8,131.4 h6.6 l0.8,-1 v5 l-0.8,1 h-6.6z" fill="#c8454c" stroke="#8a1c22" stroke-width="0.5"/><path d="M70.5,133 l3,2 M73.5,133 l-3,2" stroke="#fff" stroke-width="0.6"/>
<path d="M80,136 l1.5,-3 l2.5,-1 l1,1.5 l2.5,-2 l0.5,3.5 l-1.5,1z" fill="#c8454c" stroke="#8a1c22" stroke-width="0.5"/><path d="M80,136.6 h7.5" stroke="#999" stroke-width="0.6"/>
<path d="M92,136 l1.5,-3 l2.5,-1 l1,1.5 l2.5,-2 l0.5,3.5 l-1.5,1z" fill="#e2e2e6" stroke="#c2c2c8" stroke-width="0.5"/>
<rect x="104" y="129.8" width="7.6" height="8" fill="#33333d"/><rect x="105.6" y="130.3" width="4.4" height="2.8" fill="#ece8f2"/><rect x="105.4" y="134.6" width="4.8" height="3.2" fill="#bfa8d8"/>
<rect x="116.2" y="130" width="7.2" height="7.6" fill="#3f9a3f" stroke="#c9a018" stroke-width="0.9"/><rect x="116.8" y="130.4" width="6" height="2" fill="#c8323a"/><rect x="117.6" y="133.6" width="2.4" height="2.4" fill="#e8e8e8"/>
<rect x="106.4" y="141.6" width="36.2" height="14.3" fill="#fff" stroke="#7a7a7a" stroke-width="0.7"/>
<rect x="48.2" y="162.3" width="95.8" height="85.7" fill="none" stroke="#dcdcdc" stroke-width="0.7"/><rect x="51" y="158" width="40" height="8" fill="#f0f0f0"/>
<rect x="59.3" y="173.5" width="3.2" height="54.6" fill="#e9e9e9" stroke="#dcdcdc" stroke-width="0.5"/>
<rect x="53.8" y="173.7" width="14.3" height="7.4" fill="#0078d7"/>
<rect x="77.4" y="173.5" width="3.2" height="54.6" fill="#e9e9e9" stroke="#dcdcdc" stroke-width="0.5"/>
<rect x="71.8" y="173.7" width="14.3" height="7.4" fill="#0078d7"/>
<rect x="95.8" y="173.5" width="3.2" height="54.6" fill="#e9e9e9" stroke="#dcdcdc" stroke-width="0.5"/>
<rect x="90.2" y="201.4" width="14.3" height="7.4" fill="#0078d7"/>
<rect x="114" y="173.5" width="3.2" height="54.6" fill="#e9e9e9" stroke="#dcdcdc" stroke-width="0.5"/>
<rect x="108.4" y="173.7" width="14.3" height="7.4" fill="#0078d7"/>
<rect x="132.2" y="173.5" width="3.2" height="54.6" fill="#e9e9e9" stroke="#dcdcdc" stroke-width="0.5"/>
<rect x="126.6" y="173.7" width="14.3" height="7.4" fill="#0078d7"/>
<path d="M54.5,242.5 l2,-3.5 h6 l-2,3.5z" fill="#fbfbfb" stroke="#555" stroke-width="0.7"/><path d="M60.5,242.5 v1 h-6 v-1" fill="none" stroke="#555" stroke-width="0.6"/>
<path d="M74,243.5 l4.5,-5 l1.6,1.4 l-4.5,5z" fill="#f0c838" stroke="#9a6a14" stroke-width="0.7"/><path d="M74.5,239 l1.2,1.2 M78.5,243 l1,1" stroke="#c8641a" stroke-width="0.8"/>
<path d="M93.4,236.6 h2.4 v5.6 a1.2,1.2 0 0 1 -2.4,0z" fill="#f4d23c" stroke="#9a6a14" stroke-width="0.7"/>
<path d="M109.6,237.6 h7.4 l-1,3 h-1.2 v2 h-3 v-2 h-1.2z" fill="#4a4a52" stroke="#222" stroke-width="0.4"/><path d="M110.6,238.4 h5.4" stroke="#9a9aa6" stroke-width="0.7"/>
<path d="M130.6,236.4 h1.8 v3.6 l1.8,1 v1.6 h-5.4 v-1.6 l1.8,-1z" fill="#b9bcc6" stroke="#777" stroke-width="0.5"/><path d="M128,243.4 h7" stroke="#888" stroke-width="0.8"/>
<rect x="15.3" y="251" width="160.6" height="6.9" fill="#e6e6e6" stroke="#c4c4c4" stroke-width="0.6"/>
<rect x="73.4" y="262.4" width="44.6" height="13.2" fill="#e1e1e1" stroke="#adadad" stroke-width="0.7"/>
<path d="M163.3,61.4 h3.4 M164,61.4 v3.2 h2 v-3.2 M163,64.6 h4 M165,64.6 v2.4" stroke="#222" stroke-width="0.7" fill="none"/>
<path d="M171.6,61.8 l3.6,4 M175.2,61.8 l-3.6,4" stroke="#111" stroke-width="1.1"/>
<path d="M14,545.5 H178" stroke="#d8dbe4" stroke-width="0.6"/>
<rect x="121.8" y="545.2" width="54.4" height="10.4" fill="#fdfdfd" stroke="#aeb4c2" stroke-width="0.7"/>
<rect x="17" y="546.6" width="7.6" height="6.6" fill="#f4f4f6" stroke="#555" stroke-width="0.7"/><path d="M17,549 h7.6 M20,546.6 v6.6" stroke="#555" stroke-width="0.6"/><path d="M21.2,550.6 h2.4 M21.2,552 h2.4" stroke="#888" stroke-width="0.5"/>
<path d="M68,546 V555" stroke="#c2c6d0" stroke-width="0.6"/>
<path d="M70.8,548 h5 v5 h-5z" fill="#f0d46a" stroke="#6a5a20" stroke-width="0.7"/><path d="M70.8,548 l1.8,-1.6 h5 l-1.8,1.6 M75.8,553 l1.8,-1.6 v-5" fill="none" stroke="#6a5a20" stroke-width="0.6"/>
<rect x="125.4" y="546.4" width="2.6" height="3.4" fill="#c8323a"/><rect x="127.6" y="546" width="3" height="4.2" fill="#f0c838" stroke="#8a6a14" stroke-width="0.4"/><path d="M124.8,551.2 h5 l1.6,-1.4 v2.2 l-1.6,1.2 h-5z" fill="#f6f6fa" stroke="#555" stroke-width="0.5"/>
<g transform="translate(6.2,7.6) rotate(-14)"><rect x="-4.2" y="-3.4" width="8.4" height="6.8" rx="1" fill="#f3eaea" stroke="#d8c8c8" stroke-width="0.4"/><rect x="-2.6" y="-1.8" width="5.2" height="3.6" fill="#e0563c"/></g>
<path d="M918.8,8 h6.4" stroke="#fff" stroke-width="0.8"/>
<rect x="949.2" y="5.6" width="5" height="5" fill="none" stroke="#fff" stroke-width="0.8"/><path d="M950.8,5.6 v-1.4 h5 v5 h-1.4" fill="none" stroke="#fff" stroke-width="0.8"/>
<path d="M980,4.8 l6,6 M986,4.8 l-6,6" stroke="#fff" stroke-width="0.8"/>
<path d="M3.5,18.5 v9" stroke="#9aa3b8" stroke-width="0.9" stroke-dasharray="0.9 0.9"/>
<path d="M804,587.5 V598.5" stroke="#d9d9dc" stroke-width="0.8"/>
<path d="M845.6,587.5 V598.5" stroke="#d9d9dc" stroke-width="0.8"/>
<path d="M887.3,587.5 V598.5" stroke="#d9d9dc" stroke-width="0.8"/>
<path d="M915.6,587.5 V598.5" stroke="#d9d9dc" stroke-width="0.8"/>
<path d="M949.4,587.5 V598.5" stroke="#d9d9dc" stroke-width="0.8"/>
<path d="M973.8,587.5 V598.5" stroke="#d9d9dc" stroke-width="0.8"/>
<rect x="290" y="599" width="29.5" height="26" fill="#1c4a7c"/>
<rect x="290" y="623.2" width="29.5" height="1.8" fill="#9ccaf2"/>
<rect x="421" y="623.2" width="26.5" height="1.8" fill="#9ccaf2"/>
<path d="M10,607.6 l4.8,-0.7 v4.7 h-4.8z M15.6,606.8 l5.6,-0.8 v5.6 h-5.6z M10,612.4 h4.8 v4.7 l-4.8,-0.7z M15.6,612.4 h5.6 v5.6 l-5.6,-0.8z" fill="#fff"/>
<circle cx="48.8" cy="610" r="3.3" fill="none" stroke="#fff" stroke-width="1.1"/><path d="M46.4,612.6 l-4.4,4.3" stroke="#fff" stroke-width="1.1"/>
<rect x="74.6" y="609" width="5.6" height="6" fill="none" stroke="#fff" stroke-width="1"/><path d="M72.8,608 v8 M82,608 v8 M73,607.6 h2 M73,616.4 h2 M80,607.6 h2 M80,616.4 h2" stroke="#fff" stroke-width="0.9"/><path d="M83.4,607 v2 M83.4,610.5 v6.5" stroke="#fff" stroke-width="0.9"/>
<path d="M105.8,613.2 a6.2,6.6 0 0 1 12.3,-0.6 v1.6 h-8.2 a3.4,3.2 0 0 0 6.6,1.6 v2.4 a6.4,6 0 0 1 -10.7,-5z M109.9,611.4 h4.6 a2.3,2.4 0 0 0 -4.6,0z" fill="#1e8ae6" fill-rule="evenodd"/>
<path d="M136.3,607 h4.6 l1.2,1.4 h9 v9 h-14.8z" fill="#f2c84a"/><path d="M136.3,609.6 h14.8 v8 h-14.8z" fill="#fbe07a"/><rect x="139.6" y="613" width="8.2" height="4.6" fill="#3d8fd6"/><rect x="141.4" y="614.6" width="4.6" height="3" fill="#fbe07a"/>
<rect x="168" y="606" width="13" height="12.6" fill="#4d9fdc"/><rect x="169.6" y="607.4" width="9.8" height="9.8" fill="#e9f2fb"/><circle cx="174.5" cy="612.3" r="4.3" fill="#f0803a"/><path d="M173,609.9 v4.8 l3.8,-2.4z" fill="#fff"/>
<path d="M201,606.4 l7,-2 l6.6,2.6 v10 l-6.6,1.6 l-7,-1.8z" fill="#f8e08a"/><rect x="208" y="607.4" width="6.8" height="8" fill="#fdf6dc"/><circle cx="207.4" cy="612.6" r="4.2" fill="#f4c83a" stroke="#e0a820" stroke-width="0.6"/><path d="M205.4,612.2 l2,1.6 l2.4,-2.6" stroke="#fff" stroke-width="0.9" fill="none"/>
<rect x="233" y="610.8" width="8" height="6.4" fill="#c9c9ea"/><rect x="234" y="612.2" width="4.6" height="3.6" fill="#2a2a4a"/><rect x="242.6" y="604.2" width="5.4" height="5.2" fill="#1f5a2a"/><path d="M244.2,605.6 h2 v1.2 h-2 v1.2 h2" stroke="#d8f0d8" stroke-width="0.6" fill="none"/>
<g transform="translate(273,611.6) rotate(-17)"><rect x="-6.4" y="-4.8" width="12.8" height="9.6" rx="1.2" fill="#f5ecec"/><text x="-5.4" y="3.1" font-family="Liberation Sans,sans-serif" font-weight="bold" font-size="8.4" fill="#d24a40" letter-spacing="-0.6">AC</text></g>
<g transform="translate(305,611.6) rotate(-17)"><rect x="-6.4" y="-4.8" width="12.8" height="9.6" rx="1.2" fill="#f5ecec"/><text x="-5.4" y="3.1" font-family="Liberation Sans,sans-serif" font-weight="bold" font-size="8.4" fill="#d24a40" letter-spacing="-0.6">AC</text></g>
<circle cx="337.5" cy="612" r="7" fill="#e04a3a"/><path d="M337.5,612 L331.4,608.5 A7,7 0 0 0 337.9,619 L341,613.8z" fill="#3aa757"/><path d="M337.5,612 L341,613.8 L337.9,619 A7,7 0 0 0 344.2,610 L338,608.8z" fill="#f8c530"/><path d="M337.5,605 A7,7 0 0 1 344.2,610 H337.5z" fill="#e04a3a"/><circle cx="337.5" cy="612" r="3.1" fill="#f4f4f4"/><circle cx="337.5" cy="612" r="2.4" fill="#4a8af0"/>
<rect x="362" y="604.2" width="14.8" height="15.6" rx="1.6" fill="#3b7cc6"/><rect x="364" y="606.4" width="5.4" height="4.4" fill="#e8f0fa"/><circle cx="371.4" cy="609.6" r="2.6" fill="none" stroke="#e8f0fa" stroke-width="0.9"/><rect x="366.6" y="613.4" width="7.4" height="4" fill="#dfe9f6"/>
<rect x="395.4" y="605.2" width="4.4" height="12.6" fill="#d8d8f0"/><circle cx="403.6" cy="613.6" r="5" fill="#b9b4ea" stroke="#2a2a6a" stroke-width="0.8"/><rect x="395.6" y="604.4" width="11.2" height="3.2" fill="#c8323a"/><rect x="399.4" y="608.4" width="3" height="4" fill="#f4f4fa"/>
<defs><linearGradient id="drop" x1="0" y1="0" x2="1" y2="1"><stop offset="0" stop-color="#f8d040"/><stop offset="0.4" stop-color="#ee5a8a"/><stop offset="0.75" stop-color="#7a6ae0"/><stop offset="1" stop-color="#3ab4f0"/></linearGradient></defs>
<path d="M434.4,603.8 q6.4,7.4 6.4,11 a6.4,5.6 0 0 1 -12.8,0 q0,-3.6 6.4,-11z" fill="url(#drop)"/>
<path d="M776,614.4 l4.3,-4.2 l4.3,4.2" fill="none" stroke="#fff" stroke-width="1"/>
<path d="M795,606.4 l4.4,1.4 v4 q0,3.4 -4.4,5.6 q-4.4,-2.2 -4.4,-5.6 v-4z" fill="#fdfdfd"/><path d="M795,606.4 v11 M790.6,611.6 h8.8" stroke="#c8ccd4" stroke-width="0.6"/><path d="M799.2,612.4 l3,5.2 h-6z" fill="#f4c430"/><path d="M799.2,614 v2" stroke="#333" stroke-width="0.6"/>
<rect x="808.6" y="609.4" width="5.4" height="7.6" rx="0.8" fill="none" stroke="#f0f0f0" stroke-width="0.9"/><rect x="809.8" y="606.8" width="3" height="2.6" fill="none" stroke="#f0f0f0" stroke-width="0.8"/><path d="M814.6,616.4 q1.6,-0.4 1.6,-2" stroke="#ddd" stroke-width="0.6" fill="none"/>
<rect x="823.6" y="611.6" width="6.8" height="5.4" rx="0.8" fill="none" stroke="#1a3f7c" stroke-width="1"/><path d="M825,611.6 v-1.6 a2,2 0 0 1 4,0 v1.6" fill="none" stroke="#1a3f7c" stroke-width="1"/>
<rect x="837.6" y="607" width="10.6" height="10" fill="#fbfbf6"/><circle cx="841.2" cy="610.4" r="2" fill="none" stroke="#e8b020" stroke-width="1.3"/><path d="M842.6,611.8 l3.6,3.6 M844.6,613.8 l-1.2,1.2" stroke="#e8b020" stroke-width="1.3"/>
<rect x="853.2" y="607" width="10.6" height="10" fill="#fbfbf6"/><circle cx="856.8000000000001" cy="610.4" r="2" fill="none" stroke="#e8b020" stroke-width="1.3"/><path d="M858.2,611.8 l3.6,3.6 M860.2,613.8 l-1.2,1.2" stroke="#e8b020" stroke-width="1.3"/>
<rect x="870.6" y="608" width="8" height="6" fill="none" stroke="#f4f4f4" stroke-width="0.9"/><path d="M872.4,616.4 h4.4 M874.6,614 v2.4 M869.4,607.2 h3 M869.4,609 h1.6" stroke="#f4f4f4" stroke-width="0.8"/>
<path d="M884,610.6 h1.8 l2.4,-2.2 v7.4 l-2.4,-2.2 h-1.8z" fill="none" stroke="#f4f4f4" stroke-width="0.8"/><path d="M889.6,610.2 q1.2,1.8 0,3.8 M891,608.8 q2.2,3.2 0,6.6" fill="none" stroke="#cfd6e0" stroke-width="0.7"/>
<path d="M973.4,607.4 h10.2 v7.6 h-6.4 l-1.6,1.8 v-1.8 h-2.2z" fill="#fdfdfd"/><path d="M975,609.6 h7 M975,611.4 h7 M975,613.2 h4" stroke="#20384e" stroke-width="0.6"/><circle cx="982.4" cy="615" r="1.6" fill="#fdfdfd" stroke="#8a9ab0" stroke-width="0.5"/>
<path d="M997.2,599 V625" stroke="#4a6480" stroke-width="0.6"/>
</svg>
<div class="abs tx" style="left:14.5px;top:3.2px;font-size:7.7px;color:#fff;letter-spacing:-0.086px">AlphaCAM Advanced Fräsen: Boden Alu_LightOP1</div>
<div class="abs tx" style="left:9.9px;top:18.6px;font-size:7.4px;color:#1c1c1c;letter-spacing:0.187px">Datei</div>
<div class="abs tx" style="left:36.5px;top:18.6px;font-size:7.4px;color:#1c1c1c;letter-spacing:0.175px">Bearbeiten</div>
<div class="abs tx" style="left:82.5px;top:18.6px;font-size:7.4px;color:#1c1c1c;letter-spacing:0.036px">Ansicht</div>
<div class="abs tx" style="left:115.5px;top:18.6px;font-size:7.4px;color:#1c1c1c;letter-spacing:0.165px">Geometrie</div>
<div class="abs tx" style="left:161px;top:18.6px;font-size:7.4px;color:#1c1c1c;letter-spacing:0.273px">3D</div>
<div class="abs tx" style="left:179px;top:18.6px;font-size:7.4px;color:#1c1c1c;letter-spacing:-0.159px">Extras</div>
<div class="abs tx" style="left:207px;top:18.6px;font-size:7.4px;color:#1c1c1c;letter-spacing:-0.036px">CAD</div>
<div class="abs tx" style="left:231px;top:18.6px;font-size:7.4px;color:#1c1c1c;letter-spacing:0.131px">NC-Pfade</div>
<div class="abs tx" style="left:273px;top:18.6px;font-size:7.4px;color:#1c1c1c;letter-spacing:0.127px">Parametrik</div>
<div class="abs tx" style="left:318px;top:18.6px;font-size:7.4px;color:#1c1c1c;letter-spacing:0.174px">AUTO-Bearbeitung</div>
<div class="abs tx" style="left:393px;top:18.6px;font-size:7.4px;color:#1c1c1c;letter-spacing:0.241px">Hilfe</div>
<div class="abs tx" style="left:15.8px;top:59.9px;font-size:8.4px;color:#1c1c1c;letter-spacing:-0.216px">Solid Simulation</div>
<div class="abs tx" style="left:78px;top:144.5px;font-size:6.9px;color:#1c1c1c;letter-spacing:-0.081px">Toleranz</div>
<div class="abs tx" style="left:109px;top:144px;font-size:6.4px;color:#505050;letter-spacing:-0.213px">0.04</div>
<div class="abs tx" style="left:52.7px;top:158.4px;font-size:6.9px;color:#1c1c1c;letter-spacing:-0.149px">Transparenz</div>
<div class="abs tx" style="left:76.4px;top:265px;font-size:6.8px;color:#1c1c1c;letter-spacing:-0.118px">Konfigurieren</div>
<div class="abs tx" style="left:27px;top:546.2px;font-size:7.4px;color:#5f6368;letter-spacing:0.057px">Bearbeitu...</div>
<div class="abs tx" style="left:81px;top:546.2px;font-size:7.4px;color:#5f6368;letter-spacing:-0.074px">Arbeitseb...</div>
<div class="abs tx" style="left:135px;top:546.2px;font-size:7.4px;color:#111;letter-spacing:0.009px">Solid Sim...</div>
<div class="abs tx" style="left:978.75px;top:589.6px;font-size:7.4px;color:#222;letter-spacing:-0.193px">HIDE</div>
<div class="abs tx" style="left:901.9px;top:608.2px;font-size:7.3px;color:#fff;letter-spacing:-0.335px">DEU</div>
<div class="abs tx" style="left:934.4px;top:602px;font-size:7.2px;color:#fff;letter-spacing:-0.180px">10:12</div>
<div class="abs tx" style="left:925px;top:614px;font-size:7.4px;color:#fff;letter-spacing:-0.075px">09.07.2020</div>
<!--/UI-->
</body>
</html>
